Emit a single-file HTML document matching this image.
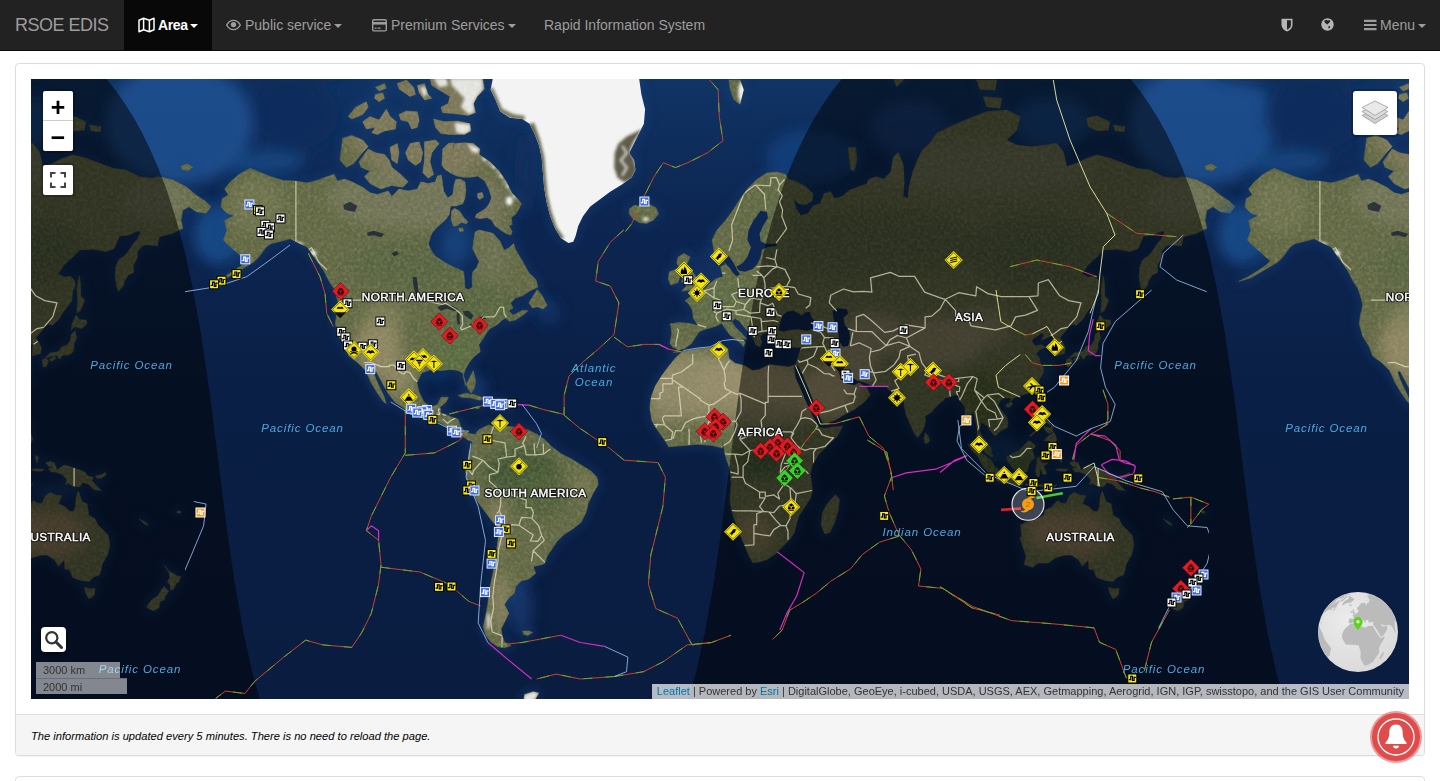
<!DOCTYPE html>
<html lang="en"><head><meta charset="utf-8"><title>RSOE EDIS</title>
<style>
*{box-sizing:border-box}
html,body{margin:0;padding:0}
body{font-family:"Liberation Sans",Arial,sans-serif;font-size:14px;line-height:1.42857;color:#333;background:#fff;width:1440px;height:781px;overflow:hidden;position:relative}
.navbar{position:absolute;left:0;top:0;width:1440px;height:51px;background:#222;border-bottom:1px solid #080808}
.brand{position:absolute;left:15px;top:0;height:50px;line-height:50px;font-size:18px;letter-spacing:-.5px;color:#9d9d9d}
.nav a{position:absolute;top:0;height:50px;line-height:50px;color:#9d9d9d;font-size:14px;text-decoration:none;white-space:nowrap}
.nav a.active{background:#080808;color:#fff}
.caret{display:inline-block;width:0;height:0;margin-left:3px;vertical-align:middle;border-top:4px solid currentColor;border-right:4px solid transparent;border-left:4px solid transparent}
.panel{position:absolute;left:15px;width:1410px;border:1px solid #ddd;border-radius:4px;background:#fff;box-shadow:0 1px 1px rgba(0,0,0,.05)}
#p1{top:63px;height:693px}
#p2{top:776px;height:60px}
.footer{position:absolute;left:0;top:650px;width:1408px;height:41px;background:#f5f5f5;border-top:1px solid #ddd;border-radius:0 0 3px 3px;padding:10px 15px;font-size:11.15px;font-style:italic;color:#000;line-height:23px}
#map{position:absolute;left:31px;top:79px;width:1378px;height:620px;overflow:hidden;background:#0d2244}
#map svg{position:absolute;left:0;top:0}
.lbtn{position:absolute;background:#fff;color:#000;text-align:center}
.zoomc{position:absolute;left:10px;top:10px;width:34px;height:64px;border:2px solid rgba(0,0,0,.2);border-radius:4px;background-clip:padding-box}
.zoomc div{width:30px;height:30px;background:#fff;font:bold 25px/37px "Liberation Mono",monospace;overflow:hidden;text-align:center;color:#000}
.zoomc div:first-child{border-radius:2px 2px 0 0;border-bottom:1px solid #ccc;height:30px}
.zoomc div:last-child{border-radius:0 0 2px 2px}
.fsc{position:absolute;left:10px;top:84px;width:34px;height:34px;border:2px solid rgba(0,0,0,.2);border-radius:4px}
.fsc div{width:30px;height:30px;background:#fff;border-radius:2px}
.layers{position:absolute;left:1320px;top:10px;width:48px;height:48px;border:2px solid rgba(0,0,0,.2);border-radius:5px}
.layers div{width:44px;height:44px;background:#fff;border-radius:3px}
.attr{position:absolute;right:0;bottom:0;height:15px;background:rgba(255,255,255,.7);font-size:11px;line-height:15px;padding:0 5px;color:#333;white-space:nowrap}
.attr a{color:#0078a8;text-decoration:none}
.scale{position:absolute;left:5px;font-size:11px;line-height:16px;color:#333;background:rgba(255,255,255,.5);padding:0 0 0 7px;white-space:nowrap;overflow:hidden}
.search{position:absolute;left:10px;top:548px;width:25px;height:25px;background:#fff;border-radius:4px;box-shadow:0 1px 5px rgba(0,0,0,.65)}
.bell{position:absolute;left:1372px;top:713px;width:48px;height:48px;border-radius:50%;background:#e04b4c;box-shadow:0 0 0 2px rgba(224,75,76,.55)}
</style></head><body>
<div class="navbar">
<div class="brand">RSOE EDIS</div>
<div class="nav">
<a class="active" style="left:124px;width:88px"><svg style="position:absolute;left:14px;top:17px" width="17" height="16" viewBox="0 0 17 16"><path d="M1 3.2 5.6 1.3 11.4 3.2 16 1.3V12.8L11.4 14.7 5.6 12.8 1 14.7Z M5.6 1.3V12.8 M11.4 3.2V14.7" fill="none" stroke="#fff" stroke-width="1.5" stroke-linejoin="round"/></svg><span style="position:absolute;left:34px;font-weight:bold;letter-spacing:-.4px">Area</span><span class="caret" style="position:absolute;left:66px;top:24px;margin:0"></span></a>
<a style="left:226px;padding-left:19px"><svg style="position:absolute;left:0;top:18px" width="15" height="14" viewBox="0 0 15 14"><path d="M.7 7C2.5 3.6 5 2.4 7.5 2.4S12.5 3.6 14.3 7C12.5 10.4 10 11.6 7.5 11.6S2.5 10.4.7 7Z" fill="none" stroke="#9d9d9d" stroke-width="1.4"/><circle cx="7.5" cy="6.6" r="2.7" fill="#9d9d9d"/></svg>Public service<span class="caret"></span></a>
<a style="left:372px;padding-left:19px"><svg style="position:absolute;left:0;top:19px" width="15" height="13" viewBox="0 0 15 13"><rect x=".7" y=".7" width="13.6" height="11.2" rx="1.3" fill="none" stroke="#9d9d9d" stroke-width="1.4"/><rect x=".7" y="3" width="13.6" height="2.6" fill="#9d9d9d"/><rect x="2.6" y="8.6" width="2" height="1.2" fill="#9d9d9d"/><rect x="5.6" y="8.6" width="3" height="1.2" fill="#9d9d9d"/></svg>Premium Services<span class="caret"></span></a>
<a style="left:544px">Rapid Information System</a>
<svg style="position:absolute;left:1281px;top:18px" width="12" height="14" viewBox="0 0 12 14"><path d="M.5.8H11.5V7C11.5 10 9 12.3 6 13.5 3 12.3.5 10 .5 7Z" fill="#b5b5b5"/><path d="M6 2.3H9.9V7C9.900 9 8.300 10.600 6 11.700Z" fill="#222"/></svg>
<svg style="position:absolute;left:1321px;top:18px" width="13" height="13" viewBox="0 0 13 13"><circle cx="6.500" cy="6.500" r="6.200" fill="#b5b5b5"/><path d="M3.200 2.800 5.200 1.800 6.800 2.600 8.600 2 9.300 3.600 7.800 5 6.300 6.500 5 5.600 3.800 4.600Z M7.200 8.200 8.800 8 9 9.800 7.800 10.800Z" fill="#222"/></svg>
<svg style="position:absolute;left:1364px;top:19px" width="13" height="12" viewBox="0 0 13 12"><path d="M0 1.900H12.500M0 6H12.500M0 10.100H12.500" stroke="#9d9d9d" stroke-width="2.100"/></svg>
<a style="left:1380px">Menu<span class="caret"></span></a>
</div>
</div>
<div class="panel" id="p1">
<div class="footer">The information is updated every 5 minutes. There is no need to reload the page.</div>
</div>
<div class="panel" id="p2"></div>
<div id="map">
<svg width="1378" height="620" viewBox="0 0 1378 620">
<defs>
<filter id="b8" x="-50%" y="-50%" width="200%" height="200%"><feGaussianBlur stdDeviation="7"/></filter>
<filter id="b5" x="-20%" y="-20%" width="140%" height="140%"><feGaussianBlur stdDeviation="5"/></filter>
<filter id="b2" x="-50%" y="-50%" width="200%" height="200%"><feGaussianBlur stdDeviation="1.6"/></filter>
<filter id="nz" x="0" y="0" width="100%" height="100%"><feTurbulence type="fractalNoise" baseFrequency=".3" numOctaves="3" seed="7"/><feColorMatrix type="matrix" values="0 0 0 0 .52  0 0 0 0 .52  0 0 0 0 .36  .9 .9 0 0 -.72"/></filter>
<linearGradient id="og" x1="0" y1="0" x2="0" y2="1"><stop offset="0" stop-color="#103465"/><stop offset=".2" stop-color="#0d2753"/><stop offset=".5" stop-color="#0a1f45"/><stop offset="1" stop-color="#0a1d41"/></linearGradient>
<clipPath id="lc"><path d="M193.6,109.9 199.7,102.6 208.2,95.3 219.2,89.3 227.7,92.9 239.8,97.8 252,101.4 264.2,102.1 276.3,103.9 286.1,101.4 295.8,97.8 303.1,95.3 306.3,101.9 313.5,100.1 320.8,102.8 331.7,108.3 339,113.7 346.3,115.5 357.2,111.9 360.8,117.4 368.1,110.1 377.2,111.9 386.3,110.1 389.9,102.8 397.2,104.6 404.5,102.8 404.4,102.8 406.3,97.1 410.3,96 411.5,104.1 412.6,112.1 416.7,119 421.9,115.6 423,106.4 424.7,100.6 429.3,100 434,102.9 434.9,111 434,119 431.7,124.8 424.7,127.1 419.5,127.1 418.4,135.2 414.4,140.9 406.3,147.9 400.5,154.8 397.6,164 397.1,171 397.5,165.8 400.7,172.2 404.5,177.3 412.2,182.5 421.2,187.6 428.9,190.8 432.7,192.7 433.4,200.4 434,209.3 437.8,210.6 441.7,208.1 441,200.4 441.7,192.7 445.5,188.9 448.1,182.5 444.2,174.8 441.7,169.7 443,159.4 444.2,153 448.1,151.1 452.3,151.9 462,154.3 469.3,162.8 473,171.3 477.8,168.9 482.7,164.5 484.4,170.5 491.7,182.6 497.8,193.6 505.1,200.9 506.8,208.2 499,211.8 491.7,216.7 484.4,219.1 479.6,224 482,228.9 477.6,231.8 482,236.2 491.7,231.3 497.1,231.8 491.7,236.2 484.4,241 478.4,242.3 474.7,239.1 471.1,241 467.4,244.7 463.8,247.1 458.9,249.6 455.2,254.4 451.6,260.5 447.9,265.4 449.2,272.7 443.1,277.5 438.2,283.6 434.6,289.7 432.1,297 434.6,306.7 442.3,291.6 444.7,302.5 443,309.8 440.3,314 436.9,309.8 434.5,302.5 431.6,294 427.2,291.6 419.9,290.4 410.1,291.6 400.4,290.4 390.7,294 385.8,303.7 388.2,313.5 393.1,323.2 400.4,328.1 406.5,325.6 410.1,318.3 417.4,318.3 415,323.2 408.9,328.1 410.1,334.2 415,335.4 419.9,337.8 427.2,340.2 429.6,347.5 433.3,352.4 439.3,354.8 447.9,356.1 453.9,357.3 450.3,360.9 443,363.4 436.9,360.9 432,357.3 424.7,353.6 415,347.5 407.7,342.7 400.4,340.2 390.7,337.8 378.5,332.9 371.2,328.1 363.9,323.2 356.6,313.5 350.5,302.5 344.9,292.1 342.5,293 344.9,300.1 348.8,308.6 353.2,317.9 355.1,324.7 352.2,322.2 345.7,313 339.6,302.5 334.7,291.6 327.4,284.3 317.7,277 314,267.2 307.9,257.5 304.3,245.3 305.5,235.6 309.2,221 308,226.7 305.5,217 303.1,209.7 298.2,202.4 293.4,192.7 288.5,185.4 281.2,175.6 276.3,168.3 269,164.7 259.3,159.8 249.6,162.3 239.8,164.7 235,168.3 227.7,178.1 222.8,182.9 210.6,190.2 196,198.8 183.9,202.4 193.6,197.5 203.3,191.5 210.6,186.6 215.5,181.7 210.6,178.1 205.8,173.2 199.7,168.3 192.4,161 196,151.3 193.6,141.6 203.3,136.7 196,134.3 190,128.2 191.2,119.7 197.3,116ZM506.3,210.6 511.2,216.7 516.1,226.4 512.4,230.1 506.3,227.7 501.5,228.9 497.8,224 501.5,217.9ZM427.2,316.4 434.5,314.2 444.2,315.9 453.9,319.6 449.1,321.3 439.3,318.8 430.8,318.3ZM460,322 467.3,320.8 474.6,324.4 471,327.6 463.7,326.9 458.8,325.2ZM309,81 311.7,59.2 320.8,56.5 331.7,61 337.2,67.4 329.9,75.5 322.6,84.6 315.4,88.3ZM328.1,82.8 337.2,70.1 344.5,73.7 353.5,75.5 358.1,81 360.8,88.3 369.9,95.5 377.2,102.8 371.7,108.3 360.8,106.5 349.9,110.1 339,104.6 333.5,97.4 339,91.9 329.9,88.3ZM359,68.3 366.3,64.6 368.1,73.7 366.3,84.6 360.8,81ZM374.5,73.7 379,64.6 388.1,62.8 391.7,73.7 389.9,82.8 384.5,86.5 377.2,81ZM393.5,62.8 404.5,61 408.1,64.6 400.8,73.7 399,82.8 402.6,95.5 397.2,99.2 391.7,93.7 393.5,81ZM317.2,37.4 324.5,28.3 335.4,22.8 337.2,28.3 331.7,35.5 320.8,40.1ZM331.7,42.8 339,37.4 348.1,41 355.4,30.1 359,37.4 365.4,42.8 364.5,50.1 353.5,51.9 346.3,55.5 340.8,53.7 344.5,48.3 335.4,50.1ZM368.1,35.5 375.4,31.9 386.3,32.8 388.1,41 386.3,48.3 380.8,50.1 377.2,42.8 369.9,41ZM402.6,40.1 413.5,42.8 426.3,41.9 439,44.6 439.9,51.9 433.5,55.5 419,55.5 409.9,54.6 404.5,48.3ZM366.3,4.6 375.4,1 382.6,8.3 384.5,15.5 379,17.4 368.1,10.1ZM386.3,6.5 393.5,4.6 397.2,15.5 400.8,19.2 393.5,21 388.1,13.7ZM399,-0.8 451.7,-0.8 453.5,10.1 446.3,17.4 442.6,24.6 444.5,33.7 437.2,36.5 422.6,34.6 411.7,33.7 409.9,28.3 417.2,24.6 419,17.4 409.9,11.9 400.8,6.5ZM344.5,8.3 353.5,4.6 355.4,9.2 348.1,11.9ZM344.5,15.5 351.7,13.7 353.5,19.2 348.1,22.8 343.5,19.2ZM445.5,353.2 447.9,350.7 457.7,345.9 465,348.3 474.7,347.1 484.4,348.3 496.6,350.7 506.3,355.6 513.6,360.5 520.9,367.8 530.7,375.1 540.4,379.9 550.1,386 559.9,392.1 566,398.2 567.2,405.5 562.3,414 557.4,423.7 555,433.5 550.1,443.2 542.8,449.3 533.1,455.4 525.8,462.7 520.9,470 516.1,477.3 513.6,484.6 511.2,485.4 502.3,487.7 504.6,494.3 497.9,499.9 490.1,502.1 484.6,507.7 483.4,514.3 477.9,518.8 473.4,525.4 477.9,534.3 473.4,543.2 470.1,549.9 471.2,556.6 473.4,563.2 480.1,566.6 473.4,568.8 466.8,567.7 460.1,563.2 454.6,556.6 452.3,547.7 454.6,536.6 456.8,525.4 457.9,514.3 460.1,503.2 462.3,492.1 464.6,481 463.8,477.3 466.2,467.5 467.4,457.8 466.2,448.1 460.1,440.8 452.8,431 445.5,421.3 440.6,411.6 435.8,401.8 434.6,392.1 437,382.4 438.2,372.6 441.9,362.9ZM598.3,130 603.1,126.3 610.4,127.5 617.7,125.1 625,128.8 627.5,134.8 622.6,140.9 615.3,144.6 608,143.4 601.9,139.7 598.3,134.8ZM410.8,86.5 411.7,70.1 417.2,64.6 422.6,63.7 421.7,73.7 423.5,64.6 433.5,63.7 442.6,64.6 449,70.1 448.1,75.5 459,82.8 468.1,91.9 475.4,102.8 480.8,113.7 487,120.2 490.4,124.8 488.1,129.4 484.7,135.2 480.1,138.6 481.2,145.6 477.8,146.7 481.2,152.5 480.1,155.9 475.5,154.8 469.7,151.3 463.9,146.7 460.5,140.9 455.9,138.6 448.9,139.8 444.3,138.6 445.5,135.2 451.2,131.7 454.7,129.4 458.2,124.8 460.5,119 458.2,111 453.6,101.7 446.6,97.1 439.7,98.3 432.8,98.3 425.9,97.1 419,93.7 413.8,90.2 411.5,86.8ZM420.7,131.7 423.6,129.4 428.2,131.7 432.8,138.6 436.8,142.7 435.1,145 430.5,143.2 425.9,146.7 422.4,147.3 420.1,140.9ZM427.6,149.2 431.7,149 432.6,151.9 428.8,152.7ZM446.6,114.4 451.2,113.5 452.6,117.9 448.9,120.4 446.6,118.5ZM642.1,273.3 655.5,272.1 667.7,269.7 679.8,268.5 692,266 696.9,269.7 698.1,279.4 704.2,284.3 713.9,286.7 721.2,291.6 728.5,290.4 738.2,285.5 748,286.7 757.7,287.9 765,285.5 764,287.7 768.2,274.3 770.7,267.7 765.7,268.5 759,267.7 752.3,269.3 745.7,267.7 744,261 745.7,256 744,254.3 737.3,253.5 732.3,254.3 729,257.7 730.7,262.7 729,267.7 724.8,266 722.3,259.3 719,254.3 714,249.3 709,242.7 704,239.3 700.7,242.7 704,247.7 710.7,254.3 715.7,260.2 711.5,259.3 714,263.5 712.3,267.7 710.7,265.2 705.7,261 699,256 694,249.3 690.7,244.3 685.7,246.8 680.7,248.5 674,250.2 668.2,252.7 664.8,257.7 660.7,264.3 654,269.3 647.3,271 641.5,267.7 639,264.3 640.7,254.3 639.8,245.2 647.3,243.5 657.3,244.3 667.3,246.8 662.3,239.3 661.5,231 657.3,224.3 654,221.8 660.4,217 667.7,213.4 673.8,209.7 678.6,204.8 684.7,200 692,197.5 689.6,187.8 694.4,185.4 692,180.5 688.4,179.3 683.5,174.4 681.1,161 685.9,151.3 694.4,141.6 701.7,131.8 707.8,122.1 716.3,109.9 726.1,100.2 735.8,94.1 745.5,92.9 754.1,95.3 757.7,100.2 765,102.6 774.7,107.5 782,114.8 780.8,122.1 774.7,125.8 767.4,124.5 762.6,119.7 765,129.4 769.9,136.7 777.2,134.3 782,127 789.3,124.5 793,114.8 799.1,112.4 803.9,119.7 811.2,117.2 818.5,111.2 828.3,107.5 835.6,105.1 838,100.2 845.3,97.8 852.6,100.2 859.9,92.9 862.3,78.3 867.2,73.4 872.1,85.6 873.3,102.6 872.1,117.2 876.9,119.7 878.2,107.5 881.8,92.9 886.7,80.7 891.5,71 899,64.3 905.7,54.3 919,47.7 939,39.3 955.7,32.7 975.7,31 989,37.7 985.7,51 975.7,61 985.7,66 999,67.7 1015.7,66 1025.7,64.3 1032.3,72.7 1035.7,87.7 1045.7,84.3 1055.7,79.3 1065.7,76 1079,79.3 1092.3,84.3 1105.7,89.3 1119,91 1132.3,97.7 1145.7,99.3 1152.3,97.7 1165.7,101 1179,107.7 1189,116 1199,122.7 1204,127.7 1199,134.3 1189,132.7 1182.3,127.7 1175.7,131 1174,141 1175.7,149.3 1165.7,154.3 1152.3,157.7 1150.4,166.9 1139.6,165.7 1135.3,166.9 1130.5,172.5 1130.2,179 1126.2,186.8 1126.8,193.4 1121.1,195.9 1117.1,203.1 1116.3,206.8 1111.7,212.3 1109.7,207.7 1108.3,198.3 1108.6,188.4 1112,180.6 1116,177.9 1120.5,173.6 1126.5,164.6 1130.5,159.9 1133.9,152.7 1130.2,152.1 1121.1,156.3 1112.6,156.9 1106.9,169.7 1098.4,172.5 1087,170.3 1072.8,170.8 1065.6,177.9 1057.1,185.8 1050.9,194.9 1057.1,198.3 1063.7,197.3 1067.6,201.7 1068.2,206.8 1065.6,212.3 1064.8,222 1057.1,231.7 1051.4,240.7 1044.9,246.5 1041.5,245 1037.5,248.1 1034.9,251.5 1028.7,259 1031.2,262.3 1034.4,268.8 1033.5,274.4 1028.7,276.1 1025.3,276.8 1025.5,271.6 1026.1,265.9 1021,264.5 1022.4,259 1019.8,256.8 1013.9,259.8 1010.7,260.9 1013,255.3 1010.2,254.2 1005.9,257.5 1001.6,260.1 1001.1,262.7 1004.5,267 1010.2,265.6 1014.4,268.1 1008.2,271.3 1005.1,275.1 1008.2,278.6 1009.6,285.3 1012.7,288.7 1012.5,293.6 1009.6,298.5 1006.5,304.9 1001.6,309.6 997.4,314.2 991.1,316.1 988.8,316.7 984,318.6 978.9,322.5 980.3,319.8 978.3,318.9 973.2,318.9 969.5,321 966.9,326.4 971.2,332.4 975.5,337.5 976.9,342.7 976.6,348.3 969.8,351.8 964.1,356.9 959,351.5 956.7,347.1 953.3,345.1 950.4,342.7 948.2,351.5 951,357.2 954.7,362.1 960.1,368.7 960.1,374.4 962.4,377.5 960.1,377.8 954.1,373.2 951.3,365.8 945.6,358.7 946.7,351.5 945,342.7 943.9,338.3 942.5,333.3 937.4,336 934.2,335.4 934.2,327.9 928.5,321.3 927.1,316.4 923.4,315.8 917.7,318.2 913.5,318.9 912.9,321 907.8,324.9 900.1,333.3 894.1,336.9 894.4,342.7 893.3,347.1 891.3,352 888.4,356.1 886.4,358.4 882.7,352.9 878.8,344.2 875.1,335.4 873.1,326.4 872.8,317.9 870.8,320.4 866,320.7 862.3,316.1 860,312.1 857.4,310.5 855.7,308 849.5,307.4 841.2,307.4 838,305 830.7,302.5 825.8,301.3 818.5,296.4 811.2,291.6 805.2,290.4 807.6,294 811.2,301.3 816.1,305 823.4,306.2 828.3,303.7 835.6,308.6 839.2,315.9 833.1,323.2 823.4,330.5 813.7,335.4 804.4,341 794.7,344.6 791.3,342.7 787.4,334.2 782.5,322 777.2,308.6 771.1,294 767,286.2 762.6,287.2 764.5,298.9 770.4,312.3 776,325.6 781.6,337.3 786.4,345.6 788.6,348.5 794.2,349.5 801.5,348 811.7,347.1 806.4,357.3 802.3,361 795,368.3 787.7,375.6 781.6,385.3 779.2,395.1 780.4,402.4 781.6,412.1 779.2,419.4 773.1,429.1 768.2,436.4 765.8,443.7 763.4,453.5 758.5,460.8 751.2,468.1 743.9,475.4 736.6,480.2 729.3,482.7 722,483.9 718.4,477.8 712.3,463.2 706.2,448.6 701.3,434 698.9,421.8 700.1,404.8 698.9,390.2 694,375.6 691.6,361 691.3,369 681.5,366.6 666.9,365.3 652.3,366.6 637.7,367.8 634.1,361.7 628,353.2 623.1,345.9 620.7,341 618.8,328.6 620.2,317.7 624.4,306.7 630.9,296.5 637.7,287.3 644.6,278.8 651.1,272.7ZM647,178.1 653.1,174.4 659.2,178.1 655.5,185.4 661.6,192.7 666.5,200 671.3,203.6 668.9,208.5 660.4,210.9 650.6,212.1 655.5,207.3 650.6,202.4 654.3,195.1 649.4,190.2 645.8,184.2ZM638.5,192.7 645.8,190.2 649.4,196.3 647,203.6 639.7,206.1 637.3,200ZM817.3,68.6 824.6,68.6 825.8,80.7 823.4,91.7 819.8,90.5 818.5,80.7ZM865.7,7.7 875.7,-2.3 870.7,-19 862.3,-29 857.3,-19 860.7,-5.7ZM698,1 709,1 712.7,10.7 709,25.3 702.9,20.5 699.3,10.7ZM1055.7,39.3 1065.7,37 1079,42.7 1077.3,51 1065.7,51.7 1057.3,47.7ZM1082.3,46 1094,47.7 1093,52.7 1084,51.7ZM1174,87 1180.7,85 1185.7,88.3 1180.7,91.7 1175,90.3ZM945.7,1 965.7,1 964,11 949,10.3ZM952.3,17.7 970.7,19.3 969,29.3 955.7,27.7ZM804.7,415.8 808.4,420.6 807.2,431.6 803.5,443.7 798.7,453.5 793.8,454.7 790.1,446.2 791.4,434 795,426.7 799.9,420.6ZM937.1,365.5 944.8,369.5 951.3,374.4 960.4,381.5 963.2,387.2 967.5,390.6 966.9,398 963.2,398 956.7,392.9 951.9,387.2 947,377.2 941.9,372.4ZM965.2,400.9 968.9,398.6 974.6,400.3 981.2,399.7 986.9,401.2 991.7,403.5 991.4,406.3 981.7,405.2 973.2,403.8 968.6,402.6ZM976,377.2 978.9,376.7 983.2,373.5 987.4,372.4 991.7,367.8 997.4,361.8 1000.2,363 1004.5,366.7 1001.1,371.5 1003.9,378.7 1000.2,381.5 997.4,387.2 996,392.9 991.7,392.9 987.4,390.9 983.2,390.6 979.5,385.8 976,381.5ZM1005.9,379.2 1009.6,377.8 1015.9,378.9 1021.6,376.9 1020.1,380.4 1011.6,380.4 1008.8,383.8 1013,384.1 1016.7,384.1 1012.5,387.2 1014.4,391.5 1015.3,395.2 1011.6,394.9 1010.2,390 1008.5,391.5 1008.5,397.2 1005.9,397.2 1004.5,391.5 1005.9,384.3ZM1038.6,383.8 1042.9,382.6 1047.2,383.8 1050,390.9 1057.1,386.1 1067.1,388.9 1077,392.6 1081.3,397.2 1086.4,398.6 1084.7,401.5 1091.2,408.6 1094.1,411.5 1087,410.7 1081.3,404.9 1075.6,403.5 1072.8,407.8 1067.1,407.5 1061.4,404.3 1058.5,405.5 1060,400.9 1055.7,395.7 1048.6,392.9 1044.3,392.9 1041.5,389.8 1046.6,388 1041.5,387.2ZM994.5,404.9 998.8,405.2 1004.5,405.5 1010.2,405.8 1015.9,405.2 1020.1,408.1 1025.8,405.5 1018.7,410.7 1010.2,407.2 1001.6,406.9 994.8,406.6ZM1088.4,397.2 1094.1,395.7 1098.4,393.5 1099.2,395.7 1094.1,399.2 1089.8,399.2ZM1028.7,376.4 1031.5,378.1 1030.1,383.8 1028.7,380.1ZM1024.4,390.6 1030.1,389.8 1037.2,390.6 1034.4,392.3 1027.2,391.7ZM1008.8,327.9 1013.6,328.2 1013.6,333.9 1011.6,338.3 1013,341.3 1018.7,341.9 1018.7,345.4 1014.4,342.4 1010.2,341.9 1009,339.8 1007.3,335.4ZM1013,361.5 1017.3,356.9 1023,353.5 1025.8,360.1 1024.4,363.5 1022.7,365.5 1018.7,362.1ZM1013,347.7 1016.4,348.6 1021.6,349.4 1023.5,345.7 1019.6,345.7 1022.1,352.9 1017.3,354.4 1014.4,351.5ZM999.4,357.5 1005.9,351.5 1005.9,349.1 1003.1,352.9 998.8,356.7ZM1007.6,314.2 1011.6,307.4 1012.7,309.6 1009.9,317.3ZM975.2,325.5 980.3,323.1 981.7,324.6 978.9,328.2 975.2,327.9ZM1035.2,281 1038.6,278.9 1041.5,282 1039.5,287.3 1036.3,288ZM1038.6,278.6 1042.9,274.1 1051.4,272.7 1055.1,267.4 1060,266.6 1063.7,260.9 1064.2,255.3 1068.2,251.9 1068.5,255.3 1069.9,259 1067.1,263.8 1066.5,271.6 1064.8,274.1 1060.8,276.1 1055.7,276.1 1052.3,280.3 1050,276.5 1044.3,277.5ZM1042.3,280.3 1047.7,277.5 1049.1,279.2 1044.3,282.6ZM1064.2,251.5 1065.1,245 1069.1,236.2 1072.8,240.7 1079.3,241.1 1079.9,245 1074.2,249.6 1068.5,247.7 1065.6,249.2ZM1069.9,233.8 1070.8,221.2 1069.9,210 1072.2,196.8 1073.6,205.4 1073.6,216.8 1077.6,221.2 1073.3,231.7ZM893,358.7 894.4,353.8 897.3,357.2 898.7,361.5 897,363.8 894.1,364.4ZM989.7,445.7 990.8,458.1 988.8,458.8 993.1,471 995.1,477.7 993.1,485.5 1001.4,488.2 1007.3,484.1 1017.3,484.1 1024.4,478.7 1032.9,476.3 1040,476 1047.2,480.4 1051.4,487.2 1057.1,481 1058,490 1062.8,491 1065.6,498.5 1074.2,501.4 1082.1,502.5 1086.4,498.1 1092.7,496 1095.5,484.4 1100.6,476 1102.9,466.1 1101.2,456.6 1095.5,450.3 1091.2,446.6 1087.8,439.6 1082.1,436.6 1079.9,424.7 1075,422.6 1071.3,412.1 1069.1,418.8 1068.5,427.6 1066.5,432.4 1062.2,432.1 1058,427.6 1051.4,424.7 1054.8,416.5 1050,416.5 1042.9,413.6 1038.6,416.8 1034.9,424.4 1030.1,424.1 1026.7,421.4 1020.1,428.5 1013.9,431.2 1013,435.7 1005.9,439.9 997.9,441.7 991.7,445.1ZM1077.6,508.4 1082.7,509.9 1087.8,509.2 1087.8,514.1 1085.6,518 1081.9,519.6 1079,514.5ZM1157.2,486.2 1162.4,492.4 1166.1,494.2 1170,497.1 1173.7,497.4 1171.7,502.9 1169.2,504 1166.6,510.3 1163.5,511.1 1163.2,505.8 1160.4,502.9 1162.9,498.5 1161.8,493.2ZM1157.2,507.7 1161.8,512.2 1158.1,517.2 1157.5,520.8 1153.3,522.3 1151.8,528.8 1146.7,531.7 1142.4,530 1139.6,528 1144.7,521.1 1151,516.8 1155.2,509.6ZM1132.5,439.9 1139.6,444.1 1141,446.6 1136.8,444.4ZM1170.3,431.8 1174,432.4 1173.4,434.2 1170.3,433.9ZM491.6,552 498.2,552 501.6,553.4 496.8,556.6 492.5,555.3ZM444.1,327.9 449,328.8 445.6,330ZM474.9,327.9 479.4,328.2 478.3,329.7 474.9,329.4ZM639,245 641,244.6 639.5,246.2ZM493.4,615.4 502.3,612.6 507.9,613.9 504.6,619.9 499,623.2 492.3,623.2Z"/></clipPath>
<g id="world">
<g filter="url(#b8)">
<ellipse cx="447.0" cy="307.9" rx="8.5" ry="9.4" fill="#1a4c8a" opacity="0.6"/>
<ellipse cx="407.2" cy="296.9" rx="17.0" ry="4.8" fill="#17427c" opacity="0.6"/>
<ellipse cx="518.1" cy="233.5" rx="11.4" ry="12.3" fill="#15407a" opacity="0.55"/>
<ellipse cx="1044.3" cy="411.6" rx="28.5" ry="7.2" fill="#18467f" opacity="0.7"/>
<ellipse cx="973.2" cy="370.1" rx="17.1" ry="14.2" fill="#17427c" opacity="0.6"/>
<ellipse cx="1015.9" cy="288.1" rx="11.3" ry="19.9" fill="#17427c" opacity="0.6"/>
<ellipse cx="478.3" cy="513.9" rx="8.5" ry="15.4" fill="#16407a" opacity="0.6"/>
<ellipse cx="438.4" cy="-8.2" rx="71.2" ry="15.6" fill="#0e2b5a" opacity="0.5"/>
<ellipse cx="1172.3" cy="44.9" rx="74.0" ry="60.4" fill="#1c4f8f" opacity="0.9"/>
<ellipse cx="233.6" cy="82.7" rx="39.9" ry="10.9" fill="#1b4c8a" opacity="0.8"/>
<ellipse cx="188.1" cy="155.7" rx="25.6" ry="30.1" fill="#1b4f8e" opacity="0.85"/>
<ellipse cx="424.2" cy="165.5" rx="17.1" ry="22.9" fill="#1a4c8a" opacity="0.7"/>
<ellipse cx="677.4" cy="187.3" rx="14.2" ry="20.4" fill="#18467f" opacity="0.35"/>
<ellipse cx="779.8" cy="79.0" rx="45.5" ry="27.8" fill="#18488a" opacity="0.6"/>
<ellipse cx="489.6" cy="526.9" rx="11.4" ry="28.4" fill="#17407a" opacity="0.7"/>
<ellipse cx="879.3" cy="48.8" rx="39.9" ry="27.7" fill="#1a4a8a" opacity="0.6"/>
<ellipse cx="1021.6" cy="43.6" rx="39.8" ry="25.2" fill="#1d5294" opacity="0.7"/>
<ellipse cx="495.3" cy="93.5" rx="11.4" ry="42.5" fill="#103264" opacity="0.6"/>
<ellipse cx="259.2" cy="35.9" rx="48.4" ry="35.8" fill="#0e2b5c" opacity="0.95"/>
<ellipse cx="239.3" cy="-8.2" rx="85.4" ry="15.6" fill="#0d2a58" opacity="0.8"/>
</g>
<path d="M193.6,109.9 199.7,102.6 208.2,95.3 219.2,89.3 227.7,92.9 239.8,97.8 252,101.4 264.2,102.1 276.3,103.9 286.1,101.4 295.8,97.8 303.1,95.3 306.3,101.9 313.5,100.1 320.8,102.8 331.7,108.3 339,113.7 346.3,115.5 357.2,111.9 360.8,117.4 368.1,110.1 377.2,111.9 386.3,110.1 389.9,102.8 397.2,104.6 404.5,102.8 404.4,102.8 406.3,97.1 410.3,96 411.5,104.1 412.6,112.1 416.7,119 421.9,115.6 423,106.4 424.7,100.6 429.3,100 434,102.9 434.9,111 434,119 431.7,124.8 424.7,127.1 419.5,127.1 418.4,135.2 414.4,140.9 406.3,147.9 400.5,154.8 397.6,164 397.1,171 397.5,165.8 400.7,172.2 404.5,177.3 412.2,182.5 421.2,187.6 428.9,190.8 432.7,192.7 433.4,200.4 434,209.3 437.8,210.6 441.7,208.1 441,200.4 441.7,192.7 445.5,188.9 448.1,182.5 444.2,174.8 441.7,169.7 443,159.4 444.2,153 448.1,151.1 452.3,151.9 462,154.3 469.3,162.8 473,171.3 477.8,168.9 482.7,164.5 484.4,170.5 491.7,182.6 497.8,193.6 505.1,200.9 506.8,208.2 499,211.8 491.7,216.7 484.4,219.1 479.6,224 482,228.9 477.6,231.8 482,236.2 491.7,231.3 497.1,231.8 491.7,236.2 484.4,241 478.4,242.3 474.7,239.1 471.1,241 467.4,244.7 463.8,247.1 458.9,249.6 455.2,254.4 451.6,260.5 447.9,265.4 449.2,272.7 443.1,277.5 438.2,283.6 434.6,289.7 432.1,297 434.6,306.7 442.3,291.6 444.7,302.5 443,309.8 440.3,314 436.9,309.8 434.5,302.5 431.6,294 427.2,291.6 419.9,290.4 410.1,291.6 400.4,290.4 390.7,294 385.8,303.7 388.2,313.5 393.1,323.2 400.4,328.1 406.5,325.6 410.1,318.3 417.4,318.3 415,323.2 408.9,328.1 410.1,334.2 415,335.4 419.9,337.8 427.2,340.2 429.6,347.5 433.3,352.4 439.3,354.8 447.9,356.1 453.9,357.3 450.3,360.9 443,363.4 436.9,360.9 432,357.3 424.7,353.6 415,347.5 407.7,342.7 400.4,340.2 390.7,337.8 378.5,332.9 371.2,328.1 363.9,323.2 356.6,313.5 350.5,302.5 344.9,292.1 342.5,293 344.9,300.1 348.8,308.6 353.2,317.9 355.1,324.7 352.2,322.2 345.7,313 339.6,302.5 334.7,291.6 327.4,284.3 317.7,277 314,267.2 307.9,257.5 304.3,245.3 305.5,235.6 309.2,221 308,226.7 305.5,217 303.1,209.7 298.2,202.4 293.4,192.7 288.5,185.4 281.2,175.6 276.3,168.3 269,164.7 259.3,159.8 249.6,162.3 239.8,164.7 235,168.3 227.7,178.1 222.8,182.9 210.6,190.2 196,198.8 183.9,202.4 193.6,197.5 203.3,191.5 210.6,186.6 215.5,181.7 210.6,178.1 205.8,173.2 199.7,168.3 192.4,161 196,151.3 193.6,141.6 203.3,136.7 196,134.3 190,128.2 191.2,119.7 197.3,116ZM506.3,210.6 511.2,216.7 516.1,226.4 512.4,230.1 506.3,227.7 501.5,228.9 497.8,224 501.5,217.9ZM427.2,316.4 434.5,314.2 444.2,315.9 453.9,319.6 449.1,321.3 439.3,318.8 430.8,318.3ZM460,322 467.3,320.8 474.6,324.4 471,327.6 463.7,326.9 458.8,325.2ZM309,81 311.7,59.2 320.8,56.5 331.7,61 337.2,67.4 329.9,75.5 322.6,84.6 315.4,88.3ZM328.1,82.8 337.2,70.1 344.5,73.7 353.5,75.5 358.1,81 360.8,88.3 369.9,95.5 377.2,102.8 371.7,108.3 360.8,106.5 349.9,110.1 339,104.6 333.5,97.4 339,91.9 329.9,88.3ZM359,68.3 366.3,64.6 368.1,73.7 366.3,84.6 360.8,81ZM374.5,73.7 379,64.6 388.1,62.8 391.7,73.7 389.9,82.8 384.5,86.5 377.2,81ZM393.5,62.8 404.5,61 408.1,64.6 400.8,73.7 399,82.8 402.6,95.5 397.2,99.2 391.7,93.7 393.5,81ZM317.2,37.4 324.5,28.3 335.4,22.8 337.2,28.3 331.7,35.5 320.8,40.1ZM331.7,42.8 339,37.4 348.1,41 355.4,30.1 359,37.4 365.4,42.8 364.5,50.1 353.5,51.9 346.3,55.5 340.8,53.7 344.5,48.3 335.4,50.1ZM368.1,35.5 375.4,31.9 386.3,32.8 388.1,41 386.3,48.3 380.8,50.1 377.2,42.8 369.9,41ZM402.6,40.1 413.5,42.8 426.3,41.9 439,44.6 439.9,51.9 433.5,55.5 419,55.5 409.9,54.6 404.5,48.3ZM366.3,4.6 375.4,1 382.6,8.3 384.5,15.5 379,17.4 368.1,10.1ZM386.3,6.5 393.5,4.6 397.2,15.5 400.8,19.2 393.5,21 388.1,13.7ZM399,-0.8 451.7,-0.8 453.5,10.1 446.3,17.4 442.6,24.6 444.5,33.7 437.2,36.5 422.6,34.6 411.7,33.7 409.9,28.3 417.2,24.6 419,17.4 409.9,11.9 400.8,6.5ZM344.5,8.3 353.5,4.6 355.4,9.2 348.1,11.9ZM344.5,15.5 351.7,13.7 353.5,19.2 348.1,22.8 343.5,19.2ZM445.5,353.2 447.9,350.7 457.7,345.9 465,348.3 474.7,347.1 484.4,348.3 496.6,350.7 506.3,355.6 513.6,360.5 520.9,367.8 530.7,375.1 540.4,379.9 550.1,386 559.9,392.1 566,398.2 567.2,405.5 562.3,414 557.4,423.7 555,433.5 550.1,443.2 542.8,449.3 533.1,455.4 525.8,462.7 520.9,470 516.1,477.3 513.6,484.6 511.2,485.4 502.3,487.7 504.6,494.3 497.9,499.9 490.1,502.1 484.6,507.7 483.4,514.3 477.9,518.8 473.4,525.4 477.9,534.3 473.4,543.2 470.1,549.9 471.2,556.6 473.4,563.2 480.1,566.6 473.4,568.8 466.8,567.7 460.1,563.2 454.6,556.6 452.3,547.7 454.6,536.6 456.8,525.4 457.9,514.3 460.1,503.2 462.3,492.1 464.6,481 463.8,477.3 466.2,467.5 467.4,457.8 466.2,448.1 460.1,440.8 452.8,431 445.5,421.3 440.6,411.6 435.8,401.8 434.6,392.1 437,382.4 438.2,372.6 441.9,362.9ZM598.3,130 603.1,126.3 610.4,127.5 617.7,125.1 625,128.8 627.5,134.8 622.6,140.9 615.3,144.6 608,143.4 601.9,139.7 598.3,134.8ZM410.8,86.5 411.7,70.1 417.2,64.6 422.6,63.7 421.7,73.7 423.5,64.6 433.5,63.7 442.6,64.6 449,70.1 448.1,75.5 459,82.8 468.1,91.9 475.4,102.8 480.8,113.7 487,120.2 490.4,124.8 488.1,129.4 484.7,135.2 480.1,138.6 481.2,145.6 477.8,146.7 481.2,152.5 480.1,155.9 475.5,154.8 469.7,151.3 463.9,146.7 460.5,140.9 455.9,138.6 448.9,139.8 444.3,138.6 445.5,135.2 451.2,131.7 454.7,129.4 458.2,124.8 460.5,119 458.2,111 453.6,101.7 446.6,97.1 439.7,98.3 432.8,98.3 425.9,97.1 419,93.7 413.8,90.2 411.5,86.8ZM420.7,131.7 423.6,129.4 428.2,131.7 432.8,138.6 436.8,142.7 435.1,145 430.5,143.2 425.9,146.7 422.4,147.3 420.1,140.9ZM427.6,149.2 431.7,149 432.6,151.9 428.8,152.7ZM446.6,114.4 451.2,113.5 452.6,117.9 448.9,120.4 446.6,118.5ZM642.1,273.3 655.5,272.1 667.7,269.7 679.8,268.5 692,266 696.9,269.7 698.1,279.4 704.2,284.3 713.9,286.7 721.2,291.6 728.5,290.4 738.2,285.5 748,286.7 757.7,287.9 765,285.5 764,287.7 768.2,274.3 770.7,267.7 765.7,268.5 759,267.7 752.3,269.3 745.7,267.7 744,261 745.7,256 744,254.3 737.3,253.5 732.3,254.3 729,257.7 730.7,262.7 729,267.7 724.8,266 722.3,259.3 719,254.3 714,249.3 709,242.7 704,239.3 700.7,242.7 704,247.7 710.7,254.3 715.7,260.2 711.5,259.3 714,263.5 712.3,267.7 710.7,265.2 705.7,261 699,256 694,249.3 690.7,244.3 685.7,246.8 680.7,248.5 674,250.2 668.2,252.7 664.8,257.7 660.7,264.3 654,269.3 647.3,271 641.5,267.7 639,264.3 640.7,254.3 639.8,245.2 647.3,243.5 657.3,244.3 667.3,246.8 662.3,239.3 661.5,231 657.3,224.3 654,221.8 660.4,217 667.7,213.4 673.8,209.7 678.6,204.8 684.7,200 692,197.5 689.6,187.8 694.4,185.4 692,180.5 688.4,179.3 683.5,174.4 681.1,161 685.9,151.3 694.4,141.6 701.7,131.8 707.8,122.1 716.3,109.9 726.1,100.2 735.8,94.1 745.5,92.9 754.1,95.3 757.7,100.2 765,102.6 774.7,107.5 782,114.8 780.8,122.1 774.7,125.8 767.4,124.5 762.6,119.7 765,129.4 769.9,136.7 777.2,134.3 782,127 789.3,124.5 793,114.8 799.1,112.4 803.9,119.7 811.2,117.2 818.5,111.2 828.3,107.5 835.6,105.1 838,100.2 845.3,97.8 852.6,100.2 859.9,92.9 862.3,78.3 867.2,73.4 872.1,85.6 873.3,102.6 872.1,117.2 876.9,119.7 878.2,107.5 881.8,92.9 886.7,80.7 891.5,71 899,64.3 905.7,54.3 919,47.7 939,39.3 955.7,32.7 975.7,31 989,37.7 985.7,51 975.7,61 985.7,66 999,67.7 1015.7,66 1025.7,64.3 1032.3,72.7 1035.7,87.7 1045.7,84.3 1055.7,79.3 1065.7,76 1079,79.3 1092.3,84.3 1105.7,89.3 1119,91 1132.3,97.7 1145.7,99.3 1152.3,97.7 1165.7,101 1179,107.7 1189,116 1199,122.7 1204,127.7 1199,134.3 1189,132.7 1182.3,127.7 1175.7,131 1174,141 1175.7,149.3 1165.7,154.3 1152.3,157.7 1150.4,166.9 1139.6,165.7 1135.3,166.9 1130.5,172.5 1130.2,179 1126.2,186.8 1126.8,193.4 1121.1,195.9 1117.1,203.1 1116.3,206.8 1111.7,212.3 1109.7,207.7 1108.3,198.3 1108.6,188.4 1112,180.6 1116,177.9 1120.5,173.6 1126.5,164.6 1130.5,159.9 1133.9,152.7 1130.2,152.1 1121.1,156.3 1112.6,156.9 1106.9,169.7 1098.4,172.5 1087,170.3 1072.8,170.8 1065.6,177.9 1057.1,185.8 1050.9,194.9 1057.1,198.3 1063.7,197.3 1067.6,201.7 1068.2,206.8 1065.6,212.3 1064.8,222 1057.1,231.7 1051.4,240.7 1044.9,246.5 1041.5,245 1037.5,248.1 1034.9,251.5 1028.7,259 1031.2,262.3 1034.4,268.8 1033.5,274.4 1028.7,276.1 1025.3,276.8 1025.5,271.6 1026.1,265.9 1021,264.5 1022.4,259 1019.8,256.8 1013.9,259.8 1010.7,260.9 1013,255.3 1010.2,254.2 1005.9,257.5 1001.6,260.1 1001.1,262.7 1004.5,267 1010.2,265.6 1014.4,268.1 1008.2,271.3 1005.1,275.1 1008.2,278.6 1009.6,285.3 1012.7,288.7 1012.5,293.6 1009.6,298.5 1006.5,304.9 1001.6,309.6 997.4,314.2 991.1,316.1 988.8,316.7 984,318.6 978.9,322.5 980.3,319.8 978.3,318.9 973.2,318.9 969.5,321 966.9,326.4 971.2,332.4 975.5,337.5 976.9,342.7 976.6,348.3 969.8,351.8 964.1,356.9 959,351.5 956.7,347.1 953.3,345.1 950.4,342.7 948.2,351.5 951,357.2 954.7,362.1 960.1,368.7 960.1,374.4 962.4,377.5 960.1,377.8 954.1,373.2 951.3,365.8 945.6,358.7 946.7,351.5 945,342.7 943.9,338.3 942.5,333.3 937.4,336 934.2,335.4 934.2,327.9 928.5,321.3 927.1,316.4 923.4,315.8 917.7,318.2 913.5,318.9 912.9,321 907.8,324.9 900.1,333.3 894.1,336.9 894.4,342.7 893.3,347.1 891.3,352 888.4,356.1 886.4,358.4 882.7,352.9 878.8,344.2 875.1,335.4 873.1,326.4 872.8,317.9 870.8,320.4 866,320.7 862.3,316.1 860,312.1 857.4,310.5 855.7,308 849.5,307.4 841.2,307.4 838,305 830.7,302.5 825.8,301.3 818.5,296.4 811.2,291.6 805.2,290.4 807.6,294 811.2,301.3 816.1,305 823.4,306.2 828.3,303.7 835.6,308.6 839.2,315.9 833.1,323.2 823.4,330.5 813.7,335.4 804.4,341 794.7,344.6 791.3,342.7 787.4,334.2 782.5,322 777.2,308.6 771.1,294 767,286.2 762.6,287.2 764.5,298.9 770.4,312.3 776,325.6 781.6,337.3 786.4,345.6 788.6,348.5 794.2,349.5 801.5,348 811.7,347.1 806.4,357.3 802.3,361 795,368.3 787.7,375.6 781.6,385.3 779.2,395.1 780.4,402.4 781.6,412.1 779.2,419.4 773.1,429.1 768.2,436.4 765.8,443.7 763.4,453.5 758.5,460.8 751.2,468.1 743.9,475.4 736.6,480.2 729.3,482.7 722,483.9 718.4,477.8 712.3,463.2 706.2,448.6 701.3,434 698.9,421.8 700.1,404.8 698.9,390.2 694,375.6 691.6,361 691.3,369 681.5,366.6 666.9,365.3 652.3,366.6 637.7,367.8 634.1,361.7 628,353.2 623.1,345.9 620.7,341 618.8,328.6 620.2,317.7 624.4,306.7 630.9,296.5 637.7,287.3 644.6,278.8 651.1,272.7ZM647,178.1 653.1,174.4 659.2,178.1 655.5,185.4 661.6,192.7 666.5,200 671.3,203.6 668.9,208.5 660.4,210.9 650.6,212.1 655.5,207.3 650.6,202.4 654.3,195.1 649.4,190.2 645.8,184.2ZM638.5,192.7 645.8,190.2 649.4,196.3 647,203.6 639.7,206.1 637.3,200ZM817.3,68.6 824.6,68.6 825.8,80.7 823.4,91.7 819.8,90.5 818.5,80.7ZM865.7,7.7 875.7,-2.3 870.7,-19 862.3,-29 857.3,-19 860.7,-5.7ZM698,1 709,1 712.7,10.7 709,25.3 702.9,20.5 699.3,10.7ZM1055.7,39.3 1065.7,37 1079,42.7 1077.3,51 1065.7,51.7 1057.3,47.7ZM1082.3,46 1094,47.7 1093,52.7 1084,51.7ZM1174,87 1180.7,85 1185.7,88.3 1180.7,91.7 1175,90.3ZM945.7,1 965.7,1 964,11 949,10.3ZM952.3,17.7 970.7,19.3 969,29.3 955.7,27.7ZM804.7,415.8 808.4,420.6 807.2,431.6 803.5,443.7 798.7,453.5 793.8,454.7 790.1,446.2 791.4,434 795,426.7 799.9,420.6ZM937.1,365.5 944.8,369.5 951.3,374.4 960.4,381.5 963.2,387.2 967.5,390.6 966.9,398 963.2,398 956.7,392.9 951.9,387.2 947,377.2 941.9,372.4ZM965.2,400.9 968.9,398.6 974.6,400.3 981.2,399.7 986.9,401.2 991.7,403.5 991.4,406.3 981.7,405.2 973.2,403.8 968.6,402.6ZM976,377.2 978.9,376.7 983.2,373.5 987.4,372.4 991.7,367.8 997.4,361.8 1000.2,363 1004.5,366.7 1001.1,371.5 1003.9,378.7 1000.2,381.5 997.4,387.2 996,392.9 991.7,392.9 987.4,390.9 983.2,390.6 979.5,385.8 976,381.5ZM1005.9,379.2 1009.6,377.8 1015.9,378.9 1021.6,376.9 1020.1,380.4 1011.6,380.4 1008.8,383.8 1013,384.1 1016.7,384.1 1012.5,387.2 1014.4,391.5 1015.3,395.2 1011.6,394.9 1010.2,390 1008.5,391.5 1008.5,397.2 1005.9,397.2 1004.5,391.5 1005.9,384.3ZM1038.6,383.8 1042.9,382.6 1047.2,383.8 1050,390.9 1057.1,386.1 1067.1,388.9 1077,392.6 1081.3,397.2 1086.4,398.6 1084.7,401.5 1091.2,408.6 1094.1,411.5 1087,410.7 1081.3,404.9 1075.6,403.5 1072.8,407.8 1067.1,407.5 1061.4,404.3 1058.5,405.5 1060,400.9 1055.7,395.7 1048.6,392.9 1044.3,392.9 1041.5,389.8 1046.6,388 1041.5,387.2ZM994.5,404.9 998.8,405.2 1004.5,405.5 1010.2,405.8 1015.9,405.2 1020.1,408.1 1025.8,405.5 1018.7,410.7 1010.2,407.2 1001.6,406.9 994.8,406.6ZM1088.4,397.2 1094.1,395.7 1098.4,393.5 1099.2,395.7 1094.1,399.2 1089.8,399.2ZM1028.7,376.4 1031.5,378.1 1030.1,383.8 1028.7,380.1ZM1024.4,390.6 1030.1,389.8 1037.2,390.6 1034.4,392.3 1027.2,391.7ZM1008.8,327.9 1013.6,328.2 1013.6,333.9 1011.6,338.3 1013,341.3 1018.7,341.9 1018.7,345.4 1014.4,342.4 1010.2,341.9 1009,339.8 1007.3,335.4ZM1013,361.5 1017.3,356.9 1023,353.5 1025.8,360.1 1024.4,363.5 1022.7,365.5 1018.7,362.1ZM1013,347.7 1016.4,348.6 1021.6,349.4 1023.5,345.7 1019.6,345.7 1022.1,352.9 1017.3,354.4 1014.4,351.5ZM999.4,357.5 1005.9,351.5 1005.9,349.1 1003.1,352.9 998.8,356.7ZM1007.6,314.2 1011.6,307.4 1012.7,309.6 1009.9,317.3ZM975.2,325.5 980.3,323.1 981.7,324.6 978.9,328.2 975.2,327.9ZM1035.2,281 1038.6,278.9 1041.5,282 1039.5,287.3 1036.3,288ZM1038.6,278.6 1042.9,274.1 1051.4,272.7 1055.1,267.4 1060,266.6 1063.7,260.9 1064.2,255.3 1068.2,251.9 1068.5,255.3 1069.9,259 1067.1,263.8 1066.5,271.6 1064.8,274.1 1060.8,276.1 1055.7,276.1 1052.3,280.3 1050,276.5 1044.3,277.5ZM1042.3,280.3 1047.7,277.5 1049.1,279.2 1044.3,282.6ZM1064.2,251.5 1065.1,245 1069.1,236.2 1072.8,240.7 1079.3,241.1 1079.9,245 1074.2,249.6 1068.5,247.7 1065.6,249.2ZM1069.9,233.8 1070.8,221.2 1069.9,210 1072.2,196.8 1073.6,205.4 1073.6,216.8 1077.6,221.2 1073.3,231.7ZM893,358.7 894.4,353.8 897.3,357.2 898.7,361.5 897,363.8 894.1,364.4ZM989.7,445.7 990.8,458.1 988.8,458.8 993.1,471 995.1,477.7 993.1,485.5 1001.4,488.2 1007.3,484.1 1017.3,484.1 1024.4,478.7 1032.9,476.3 1040,476 1047.2,480.4 1051.4,487.2 1057.1,481 1058,490 1062.8,491 1065.6,498.5 1074.2,501.4 1082.1,502.5 1086.4,498.1 1092.7,496 1095.5,484.4 1100.6,476 1102.9,466.1 1101.2,456.6 1095.5,450.3 1091.2,446.6 1087.8,439.6 1082.1,436.6 1079.9,424.7 1075,422.6 1071.3,412.1 1069.1,418.8 1068.5,427.6 1066.5,432.4 1062.2,432.1 1058,427.6 1051.4,424.7 1054.8,416.5 1050,416.5 1042.9,413.6 1038.6,416.8 1034.9,424.4 1030.1,424.1 1026.7,421.4 1020.1,428.5 1013.9,431.2 1013,435.7 1005.9,439.9 997.9,441.7 991.7,445.1ZM1077.6,508.4 1082.7,509.9 1087.8,509.2 1087.8,514.1 1085.6,518 1081.9,519.6 1079,514.5ZM1157.2,486.2 1162.4,492.4 1166.1,494.2 1170,497.1 1173.7,497.4 1171.7,502.9 1169.2,504 1166.6,510.3 1163.5,511.1 1163.2,505.8 1160.4,502.9 1162.9,498.5 1161.8,493.2ZM1157.2,507.7 1161.8,512.2 1158.1,517.2 1157.5,520.8 1153.3,522.3 1151.8,528.8 1146.7,531.7 1142.4,530 1139.6,528 1144.7,521.1 1151,516.8 1155.2,509.6ZM1132.5,439.9 1139.6,444.1 1141,446.6 1136.8,444.4ZM1170.3,431.8 1174,432.4 1173.4,434.2 1170.3,433.9ZM491.6,552 498.2,552 501.6,553.4 496.8,556.6 492.5,555.3ZM444.1,327.9 449,328.8 445.6,330ZM474.9,327.9 479.4,328.2 478.3,329.7 474.9,329.4ZM639,245 641,244.6 639.5,246.2ZM493.4,615.4 502.3,612.6 507.9,613.9 504.6,619.9 499,623.2 492.3,623.2Z" fill="none" stroke="#1a4680" stroke-width="7" stroke-linejoin="round" opacity=".42" filter="url(#b5)"/>
<path d="M193.6,109.9 199.7,102.6 208.2,95.3 219.2,89.3 227.7,92.9 239.8,97.8 252,101.4 264.2,102.1 276.3,103.9 286.1,101.4 295.8,97.8 303.1,95.3 306.3,101.9 313.5,100.1 320.8,102.8 331.7,108.3 339,113.7 346.3,115.5 357.2,111.9 360.8,117.4 368.1,110.1 377.2,111.9 386.3,110.1 389.9,102.8 397.2,104.6 404.5,102.8 404.4,102.8 406.3,97.1 410.3,96 411.5,104.1 412.6,112.1 416.7,119 421.9,115.6 423,106.4 424.7,100.6 429.3,100 434,102.9 434.9,111 434,119 431.7,124.8 424.7,127.1 419.5,127.1 418.4,135.2 414.4,140.9 406.3,147.9 400.5,154.8 397.6,164 397.1,171 397.5,165.8 400.7,172.2 404.5,177.3 412.2,182.5 421.2,187.6 428.9,190.8 432.7,192.7 433.4,200.4 434,209.3 437.8,210.6 441.7,208.1 441,200.4 441.7,192.7 445.5,188.9 448.1,182.5 444.2,174.8 441.7,169.7 443,159.4 444.2,153 448.1,151.1 452.3,151.9 462,154.3 469.3,162.8 473,171.3 477.8,168.9 482.7,164.5 484.4,170.5 491.7,182.6 497.8,193.6 505.1,200.9 506.8,208.2 499,211.8 491.7,216.7 484.4,219.1 479.6,224 482,228.9 477.6,231.8 482,236.2 491.7,231.3 497.1,231.8 491.7,236.2 484.4,241 478.4,242.3 474.7,239.1 471.1,241 467.4,244.7 463.8,247.1 458.9,249.6 455.2,254.4 451.6,260.5 447.9,265.4 449.2,272.7 443.1,277.5 438.2,283.6 434.6,289.7 432.1,297 434.6,306.7 442.3,291.6 444.7,302.5 443,309.8 440.3,314 436.9,309.8 434.5,302.5 431.6,294 427.2,291.6 419.9,290.4 410.1,291.6 400.4,290.4 390.7,294 385.8,303.7 388.2,313.5 393.1,323.2 400.4,328.1 406.5,325.6 410.1,318.3 417.4,318.3 415,323.2 408.9,328.1 410.1,334.2 415,335.4 419.9,337.8 427.2,340.2 429.6,347.5 433.3,352.4 439.3,354.8 447.9,356.1 453.9,357.3 450.3,360.9 443,363.4 436.9,360.9 432,357.3 424.7,353.6 415,347.5 407.7,342.7 400.4,340.2 390.7,337.8 378.5,332.9 371.2,328.1 363.9,323.2 356.6,313.5 350.5,302.5 344.9,292.1 342.5,293 344.9,300.1 348.8,308.6 353.2,317.9 355.1,324.7 352.2,322.2 345.7,313 339.6,302.5 334.7,291.6 327.4,284.3 317.7,277 314,267.2 307.9,257.5 304.3,245.3 305.5,235.6 309.2,221 308,226.7 305.5,217 303.1,209.7 298.2,202.4 293.4,192.7 288.5,185.4 281.2,175.6 276.3,168.3 269,164.7 259.3,159.8 249.6,162.3 239.8,164.7 235,168.3 227.7,178.1 222.8,182.9 210.6,190.2 196,198.8 183.9,202.4 193.6,197.5 203.3,191.5 210.6,186.6 215.5,181.7 210.6,178.1 205.8,173.2 199.7,168.3 192.4,161 196,151.3 193.6,141.6 203.3,136.7 196,134.3 190,128.2 191.2,119.7 197.3,116ZM506.3,210.6 511.2,216.7 516.1,226.4 512.4,230.1 506.3,227.7 501.5,228.9 497.8,224 501.5,217.9ZM427.2,316.4 434.5,314.2 444.2,315.9 453.9,319.6 449.1,321.3 439.3,318.8 430.8,318.3ZM460,322 467.3,320.8 474.6,324.4 471,327.6 463.7,326.9 458.8,325.2ZM309,81 311.7,59.2 320.8,56.5 331.7,61 337.2,67.4 329.9,75.5 322.6,84.6 315.4,88.3ZM328.1,82.8 337.2,70.1 344.5,73.7 353.5,75.5 358.1,81 360.8,88.3 369.9,95.5 377.2,102.8 371.7,108.3 360.8,106.5 349.9,110.1 339,104.6 333.5,97.4 339,91.9 329.9,88.3ZM359,68.3 366.3,64.6 368.1,73.7 366.3,84.6 360.8,81ZM374.5,73.7 379,64.6 388.1,62.8 391.7,73.7 389.9,82.8 384.5,86.5 377.2,81ZM393.5,62.8 404.5,61 408.1,64.6 400.8,73.7 399,82.8 402.6,95.5 397.2,99.2 391.7,93.7 393.5,81ZM317.2,37.4 324.5,28.3 335.4,22.8 337.2,28.3 331.7,35.5 320.8,40.1ZM331.7,42.8 339,37.4 348.1,41 355.4,30.1 359,37.4 365.4,42.8 364.5,50.1 353.5,51.9 346.3,55.5 340.8,53.7 344.5,48.3 335.4,50.1ZM368.1,35.5 375.4,31.9 386.3,32.8 388.1,41 386.3,48.3 380.8,50.1 377.2,42.8 369.9,41ZM402.6,40.1 413.5,42.8 426.3,41.9 439,44.6 439.9,51.9 433.5,55.5 419,55.5 409.9,54.6 404.5,48.3ZM366.3,4.6 375.4,1 382.6,8.3 384.5,15.5 379,17.4 368.1,10.1ZM386.3,6.5 393.5,4.6 397.2,15.5 400.8,19.2 393.5,21 388.1,13.7ZM399,-0.8 451.7,-0.8 453.5,10.1 446.3,17.4 442.6,24.6 444.5,33.7 437.2,36.5 422.6,34.6 411.7,33.7 409.9,28.3 417.2,24.6 419,17.4 409.9,11.9 400.8,6.5ZM344.5,8.3 353.5,4.6 355.4,9.2 348.1,11.9ZM344.5,15.5 351.7,13.7 353.5,19.2 348.1,22.8 343.5,19.2ZM445.5,353.2 447.9,350.7 457.7,345.9 465,348.3 474.7,347.1 484.4,348.3 496.6,350.7 506.3,355.6 513.6,360.5 520.9,367.8 530.7,375.1 540.4,379.9 550.1,386 559.9,392.1 566,398.2 567.2,405.5 562.3,414 557.4,423.7 555,433.5 550.1,443.2 542.8,449.3 533.1,455.4 525.8,462.7 520.9,470 516.1,477.3 513.6,484.6 511.2,485.4 502.3,487.7 504.6,494.3 497.9,499.9 490.1,502.1 484.6,507.7 483.4,514.3 477.9,518.8 473.4,525.4 477.9,534.3 473.4,543.2 470.1,549.9 471.2,556.6 473.4,563.2 480.1,566.6 473.4,568.8 466.8,567.7 460.1,563.2 454.6,556.6 452.3,547.7 454.6,536.6 456.8,525.4 457.9,514.3 460.1,503.2 462.3,492.1 464.6,481 463.8,477.3 466.2,467.5 467.4,457.8 466.2,448.1 460.1,440.8 452.8,431 445.5,421.3 440.6,411.6 435.8,401.8 434.6,392.1 437,382.4 438.2,372.6 441.9,362.9ZM598.3,130 603.1,126.3 610.4,127.5 617.7,125.1 625,128.8 627.5,134.8 622.6,140.9 615.3,144.6 608,143.4 601.9,139.7 598.3,134.8ZM410.8,86.5 411.7,70.1 417.2,64.6 422.6,63.7 421.7,73.7 423.5,64.6 433.5,63.7 442.6,64.6 449,70.1 448.1,75.5 459,82.8 468.1,91.9 475.4,102.8 480.8,113.7 487,120.2 490.4,124.8 488.1,129.4 484.7,135.2 480.1,138.6 481.2,145.6 477.8,146.7 481.2,152.5 480.1,155.9 475.5,154.8 469.7,151.3 463.9,146.7 460.5,140.9 455.9,138.6 448.9,139.8 444.3,138.6 445.5,135.2 451.2,131.7 454.7,129.4 458.2,124.8 460.5,119 458.2,111 453.6,101.7 446.6,97.1 439.7,98.3 432.8,98.3 425.9,97.1 419,93.7 413.8,90.2 411.5,86.8ZM420.7,131.7 423.6,129.4 428.2,131.7 432.8,138.6 436.8,142.7 435.1,145 430.5,143.2 425.9,146.7 422.4,147.3 420.1,140.9ZM427.6,149.2 431.7,149 432.6,151.9 428.8,152.7ZM446.6,114.4 451.2,113.5 452.6,117.9 448.9,120.4 446.6,118.5ZM642.1,273.3 655.5,272.1 667.7,269.7 679.8,268.5 692,266 696.9,269.7 698.1,279.4 704.2,284.3 713.9,286.7 721.2,291.6 728.5,290.4 738.2,285.5 748,286.7 757.7,287.9 765,285.5 764,287.7 768.2,274.3 770.7,267.7 765.7,268.5 759,267.7 752.3,269.3 745.7,267.7 744,261 745.7,256 744,254.3 737.3,253.5 732.3,254.3 729,257.7 730.7,262.7 729,267.7 724.8,266 722.3,259.3 719,254.3 714,249.3 709,242.7 704,239.3 700.7,242.7 704,247.7 710.7,254.3 715.7,260.2 711.5,259.3 714,263.5 712.3,267.7 710.7,265.2 705.7,261 699,256 694,249.3 690.7,244.3 685.7,246.8 680.7,248.5 674,250.2 668.2,252.7 664.8,257.7 660.7,264.3 654,269.3 647.3,271 641.5,267.7 639,264.3 640.7,254.3 639.8,245.2 647.3,243.5 657.3,244.3 667.3,246.8 662.3,239.3 661.5,231 657.3,224.3 654,221.8 660.4,217 667.7,213.4 673.8,209.7 678.6,204.8 684.7,200 692,197.5 689.6,187.8 694.4,185.4 692,180.5 688.4,179.3 683.5,174.4 681.1,161 685.9,151.3 694.4,141.6 701.7,131.8 707.8,122.1 716.3,109.9 726.1,100.2 735.8,94.1 745.5,92.9 754.1,95.3 757.7,100.2 765,102.6 774.7,107.5 782,114.8 780.8,122.1 774.7,125.8 767.4,124.5 762.6,119.7 765,129.4 769.9,136.7 777.2,134.3 782,127 789.3,124.5 793,114.8 799.1,112.4 803.9,119.7 811.2,117.2 818.5,111.2 828.3,107.5 835.6,105.1 838,100.2 845.3,97.8 852.6,100.2 859.9,92.9 862.3,78.3 867.2,73.4 872.1,85.6 873.3,102.6 872.1,117.2 876.9,119.7 878.2,107.5 881.8,92.9 886.7,80.7 891.5,71 899,64.3 905.7,54.3 919,47.7 939,39.3 955.7,32.7 975.7,31 989,37.7 985.7,51 975.7,61 985.7,66 999,67.7 1015.7,66 1025.7,64.3 1032.3,72.7 1035.7,87.7 1045.7,84.3 1055.7,79.3 1065.7,76 1079,79.3 1092.3,84.3 1105.7,89.3 1119,91 1132.3,97.7 1145.7,99.3 1152.3,97.7 1165.7,101 1179,107.7 1189,116 1199,122.7 1204,127.7 1199,134.3 1189,132.7 1182.3,127.7 1175.7,131 1174,141 1175.7,149.3 1165.7,154.3 1152.3,157.7 1150.4,166.9 1139.6,165.7 1135.3,166.9 1130.5,172.5 1130.2,179 1126.2,186.8 1126.8,193.4 1121.1,195.9 1117.1,203.1 1116.3,206.8 1111.7,212.3 1109.7,207.7 1108.3,198.3 1108.6,188.4 1112,180.6 1116,177.9 1120.5,173.6 1126.5,164.6 1130.5,159.9 1133.9,152.7 1130.2,152.1 1121.1,156.3 1112.6,156.9 1106.9,169.7 1098.4,172.5 1087,170.3 1072.8,170.8 1065.6,177.9 1057.1,185.8 1050.9,194.9 1057.1,198.3 1063.7,197.3 1067.6,201.7 1068.2,206.8 1065.6,212.3 1064.8,222 1057.1,231.7 1051.4,240.7 1044.9,246.5 1041.5,245 1037.5,248.1 1034.9,251.5 1028.7,259 1031.2,262.3 1034.4,268.8 1033.5,274.4 1028.7,276.1 1025.3,276.8 1025.5,271.6 1026.1,265.9 1021,264.5 1022.4,259 1019.8,256.8 1013.9,259.8 1010.7,260.9 1013,255.3 1010.2,254.2 1005.9,257.5 1001.6,260.1 1001.1,262.7 1004.5,267 1010.2,265.6 1014.4,268.1 1008.2,271.3 1005.1,275.1 1008.2,278.6 1009.6,285.3 1012.7,288.7 1012.5,293.6 1009.6,298.5 1006.5,304.9 1001.6,309.6 997.4,314.2 991.1,316.1 988.8,316.7 984,318.6 978.9,322.5 980.3,319.8 978.3,318.9 973.2,318.9 969.5,321 966.9,326.4 971.2,332.4 975.5,337.5 976.9,342.7 976.6,348.3 969.8,351.8 964.1,356.9 959,351.5 956.7,347.1 953.3,345.1 950.4,342.7 948.2,351.5 951,357.2 954.7,362.1 960.1,368.7 960.1,374.4 962.4,377.5 960.1,377.8 954.1,373.2 951.3,365.8 945.6,358.7 946.7,351.5 945,342.7 943.9,338.3 942.5,333.3 937.4,336 934.2,335.4 934.2,327.9 928.5,321.3 927.1,316.4 923.4,315.8 917.7,318.2 913.5,318.9 912.9,321 907.8,324.9 900.1,333.3 894.1,336.9 894.4,342.7 893.3,347.1 891.3,352 888.4,356.1 886.4,358.4 882.7,352.9 878.8,344.2 875.1,335.4 873.1,326.4 872.8,317.9 870.8,320.4 866,320.7 862.3,316.1 860,312.1 857.4,310.5 855.7,308 849.5,307.4 841.2,307.4 838,305 830.7,302.5 825.8,301.3 818.5,296.4 811.2,291.6 805.2,290.4 807.6,294 811.2,301.3 816.1,305 823.4,306.2 828.3,303.7 835.6,308.6 839.2,315.9 833.1,323.2 823.4,330.5 813.7,335.4 804.4,341 794.7,344.6 791.3,342.7 787.4,334.2 782.5,322 777.2,308.6 771.1,294 767,286.2 762.6,287.2 764.5,298.9 770.4,312.3 776,325.6 781.6,337.3 786.4,345.6 788.6,348.5 794.2,349.5 801.5,348 811.7,347.1 806.4,357.3 802.3,361 795,368.3 787.7,375.6 781.6,385.3 779.2,395.1 780.4,402.4 781.6,412.1 779.2,419.4 773.1,429.1 768.2,436.4 765.8,443.7 763.4,453.5 758.5,460.8 751.2,468.1 743.9,475.4 736.6,480.2 729.3,482.7 722,483.9 718.4,477.8 712.3,463.2 706.2,448.6 701.3,434 698.9,421.8 700.1,404.8 698.9,390.2 694,375.6 691.6,361 691.3,369 681.5,366.6 666.9,365.3 652.3,366.6 637.7,367.8 634.1,361.7 628,353.2 623.1,345.9 620.7,341 618.8,328.6 620.2,317.7 624.4,306.7 630.9,296.5 637.7,287.3 644.6,278.8 651.1,272.7ZM647,178.1 653.1,174.4 659.2,178.1 655.5,185.4 661.6,192.7 666.5,200 671.3,203.6 668.9,208.5 660.4,210.9 650.6,212.1 655.5,207.3 650.6,202.4 654.3,195.1 649.4,190.2 645.8,184.2ZM638.5,192.7 645.8,190.2 649.4,196.3 647,203.6 639.7,206.1 637.3,200ZM817.3,68.6 824.6,68.6 825.8,80.7 823.4,91.7 819.8,90.5 818.5,80.7ZM865.7,7.7 875.7,-2.3 870.7,-19 862.3,-29 857.3,-19 860.7,-5.7ZM698,1 709,1 712.7,10.7 709,25.3 702.9,20.5 699.3,10.7ZM1055.7,39.3 1065.7,37 1079,42.7 1077.3,51 1065.7,51.7 1057.3,47.7ZM1082.3,46 1094,47.7 1093,52.7 1084,51.7ZM1174,87 1180.7,85 1185.7,88.3 1180.7,91.7 1175,90.3ZM945.7,1 965.7,1 964,11 949,10.3ZM952.3,17.7 970.7,19.3 969,29.3 955.7,27.7ZM804.7,415.8 808.4,420.6 807.2,431.6 803.5,443.7 798.7,453.5 793.8,454.7 790.1,446.2 791.4,434 795,426.7 799.9,420.6ZM937.1,365.5 944.8,369.5 951.3,374.4 960.4,381.5 963.2,387.2 967.5,390.6 966.9,398 963.2,398 956.7,392.9 951.9,387.2 947,377.2 941.9,372.4ZM965.2,400.9 968.9,398.6 974.6,400.3 981.2,399.7 986.9,401.2 991.7,403.5 991.4,406.3 981.7,405.2 973.2,403.8 968.6,402.6ZM976,377.2 978.9,376.7 983.2,373.5 987.4,372.4 991.7,367.8 997.4,361.8 1000.2,363 1004.5,366.7 1001.1,371.5 1003.9,378.7 1000.2,381.5 997.4,387.2 996,392.9 991.7,392.9 987.4,390.9 983.2,390.6 979.5,385.8 976,381.5ZM1005.9,379.2 1009.6,377.8 1015.9,378.9 1021.6,376.9 1020.1,380.4 1011.6,380.4 1008.8,383.8 1013,384.1 1016.7,384.1 1012.5,387.2 1014.4,391.5 1015.3,395.2 1011.6,394.9 1010.2,390 1008.5,391.5 1008.5,397.2 1005.9,397.2 1004.5,391.5 1005.9,384.3ZM1038.6,383.8 1042.9,382.6 1047.2,383.8 1050,390.9 1057.1,386.1 1067.1,388.9 1077,392.6 1081.3,397.2 1086.4,398.6 1084.7,401.5 1091.2,408.6 1094.1,411.5 1087,410.7 1081.3,404.9 1075.6,403.5 1072.8,407.8 1067.1,407.5 1061.4,404.3 1058.5,405.5 1060,400.9 1055.7,395.7 1048.6,392.9 1044.3,392.9 1041.5,389.8 1046.6,388 1041.5,387.2ZM994.5,404.9 998.8,405.2 1004.5,405.5 1010.2,405.8 1015.9,405.2 1020.1,408.1 1025.8,405.5 1018.7,410.7 1010.2,407.2 1001.6,406.9 994.8,406.6ZM1088.4,397.2 1094.1,395.7 1098.4,393.5 1099.2,395.7 1094.1,399.2 1089.8,399.2ZM1028.7,376.4 1031.5,378.1 1030.1,383.8 1028.7,380.1ZM1024.4,390.6 1030.1,389.8 1037.2,390.6 1034.4,392.3 1027.2,391.7ZM1008.8,327.9 1013.6,328.2 1013.6,333.9 1011.6,338.3 1013,341.3 1018.7,341.9 1018.7,345.4 1014.4,342.4 1010.2,341.9 1009,339.8 1007.3,335.4ZM1013,361.5 1017.3,356.9 1023,353.5 1025.8,360.1 1024.4,363.5 1022.7,365.5 1018.7,362.1ZM1013,347.7 1016.4,348.6 1021.6,349.4 1023.5,345.7 1019.6,345.7 1022.1,352.9 1017.3,354.4 1014.4,351.5ZM999.4,357.5 1005.9,351.5 1005.9,349.1 1003.1,352.9 998.8,356.7ZM1007.6,314.2 1011.6,307.4 1012.7,309.6 1009.9,317.3ZM975.2,325.5 980.3,323.1 981.7,324.6 978.9,328.2 975.2,327.9ZM1035.2,281 1038.6,278.9 1041.5,282 1039.5,287.3 1036.3,288ZM1038.6,278.6 1042.9,274.1 1051.4,272.7 1055.1,267.4 1060,266.6 1063.7,260.9 1064.2,255.3 1068.2,251.9 1068.5,255.3 1069.9,259 1067.1,263.8 1066.5,271.6 1064.8,274.1 1060.8,276.1 1055.7,276.1 1052.3,280.3 1050,276.5 1044.3,277.5ZM1042.3,280.3 1047.7,277.5 1049.1,279.2 1044.3,282.6ZM1064.2,251.5 1065.1,245 1069.1,236.2 1072.8,240.7 1079.3,241.1 1079.9,245 1074.2,249.6 1068.5,247.7 1065.6,249.2ZM1069.9,233.8 1070.8,221.2 1069.9,210 1072.2,196.8 1073.6,205.4 1073.6,216.8 1077.6,221.2 1073.3,231.7ZM893,358.7 894.4,353.8 897.3,357.2 898.7,361.5 897,363.8 894.1,364.4ZM989.7,445.7 990.8,458.1 988.8,458.8 993.1,471 995.1,477.7 993.1,485.5 1001.4,488.2 1007.3,484.1 1017.3,484.1 1024.4,478.7 1032.9,476.3 1040,476 1047.2,480.4 1051.4,487.2 1057.1,481 1058,490 1062.8,491 1065.6,498.5 1074.2,501.4 1082.1,502.5 1086.4,498.1 1092.7,496 1095.5,484.4 1100.6,476 1102.9,466.1 1101.2,456.6 1095.5,450.3 1091.2,446.6 1087.8,439.6 1082.1,436.6 1079.9,424.7 1075,422.6 1071.3,412.1 1069.1,418.8 1068.5,427.6 1066.5,432.4 1062.2,432.1 1058,427.6 1051.4,424.7 1054.8,416.5 1050,416.5 1042.9,413.6 1038.6,416.8 1034.9,424.4 1030.1,424.1 1026.7,421.4 1020.1,428.5 1013.9,431.2 1013,435.7 1005.9,439.9 997.9,441.7 991.7,445.1ZM1077.6,508.4 1082.7,509.9 1087.8,509.2 1087.8,514.1 1085.6,518 1081.9,519.6 1079,514.5ZM1157.2,486.2 1162.4,492.4 1166.1,494.2 1170,497.1 1173.7,497.4 1171.7,502.9 1169.2,504 1166.6,510.3 1163.5,511.1 1163.2,505.8 1160.4,502.9 1162.9,498.5 1161.8,493.2ZM1157.2,507.7 1161.8,512.2 1158.1,517.2 1157.5,520.8 1153.3,522.3 1151.8,528.8 1146.7,531.7 1142.4,530 1139.6,528 1144.7,521.1 1151,516.8 1155.2,509.6ZM1132.5,439.9 1139.6,444.1 1141,446.6 1136.8,444.4ZM1170.3,431.8 1174,432.4 1173.4,434.2 1170.3,433.9ZM491.6,552 498.2,552 501.6,553.4 496.8,556.6 492.5,555.3ZM444.1,327.9 449,328.8 445.6,330ZM474.9,327.9 479.4,328.2 478.3,329.7 474.9,329.4ZM639,245 641,244.6 639.5,246.2ZM493.4,615.4 502.3,612.6 507.9,613.9 504.6,619.9 499,623.2 492.3,623.2Z" fill="#606743" stroke="#606743" stroke-width=".6"/>
<g clip-path="url(#lc)"><g filter="url(#b8)">
<ellipse cx="674.5" cy="306.7" rx="62.6" ry="31.6" fill="#938a68" opacity="1"/>
<ellipse cx="737.1" cy="310.1" rx="39.8" ry="28.2" fill="#968c68" opacity="1"/>
<ellipse cx="640.4" cy="307.0" rx="25.6" ry="28.4" fill="#8f8766" opacity="1"/>
<ellipse cx="657.5" cy="281.8" rx="22.7" ry="10.2" fill="#8a8462" opacity="0.9"/>
<ellipse cx="717.2" cy="335.2" rx="68.3" ry="11.9" fill="#858060" opacity="0.9"/>
<ellipse cx="637.6" cy="335.3" rx="22.7" ry="8.9" fill="#858060" opacity="0.9"/>
<ellipse cx="796.8" cy="313.3" rx="28.5" ry="28.0" fill="#a39470" opacity="1"/>
<ellipse cx="822.4" cy="284.7" rx="25.6" ry="20.2" fill="#928868" opacity="0.9"/>
<ellipse cx="842.4" cy="256.2" rx="34.1" ry="22.4" fill="#8f876a" opacity="0.8"/>
<ellipse cx="907.8" cy="263.3" rx="45.5" ry="25.4" fill="#8d8466" opacity="0.8"/>
<ellipse cx="950.4" cy="248.9" rx="28.5" ry="19.2" fill="#8b8365" opacity="0.7"/>
<ellipse cx="347.4" cy="266.6" rx="22.8" ry="28.6" fill="#8f8763" opacity="0.95"/>
<ellipse cx="367.3" cy="298.0" rx="17.1" ry="19.3" fill="#8d8460" opacity="0.9"/>
<ellipse cx="353.1" cy="237.3" rx="19.9" ry="16.1" fill="#80805a" opacity="0.7"/>
<ellipse cx="1044.3" cy="455.6" rx="37.0" ry="22.0" fill="#91795a" opacity="0.9"/>
<ellipse cx="1013.0" cy="452.3" rx="17.1" ry="18.7" fill="#947c5c" opacity="0.8"/>
<ellipse cx="722.9" cy="452.5" rx="19.9" ry="21.8" fill="#8c8058" opacity="0.85"/>
<ellipse cx="469.7" cy="523.3" rx="8.6" ry="31.9" fill="#8b8262" opacity="0.9"/>
<ellipse cx="466.9" cy="446.6" rx="5.7" ry="27.8" fill="#9a8b6a" opacity="0.9"/>
<ellipse cx="552.2" cy="407.3" rx="11.4" ry="14.4" fill="#7a7a50" opacity="0.7"/>
<ellipse cx="489.6" cy="393.0" rx="37.0" ry="22.9" fill="#3f5330" opacity="1"/>
<ellipse cx="509.6" cy="416.2" rx="28.4" ry="23.4" fill="#4c5f38" opacity="0.8"/>
<ellipse cx="728.6" cy="381.5" rx="25.6" ry="17.1" fill="#3f5430" opacity="1"/>
<ellipse cx="424.2" cy="270.5" rx="22.8" ry="24.7" fill="#566a40" opacity="0.8"/>
<ellipse cx="452.7" cy="228.6" rx="34.1" ry="21.0" fill="#52633c" opacity="0.7"/>
<ellipse cx="381.6" cy="186.7" rx="62.5" ry="25.6" fill="#55623f" opacity="0.7"/>
<ellipse cx="950.4" cy="322.4" rx="22.8" ry="30.4" fill="#46592f" opacity="0.9"/>
<ellipse cx="978.9" cy="381.5" rx="34.1" ry="17.1" fill="#3f5530" opacity="0.9"/>
<ellipse cx="893.6" cy="322.8" rx="17.0" ry="24.3" fill="#5a6840" opacity="0.6"/>
<ellipse cx="836.7" cy="163.7" rx="113.7" ry="34.6" fill="#4f5c3b" opacity="0.7"/>
<ellipse cx="1007.3" cy="174.2" rx="71.1" ry="38.2" fill="#4d5a3a" opacity="0.7"/>
<ellipse cx="737.1" cy="151.5" rx="22.8" ry="36.9" fill="#5b6a45" opacity="0.7"/>
<ellipse cx="694.4" cy="224.4" rx="34.2" ry="21.4" fill="#5a6b42" opacity="0.7"/>
<ellipse cx="381.6" cy="119.6" rx="85.3" ry="29.4" fill="#74775a" opacity="0.8"/>
<ellipse cx="395.8" cy="49.4" rx="79.6" ry="49.3" fill="#7c765a" opacity="0.95"/>
<ellipse cx="452.7" cy="126.9" rx="22.7" ry="28.2" fill="#77735a" opacity="0.8"/>
<ellipse cx="225.1" cy="126.9" rx="28.5" ry="28.2" fill="#70744f" opacity="0.8"/>
<ellipse cx="950.4" cy="88.2" rx="113.8" ry="26.4" fill="#6d7055" opacity="0.8"/>
<ellipse cx="1149.6" cy="120.7" rx="34.1" ry="21.9" fill="#6e7257" opacity="0.8"/>
<ellipse cx="461.2" cy="176.1" rx="17.1" ry="27.0" fill="#6b6f52" opacity="0.8"/>
</g><g filter="url(#b2)">
<ellipse cx="478.3" cy="121.9" rx="3.4" ry="4.4" fill="#f4f4f4"/>
<ellipse cx="614.8" cy="140.0" rx="2.8" ry="2.0" fill="#f4f4f4"/>
<ellipse cx="720.0" cy="13.4" rx="12.8" ry="17.9" fill="#f4f4f4"/>
<ellipse cx="831.0" cy="52.3" rx="7.1" ry="17.4" fill="#f4f4f4"/>
<ellipse cx="941.9" cy="-7.7" rx="8.5" ry="7.8" fill="#f4f4f4"/>
<ellipse cx="264.9" cy="165.2" rx="7.1" ry="2.2" fill="#f4f4f4"/>
<ellipse cx="282.0" cy="174.1" rx="3.4" ry="2.7" fill="#f4f4f4"/>
<ellipse cx="457.5" cy="542.0" rx="1.4" ry="8.7" fill="#f4f4f4"/>
<path d="M419,-0.8 451.7,-0.8 452.6,10.1 446.3,17.4 442.6,24.6 443.5,32.8 438.1,35.5 429.9,28.3 433.5,19.2 426.3,11.9 420.8,6.5Z M402.6,-0.8 415.4,-0.8 417.2,6.5 408.1,8.3Z M423.5,43.7 439,45 439.5,51.9 433.5,55.2 425.4,53.7Z M389,8.3 394.5,8.3 396.3,15.5 392.6,17.4Z M436.3,64.6 448.1,69.2 447.2,74.6 440.8,72.8Z M493.4,615.4 502.3,612.6 507.9,613.9 504.6,619.9 499,623.2 492.3,623.2Z" fill="#f2f2f2" opacity=".92"/>
<path d="M451.7,78.3 462.6,87.4 471.7,98.3 479,110.1 487.2,121" fill="none" stroke="#f2f2f2" stroke-width="3.5" stroke-dasharray="5 3 2 2" opacity=".9"/>
</g><rect x="-10" y="-10" width="1400" height="640" filter="url(#nz)" opacity=".42"/>
</g>
<path d="M693,176.1 698.1,177.4 702.6,183.8 705.8,190.2 709,195.3 705.8,197.2 702,194 698.8,188.9 695.6,185.7 692.8,182.5ZM747.3,251 749,244.3 751.5,236.8 755.7,232.7 762.3,231.8 767.3,234.3 770.7,236.8 774,233.5 779,232.7 779.8,236.8 784,242.7 783.2,249.3 775.7,251.8 767.3,250.2 759,251 752.3,252.7ZM801.5,231.8 807.3,229.3 815.7,230.2 817.3,234.3 812.3,239.3 814,246 818.2,251 819,259.3 817.3,266.8 812.3,267.7 808.2,262.7 807.3,254.3 804,246 802.3,237.7ZM729.7,131.8 735.8,133.1 737,139.1 732.2,146.4 728.5,155 729.7,162.3 734.6,164.7 745.5,164.7 745.5,167.1 735.8,168.3 730.9,170.8 729.7,178.1 726.1,185.4 721.2,190.2 713.9,192.7 707.8,191.5 705.4,187.8 711.5,184.2 716.3,178.1 720,168.3 716.3,161 717.6,151.3 722.4,141.6Z" fill="#0e2752"/>
<path d="M406.3,228.3 412.3,225.3 421.7,226.7 427.7,230.3 424,232.3 416.3,229.7 409.7,231.7Z M425.7,233.3 428.3,234 429,245.3 426.7,246 425.7,239.3Z M432,232.3 437.7,231.7 442.3,236.3 440.3,241 436.3,238.3 433,235.7Z M438.3,245.3 445.7,241.7 447.7,243.7 440.7,247.7Z M447.7,238.3 454.3,237 455,239.7 448.3,241Z M312.3,126 319,122.7 326.3,127 324,132.7 317.3,131.7 313,130.3Z M335.7,153.7 343,151.7 353,155 350.7,158.3 342.3,156.3 337,157Z M381.7,197.7 385.7,198.3 387.7,214.3 384.3,215 382.3,206Z M360.7,174.3 365.7,171.7 367.7,175 363,177.7Z" fill="#131f30" opacity=".75"/>
<path d="M462,-1.4 459.6,10.7 464.4,20.5 469.3,32.6 479,38.7 491.2,39.9 498.5,44.8 503.4,54.5 508.2,66.7 510.7,78.9 511.9,93.5 513.1,108.1 515.5,122.7 519.2,137.3 524.1,149.4 530.1,159.2 537.4,164 542.3,162.8 544.7,156.7 547.2,147 552,137.3 559.3,127.5 569.1,120.2 578.8,112.9 591,105.6 600.7,98.3 604.4,91 603.1,81.3 598.3,74 603.1,64.3 608,54.5 612.9,44.8 614.1,30.2 610.4,15.6 608,-1.4Z" fill="none" stroke="#1a4680" stroke-width="7" stroke-linejoin="round" opacity=".42" filter="url(#b5)"/>
<clipPath id="gc"><path d="M462,-1.4 459.6,10.7 464.4,20.5 469.3,32.6 479,38.7 491.2,39.9 498.5,44.8 503.4,54.5 508.2,66.7 510.7,78.9 511.9,93.5 513.1,108.1 515.5,122.7 519.2,137.3 524.1,149.4 530.1,159.2 537.4,164 542.3,162.8 544.7,156.7 547.2,147 552,137.3 559.3,127.5 569.1,120.2 578.8,112.9 591,105.6 600.7,98.3 604.4,91 603.1,81.3 598.3,74 603.1,64.3 608,54.5 612.9,44.8 614.1,30.2 610.4,15.6 608,-1.4Z"/></clipPath>
<path d="M462,-1.4 459.6,10.7 464.4,20.5 469.3,32.6 479,38.7 491.2,39.9 498.5,44.8 503.4,54.5 508.2,66.7 510.7,78.9 511.9,93.5 513.1,108.1 515.5,122.7 519.2,137.3 524.1,149.4 530.1,159.2 537.4,164 542.3,162.8 544.7,156.7 547.2,147 552,137.3 559.3,127.5 569.1,120.2 578.8,112.9 591,105.6 600.7,98.3 604.4,91 603.1,81.3 598.3,74 603.1,64.3 608,54.5 612.9,44.8 614.1,30.2 610.4,15.6 608,-1.4Z" fill="#f3f3f3"/>
<g clip-path="url(#gc)">
<path d="M499.7,44.8 505.8,61.8 509.9,78.9 511.4,98.3 513.1,115.4 516.8,132.4 522.4,149.4 530.1,160.4" fill="none" stroke="#6a6a50" stroke-width="7" filter="url(#b2)"/>
<path d="M611.7,49.7 603.1,61.8 598.8,71.6 603.1,81.3 605.6,91 601.9,99.6 593.4,103.2 586.6,98.8 583.2,88.6 583.7,74 587.3,64.8 595.8,57.5Z" fill="#5e5b48" filter="url(#b2)"/>
<path d="M591,66.7 595.8,74 589.8,81.3 595.8,88.6 591,97.1" fill="none" stroke="#e8e8e8" stroke-width="2" filter="url(#b2)"/>
<path d="M459.6,9.5 469.3,31.4 481.5,37.5 493.6,39.4" fill="none" stroke="#77745c" stroke-width="5" filter="url(#b2)"/>
</g>
</g>
<g id="bord" clip-path="url(#lc)"><path d="M264.9,102 264.9,165.2 270.6,166.9 274.9,172.5 280.6,168.6 287.7,183.2 296.2,190.9M316.1,221.2 395.8,221.2 396.9,222.5 411.4,225.5 414.6,224.2 424.8,230.5 428.5,233.8 431.3,236.7 431.6,245.8 429.6,248.9 430.8,250.8 441.3,246.5 441.3,244.6 448.4,242.2 452.7,237.9 462.6,237.9 464.6,236.2 466.9,231.7 469.2,228 472.6,228.4 473.1,234.6 475.4,238.3M332.9,283.7 339.5,283.3 350.3,287.7 358.2,287.7 358.2,286 363.1,286 368.8,293.3 373,295.2 374.4,292.6 378.7,293.3 383,300.1 389.5,305.2M403.7,339.8 405.7,335.4 408.6,335.4 407.2,330 412.3,330 412.3,335.7 414.8,336.3M412,340.1 416.5,344.2 419.4,341.9 424.8,338.9 429.3,338.3M422.2,349.7 427.9,350.3M430.2,358.4 431,354.1M462.6,347.1 459.8,355.8 461.2,361.5 474,363.8 475.4,375.8 475.4,378.1M475.4,378.1 466.9,380.1 468.3,384.3 466.9,393.5 458.4,395.7 458.4,402.3 465.5,408.6 465.5,413 469.7,413 480.3,409.5 480.3,415.9 495.3,421.1 494.8,428.5 500.2,428.5 502.4,433.6 501,439.6 507.6,446.6 510.7,456.6 513.3,461.3 502.2,471.7 514.1,483.4M475.4,378.1 484,377.2 484,370.1 493.3,366.7 495.3,375.8 503.9,375.8 512.4,375.2 519.2,370.1M493.3,366.7 491.6,364.4 495.3,357.2M503.9,375.8 503,364.4M512.4,375.2 512.4,365M437.6,391.2 441.3,395.7 442.7,391.5 451.2,381.8 452.1,381.5 447,379.2 441.3,377.2M452.1,381.5 458.4,388 466.9,393.5M469.7,413 469.7,424.7 468.3,432.1 465.8,434.5M468.3,432.1 471.2,438.1 472,444.1 475.4,448.1M475.4,448.1 481.1,445.7 487.9,446.3 490.5,438.4 500.5,439 501,439.6M487.9,446.3 502.2,455.9 499.3,461.9 506.7,462.3 510.7,456.6M475.4,448.1 471.2,455 467.5,471 466.9,482.7 465.5,491.4 463.5,502.1 461.8,517.2 462.6,529.2 459.8,541.8 461.2,553 471.2,556.6 470.9,569.1M502.2,471.7 500.5,482.7M661.7,275.1 661.7,284.7 656,288.7 650.4,293 641.3,296.2 641.3,300.7M641.3,299.4 629,299.4M641.3,300.7 641.3,304.9 631.9,304.9 631.9,313 629,314.2 629,319.5 617.6,319.5M641.3,300.7 652.3,308 669.4,320.1 669.4,321.3 674.5,324.3 677.9,326.1 677.9,333 676,337.2 666.6,338.6 660.3,340.7 654.6,343.6 650.4,351.8M652.3,308 647.5,308 650.4,336.9 633.3,336.9 631.3,339.2M677.9,326.1 682.5,325.2 700.1,312.7 694.4,309.6 693,304.2 694.4,301.7 693.9,295.2 693,291.3 689.6,283.7 687.6,280.3 689.6,275.1 690.5,268.4M693,291.3 695.3,286 698.7,281.6M700.1,312.7 706.4,315.5 708.7,314.2 734.3,324.9 734.3,323.4 737.1,323.4 737.1,317.3 737.1,295.2 737.7,286.7M737.1,317.3 771,317.3M708.7,314.2 710.1,320.4 710.1,332.4 704.7,342.2 706.1,345.7 703.8,352.9 698.7,362.7 690.5,367.8M734.3,324.9 734.3,336.3 730,341.3 731.1,350 733.1,355.8 734.3,356.7 742.8,354.1 751.3,352.9 759.9,352.9 762.7,354.4 759.9,358.7M676.2,348 677.7,342.7 685.9,344.2 694.4,343.3 704.7,342.2M658,367 658.3,354.4 657.8,350M670.6,363.8 668.3,350M673.7,363.3 676.2,348M641.8,360.1 644.7,351.5 650.4,351.8M633.3,361.5 640.4,360.4 641.8,352.9 633.6,346 627,345.4 623.3,350M631.3,339.2 633.6,346M618.5,346 627,345.4M759.9,358.7 762.7,351.5 765.6,347.1 769.5,339.8 773.8,338.6 779.8,339.8 786.6,345.7 784.9,350 787.7,350.3 791.2,355.8 799.7,358.7 802.5,358.7 794,367.3 785.5,369.5 779.8,369.5 774.1,371.3 768.7,369 765.6,366.1 759.9,358.7M769.5,339.8 771,332.4 775.5,329.4M782.6,386.3 782.6,373 785.5,369.5M762.7,384.3 773.2,390.3 777.5,394.9M768.7,369 762.7,369.5 765.6,376.7 762.7,381.5 762.7,384.3 752.8,384.3M762.7,369.5 753.6,371.5M700.7,398.3 703,398 712.1,398.3 714.4,404.3 728.6,413 734.3,413 734.3,417.3 742.8,415.9 748.5,420 746.8,414.4 753.3,404.9 749.3,394 750.2,385.5 754.2,375.2 753.6,371.5 743.9,367.3 729.7,369.8 718.9,371.5 716.6,382.9 712.1,387.2 712.1,398.3M718.9,371.5 711.5,375.8 703.8,375.2 698.1,375.2 693.9,375M707.2,395.2 697.9,392.6M703.8,375.2 707,387.2 707.2,395.2M708.7,360.1 718.9,371.5M708.7,360.1 711.5,352.9M731.1,350 720,355.8 709.8,360.1M699.3,431.5 705.8,431.8 718.3,431.8 732.6,432.4M728.6,413 728.6,418.8 734.3,418.8 728.6,427.6 732.6,432.4 738,433 742.8,433.6 748.5,427 752.5,426.4M722.9,445.7 722.9,465.8 712.9,466.5M722.9,445.7 725.7,445.7 725.7,434.5 732.6,432.4M722.9,454.4 731.4,455.9 738.8,456.9 742.8,450.6 749.6,446.3 755,446.9 757,451.9 757,460.7M738,433 744.8,441.1 749.6,446.3M752.5,426.4 759.9,421.7 759,408.6 753.3,404.9M765.3,414.7 780.9,411.5M759.6,408.6 765.3,414.7 764.1,423.2 767.8,429.1M752.5,426.4 759.6,430 759,439.6 755,446.9M749.3,394 753.6,388.3 762.4,384.3M646.1,249.6 647.5,251.5 646.1,258.6 645,263.8 645,267.4M660.9,244.2 675.1,248.1M673.1,211.9 683.1,219 689.3,221.2 687.6,227.2 683.1,233 685.9,234.2 684.8,237.9 687.3,242.6M683.1,208.7 685.9,201.7M673.1,211.9 677.9,210.5 683.1,208.7 683.1,219M706.7,198.8 707.8,207.7 708.7,212.3 700.7,215.5 705.3,222.5 703,227.6 693.3,227.6 687.6,227.2M690.5,193.9 694.2,194.4M721.5,196.3 730.9,196.3 732.8,198.8 734,205.4 734.3,213.2 730.3,220.7 720,219 708.7,212.3M685.9,234.2 695.9,230.1 705,231.7 705,235.4M705,231.7 712.9,230.5 714.4,225.5 705.3,222.5M714.4,225.5 720,219M712.9,230.5 719.5,234.2 728.6,233.4 729.1,223.8M705,235.4 709.5,235.8 720,237.9 721.2,245.8 721.2,250M720,237.9 730,239.5 730.6,246.2 731.1,252.3 725.2,253.4 721.2,250M725.2,253.4 722.9,258.3M731.1,252.3 741.1,250.8 745.6,249.6M730,239.5 730.6,242.6 742.8,241.5 747.4,243M741.1,250.8 740,254.6M697.9,171.9 701.6,161.1 700.7,145.8 707.2,129.1 712.9,114.6 722.9,106.8 724.6,106 733.4,115.3 734.8,130.5M724.6,106 739.1,106.8 740,98.7 745.6,98.7 748.5,106 753.6,100.3M748.5,106 747.1,110.7 751.3,116.8 748.5,122.7 751.6,131.2 750.8,137.3 755.6,149.6 745.1,164M745.9,170.3 743.9,180.6 746.2,187.9 753.9,190.4 759,200.7 755.6,207.3 763.8,208.7 767.3,215 779.8,218.6 778.9,225.9 774.7,229.3M733.1,210 755.6,207.3M730.3,220.7 729.1,223.8 736.8,226.7 741.7,224.2 746.2,235.8 750.5,237.1M725.7,191.9 730.9,196.3M725.7,187.9 737.1,186.8 746.2,187.9M735.1,178.5 743.9,180.6M732.8,198.8 741.7,189.9 746.2,187.9M784,251.5 789.7,253.1 793.4,258.3 791.7,264.5 793.4,267.4 786.6,267.7 770.4,268.8 768.4,271.6M779.8,243.8 791.2,247.3 798,250 804.2,250.4M793.4,258.3 802.5,259 805.1,263M793.4,267.4 796.8,275.1 795.4,278.6 801.7,288.7 804,292M786.6,267.7 782.6,277.2 776.4,280.6 768.4,283.3 767.3,281.3M765.3,293.9 771.2,294.3 776.9,285 776.4,280.6M776.9,285 785.5,288.7 793.1,294.6 798.3,294.9 801.7,296.9 803.7,296.9M763.6,288 765.3,293.9M787.7,334.2 798.3,331.8 813.9,326.4 822.4,323.4 824.2,317.3 823,315.2 815.6,314.6 812.8,310.5M813.9,326.4 816.8,333.6M823,315.2 825.3,308.3M819.3,267 828.1,263.8 840.1,269.5 838.4,278.6 839.5,287 841.8,292.6 845.2,301.1 841.2,307.4M840.1,273 849.5,270.6 855.2,266.6 868,263 879,267.4 869.4,271.6 868,278.6 863.1,285.7 854.6,292.3 843.8,293.9 839.2,292.6M805.7,232.2 798.3,223.8 799.7,216.3 812.5,210 822.4,212.8 833,212.3 840.9,213.2 839.5,198.8 859.4,193.4 868,197.3 883.6,197.3 893.6,213.2 908.6,218.6 914.3,220.3M914.3,220.3 927.7,213.7 944.8,216.8 945.6,207.7 957,214.6 970.4,217.7 987.4,217.7 997.9,217.7 1007,216.8 1007.3,204 1017.3,200.7 1028.7,216.8 1037.8,221.6 1050,223.8 1045.7,237.9 1038.6,245.8 1037.5,248.1M914.3,220.3 924.6,231.7 924.8,237.5 937.4,240.7 940.2,246.9 964.4,250.8 980,246.9 984.6,237.9 994.5,236.2 1006.5,231.3 997.9,217.7M816.8,249.6 825.3,252.3 825.3,237.9 832.7,235.4 839.5,240.7 853.7,253.4 862.3,251.9 868,248.9 875.1,245.8 894.1,248.9 894.1,237.9 900.7,237.1 909.2,229.7 914.3,220.3M855.2,266.6 858.9,260.9 866.5,256.4 875.4,259 879,267.4M825.3,252.3 840.9,252.7 855.2,266.6M819.3,267 821.9,253.4M875.4,259 894.1,248.9M879,267.4 887.9,273.4 890.7,283.7 896.4,291.3 916.3,298.8 919.2,300.7 927.7,299.1 941.9,297.5 946.2,299.8 943.6,311.1 953.3,318.9 956.1,316.1 967.5,314.6 973.2,318.9M896.4,291.3 893.8,295.9 904.9,300.1 916.6,303.6 916.3,298.8M919.2,300.7 919.2,302.6 927.7,302.3 927.7,299.1M860,312.1 868,309.6 863.7,301.7 870.8,296.9 876.2,292 877.9,283.7 876.5,276.8 885,275.1M916.6,303.6 918.6,310.2 919.2,317.3 928.5,321.3M921.4,304.9 928.8,308 928.3,312.4 925.4,312.7 928.5,321.3M941.9,297.5 936.2,304.9 933.4,311.5 931.1,316.7 928.5,321.3M943.6,311.1 950.4,322.2 944.8,332.4 947.6,348.6 945.3,352.9M950.4,322.2 953.3,318.9M950.4,322.2 956.1,330 964.1,333.9 966.4,340.1 957.6,340.7 958.7,348M956.1,316.1 963.2,322.2 972.1,338.9 966.4,340.1M972.1,338.9 966.9,348.3 963,351.8M1037.5,248.1 1030.1,249.6 1024.4,253.8 1019.8,256.8M1026.4,265.2 1030.9,262.3M950.7,363 953.9,365.3 956.4,363.8M977.8,375.8 981.7,378.7 988.8,377.2 993.1,373 996,369.3 1000.5,369.5M1067.1,388.9 1067.1,407.5" fill="none" stroke="#ebe6c8" stroke-opacity=".7" stroke-width="1.25" stroke-linejoin="round"/></g>
</defs>
<rect width="1378" height="620" fill="url(#og)"/>
<use href="#world"/>
<use href="#world" x="1024"/>
<use href="#world" x="-1024"/>
<path d="M443.2,700 443.2,836.9 451.7,836.7 460.3,836 468.8,834.9 477.3,833.3 485.9,831.3 494.4,828.8 502.9,825.8 511.5,822.3 520,818.2 528.5,813.6 537.1,808.5 545.6,802.7 554.1,796.2 562.7,789 571.2,781 579.7,772.1 588.3,762.3 596.8,751.4 605.3,739.3 613.9,725.7 622.4,710.5 630.9,693.2 639.5,673.6 648,651 656.5,624.5 665.1,592.9 673.6,554.7 682.1,507.4 690.7,449 699.2,381.5 707.7,314 716.3,255.6 724.8,208.3 733.3,170.1 741.9,138.5 750.4,112 758.9,89.4 767.5,69.8 776,52.5 784.5,37.3 793.1,23.7 801.6,11.6 810.1,0.7 818.7,-9.1 827.2,-18 835.7,-26 844.3,-33.2 852.8,-39.7 861.3,-45.5 869.9,-50.6 878.4,-55.2 886.9,-59.3 895.5,-62.8 904,-65.8 912.5,-68.3 921.1,-70.3 929.6,-71.9 938.1,-73 946.7,-73.7 955.2,-73.9 963.7,-73.7 972.3,-73 980.8,-71.9 989.3,-70.3 997.9,-68.3 1006.4,-65.8 1014.9,-62.8 1023.5,-59.3 1032,-55.2 1040.5,-50.6 1049.1,-45.5 1057.6,-39.7 1066.1,-33.2 1074.7,-26 1083.2,-18 1091.7,-9.1 1100.3,0.7 1108.8,11.6 1117.3,23.7 1125.9,37.3 1134.4,52.5 1142.9,69.8 1151.5,89.4 1160,112 1168.5,138.5 1177.1,170.1 1185.6,208.3 1194.1,255.6 1202.7,314 1211.2,381.5 1219.7,449 1228.3,507.4 1236.8,554.7 1245.3,592.9 1253.9,624.5 1262.4,651 1270.9,673.6 1279.5,693.2 1288,710.5 1296.5,725.7 1305.1,739.3 1313.6,751.4 1322.1,762.3 1330.7,772.1 1339.2,781 1347.7,789 1356.3,796.2 1364.8,802.7 1373.3,808.5 1381.9,813.6 1390.4,818.2 1398.9,822.3 1407.5,825.8 1416,828.8 1424.5,831.3 1433.1,833.3 1441.6,834.9 1450.1,836 1458.7,836.7 1467.2,836.9 1467.2,700Z" fill="#000" fill-opacity=".5"/>
<path d="M-580.8,700 -580.8,836.9 -572.3,836.7 -563.7,836 -555.2,834.9 -546.7,833.3 -538.1,831.3 -529.6,828.8 -521.1,825.8 -512.5,822.3 -504,818.2 -495.5,813.6 -486.9,808.5 -478.4,802.7 -469.9,796.2 -461.3,789 -452.8,781 -444.3,772.1 -435.7,762.3 -427.2,751.4 -418.7,739.3 -410.1,725.7 -401.6,710.5 -393.1,693.2 -384.5,673.6 -376,651 -367.5,624.5 -358.9,592.9 -350.4,554.7 -341.9,507.4 -333.3,449 -324.8,381.5 -316.3,314 -307.7,255.6 -299.2,208.3 -290.7,170.1 -282.1,138.5 -273.6,112 -265.1,89.4 -256.5,69.8 -248,52.5 -239.5,37.3 -230.9,23.7 -222.4,11.6 -213.9,0.7 -205.3,-9.1 -196.8,-18 -188.3,-26 -179.7,-33.2 -171.2,-39.7 -162.7,-45.5 -154.1,-50.6 -145.6,-55.2 -137.1,-59.3 -128.5,-62.8 -120,-65.8 -111.5,-68.3 -102.9,-70.3 -94.4,-71.9 -85.9,-73 -77.3,-73.7 -68.8,-73.9 -60.3,-73.7 -51.7,-73 -43.2,-71.9 -34.7,-70.3 -26.1,-68.3 -17.6,-65.8 -9.1,-62.8 -0.5,-59.3 8,-55.2 16.5,-50.6 25.1,-45.5 33.6,-39.7 42.1,-33.2 50.7,-26 59.2,-18 67.7,-9.1 76.3,0.7 84.8,11.6 93.3,23.7 101.9,37.3 110.4,52.5 118.9,69.8 127.5,89.4 136,112 144.5,138.5 153.1,170.1 161.6,208.3 170.1,255.6 178.7,314 187.2,381.5 195.7,449 204.3,507.4 212.8,554.7 221.3,592.9 229.9,624.5 238.4,651 246.9,673.6 255.5,693.2 264,710.5 272.5,725.7 281.1,739.3 289.6,751.4 298.1,762.3 306.7,772.1 315.2,781 323.7,789 332.3,796.2 340.8,802.7 349.3,808.5 357.9,813.6 366.4,818.2 374.9,822.3 383.5,825.8 392,828.8 400.5,831.3 409.1,833.3 417.6,834.9 426.1,836 434.7,836.7 443.2,836.9 443.2,700Z" fill="#000" fill-opacity=".5"/>
<use href="#bord"/><use href="#bord" x="1024"/><use href="#bord" x="-1024"/>
<svg x="154" y="0" width="1024" height="620" viewBox="154 0 1024 620"><g fill="none" stroke-linejoin="round" stroke-width="1">
<path d="M374.3,325.3 374.3,373.9 359.7,398.2 340.3,437.1 335.4,451.7 347.6,461.4 350,485.7 347.6,505.2 340.3,534.3 330.6,553.8 320.8,568.4 291.7,565.9 274.7,561.1 252.8,578.1 223.6,602.4 213.9,614.5 194.4,612.1 184.7,619.4M374.3,376.3 403.5,373.9 427.8,361.8 437.5,352M350,488.2 388.9,493 418.1,505.2 437.5,522.2 449.7,527M532.8,336 549.3,349.6 578.5,369.1 593.1,381.2 627.1,383.6 634.4,398.2 631.9,427.4 627.1,446.8 619.8,476 617.4,505.2 624.7,529.5 646.5,539.2 661.1,565.9 680.6,563.5 700,556.2M466.7,565.9 491,563.5 529.9,556.2M583.3,597.5 549.3,600 525,595.1 505.6,600M583.3,597.5 612.5,592.7 631.9,582.9 656.3,565.9 680.6,563.5M497.7,326.1 512.3,330.5 533,335.4M418.1,335 437.5,330.2 456.9,325.3M592.7,151 579.3,163.2 567.2,182.6 564.7,202.1 579.3,207 587.9,224 583,255.6 567.2,270.2 552.6,282.4 538,297 533.1,316.5 533.1,335.9M583,258.1 596.4,267.8 613.4,265.4 628,265.4 637.7,270.2 649.9,272.7M594.6,152.4 600.7,144.6 612.9,117.8 622.6,98.3 632.3,83.7 644.5,88.6 656.7,83.7 676.1,74 692,61.8 688.3,37.5 687.1,10.7 678.6,1M836.4,361 855.8,373.2 860.7,397.5 853.4,417 858.3,434 868,455.9 880.2,470.5 889.9,490 887.5,507 911.8,509.4 941,528.9 969,536.2M868,457.1 848.5,463.2 831.5,475.4 819.3,490 799.9,502.1 785.3,514.3 770.7,524 758.5,531.3 751.2,551.1M909,507.7 941.3,527.4 980.7,541.7 1005.8,543.5 1027.3,545.3 1063.1,548.9 1068.5,563.3 1084.7,570.4 1095.4,599.1M1113.3,591.9 1120.5,563.3 1138.4,531M277.3,174.3 289,197.7 294,214.3 295.7,234.3 302.3,247.7M789.3,345.1 803.9,344.6 828.3,337.8M828.3,337.8 838,357.3 852.6,369.4 859.9,391.3 862.3,411.1M751.2,551.1 741.5,560.5M1075.7,134.3 1105.7,154.3 1145.7,157.7M979,187.7 1005.7,181 1039,187.7 1065.7,197.7M786.9,347.5 774.7,362.1 765,376.7 755.3,391.3 750.4,405.9M1041.6,380.4 1045.2,366.1 1059.6,355.3 1077.5,344.6M1066.7,398.4 1088.2,401.9 1109.7,409.1 1124.1,412.7 1138.4,418.1M1142,419.9 1159.9,418.1 1177.9,425.2 1170.7,430.6 1159.9,445 1156.3,448.5M1159.9,418.1 1159.9,445M1072,310.8 1076.9,325.4 1076.9,340 1074.5,347.3M1059.9,354.6 1079.3,361.9 1089.1,371.6 1089.1,381.3M994.2,275.5 1001.5,284 1011.2,286.4 1028.2,286.4 1040.4,284M986.9,252.4 994.2,256 1001.5,254.8" stroke="#c8452c"/>
<path d="M374.3,325.3 374.3,373.9 359.7,398.2 340.3,437.1 335.4,451.7 347.6,461.4 350,485.7 347.6,505.2 340.3,534.3 330.6,553.8 320.8,568.4 291.7,565.9 274.7,561.1 252.8,578.1 223.6,602.4 213.9,614.5 194.4,612.1 184.7,619.4M374.3,376.3 403.5,373.9 427.8,361.8 437.5,352M350,488.2 388.9,493 418.1,505.2 437.5,522.2 449.7,527M532.8,336 549.3,349.6 578.5,369.1 593.1,381.2 627.1,383.6 634.4,398.2 631.9,427.4 627.1,446.8 619.8,476 617.4,505.2 624.7,529.5 646.5,539.2 661.1,565.9 680.6,563.5 700,556.2M466.7,565.9 491,563.5 529.9,556.2M583.3,597.5 549.3,600 525,595.1 505.6,600M583.3,597.5 612.5,592.7 631.9,582.9 656.3,565.9 680.6,563.5M497.7,326.1 512.3,330.5 533,335.4M418.1,335 437.5,330.2 456.9,325.3M592.7,151 579.3,163.2 567.2,182.6 564.7,202.1 579.3,207 587.9,224 583,255.6 567.2,270.2 552.6,282.4 538,297 533.1,316.5 533.1,335.9M583,258.1 596.4,267.8 613.4,265.4 628,265.4 637.7,270.2 649.9,272.7M594.6,152.4 600.7,144.6 612.9,117.8 622.6,98.3 632.3,83.7 644.5,88.6 656.7,83.7 676.1,74 692,61.8 688.3,37.5 687.1,10.7 678.6,1M836.4,361 855.8,373.2 860.7,397.5 853.4,417 858.3,434 868,455.9 880.2,470.5 889.9,490 887.5,507 911.8,509.4 941,528.9 969,536.2M868,457.1 848.5,463.2 831.5,475.4 819.3,490 799.9,502.1 785.3,514.3 770.7,524 758.5,531.3 751.2,551.1M909,507.7 941.3,527.4 980.7,541.7 1005.8,543.5 1027.3,545.3 1063.1,548.9 1068.5,563.3 1084.7,570.4 1095.4,599.1M1113.3,591.9 1120.5,563.3 1138.4,531M277.3,174.3 289,197.7 294,214.3 295.7,234.3 302.3,247.7M789.3,345.1 803.9,344.6 828.3,337.8M828.3,337.8 838,357.3 852.6,369.4 859.9,391.3 862.3,411.1M751.2,551.1 741.5,560.5M1075.7,134.3 1105.7,154.3 1145.7,157.7M979,187.7 1005.7,181 1039,187.7 1065.7,197.7M786.9,347.5 774.7,362.1 765,376.7 755.3,391.3 750.4,405.9M1041.6,380.4 1045.2,366.1 1059.6,355.3 1077.5,344.6M1066.7,398.4 1088.2,401.9 1109.7,409.1 1124.1,412.7 1138.4,418.1M1142,419.9 1159.9,418.1 1177.9,425.2 1170.7,430.6 1159.9,445 1156.3,448.5M1159.9,418.1 1159.9,445M1072,310.8 1076.9,325.4 1076.9,340 1074.5,347.3M1059.9,354.6 1079.3,361.9 1089.1,371.6 1089.1,381.3M994.2,275.5 1001.5,284 1011.2,286.4 1028.2,286.4 1040.4,284M986.9,252.4 994.2,256 1001.5,254.8" stroke="#5fae2c" stroke-dasharray="9 13"/>
<path d="M1070.3,385.8 1081.1,380.4 1095.4,382.2 1104.4,387.6 1102.6,394.8 1088.2,398.4 1077.5,394.8 1070.3,385.8M1087.9,381.3 1093.9,383.8 1103.7,386.2M1057.4,271.8 1064.7,276.7 1069.6,276.7M1059.6,355.3 1073.9,357.1 1084.7,366.1 1088.2,380.4M529.9,556.2 549.3,563.5 573.6,567.4M456.9,563.5 474,578.1 500.7,600M335.4,451.7 340.3,446.8 347.6,451.7 347.6,461.4M746.3,472.9 773.1,493.6 765.8,516.7 756.1,533.8 748.8,551.1M860.7,398.7 875.3,393.9 904.5,390.2 916.7,385.3 936.1,376.8M828.3,307.4 857.5,307.4M628,265.4 637.7,270.2M909,393.5 923.6,381.3 935.8,376.5M1042.8,381.3 1045.3,364.3 1055,354.6 1059.9,349.7M1057.4,271.8 1058.7,254.8 1062.3,240.2M486.8,325.6 497.7,326.1" stroke="#d62ec0" stroke-width="1.200"/>
<path d="M439.9,364.2 435.1,398.2 447.2,427.4 454.5,461.4 449.7,505.2 447.2,544.1 456.9,563.5M573.6,567.4 596.9,578.1 595.5,592.7 583.3,597.5M491,325.3 505.6,344.8 510.4,354.5 505.6,369.1M154,212.7 185.7,207.7 215.7,197.7 239,181 259,166M359.7,322.9 379.2,335 403.5,342.3 422.9,352 437.5,352M652.3,271.5 666.9,269 679.1,267.8 691.3,261.7 701,260.5 713.2,261.7M1120.7,211 1103.7,225.6 1084.2,242.6 1072,264.5 1069.6,288.9 1074.5,308.3 1084.2,325.4 1079.3,342.4 1059.9,349.7 1045.3,357 1023.4,347.3 1016.1,340M1067.2,211 1062.3,230.5 1057.4,252.4 1045.3,281.6 1023.4,308.3 1016.1,313.2M938.2,342.4 928.5,347.3 926,361.9 935.8,381.3 950.4,393.5 960.1,401.1M926.9,341 930.5,369.7 955.6,394.8 998.6,412.7 1045.2,407.3 1063.1,387.6 1095.4,401.9 1131.3,412.7 1142,430.6 1156.3,446.8 1176.1,448.5 1181.4,462.9 1176.1,484.4 1159.9,509.5 1138.4,527.4 1127.7,548.9M1152.3,156 1132.3,174.3 1129,187.7 1145.7,201 1175.7,212.7M162.8,422.5 175,425 172.6,446.8 160.4,476 153.1,493" stroke="#9fc4f0" stroke-opacity=".9" stroke-width=".9"/>
<path d="M764.5,286.7 774.7,309.8 784.5,332.9 789.3,345.1M965,211 969.8,242.6 986.9,252.4M989.3,275.5 974.7,286.4 965,296.2 967.4,308.3 989.3,318.1M1001.5,254.8 1016.1,247.5 1023.4,259.7M1052.4,389.4 1063.1,384 1066.7,398.4 1068.5,407.3M1022.3,1 1025.7,21 1039,61 1059,107.7 1075.7,134.3 1084,156 1072.3,167.7 1069,194.3 1067.3,214.3 1059,234.3" stroke="#eee9a0" stroke-opacity=".9" stroke-width="1"/>
</g></svg>
<g font-family="Liberation Sans,Arial,sans-serif" text-anchor="middle">
<g font-size="11.700" fill="#111" stroke="#111" stroke-opacity=".9" stroke-width="2.600" stroke-linejoin="round" letter-spacing=".4">
<text x="382.0" y="222.0">NORTH AMERICA</text>
<text x="1406.0" y="222.0">NORTH AMERICA</text>
<text x="504.5" y="418.0">SOUTH AMERICA</text>
<text x="733.0" y="218.0">EUROPE</text>
<text x="729.5" y="356.5">AFRICA</text>
<text x="938.0" y="242.0">ASIA</text>
<text x="1049.5" y="462.0">AUSTRALIA</text>
<text x="25.5" y="462.0">AUSTRALIA</text>
</g>
<g font-size="11.700" fill="#fff" stroke="#fff" stroke-width=".4" letter-spacing=".4">
<text x="382.0" y="222.0">NORTH AMERICA</text>
<text x="1406.0" y="222.0">NORTH AMERICA</text>
<text x="504.5" y="418.0">SOUTH AMERICA</text>
<text x="733.0" y="218.0">EUROPE</text>
<text x="729.5" y="356.5">AFRICA</text>
<text x="938.0" y="242.0">ASIA</text>
<text x="1049.5" y="462.0">AUSTRALIA</text>
<text x="25.5" y="462.0">AUSTRALIA</text>
</g>
<g>
</g><g font-size="11.500" font-style="italic" fill="#4fa7dc" letter-spacing=".9">
<text x="100.5" y="290.0">Pacific Ocean</text>
<text x="1124.5" y="290.0">Pacific Ocean</text>
<text x="271.5" y="353.0">Pacific Ocean</text>
<text x="1295.5" y="353.0">Pacific Ocean</text>
<text x="109.0" y="594.0">Pacific Ocean</text>
<text x="1133.0" y="594.0">Pacific Ocean</text>
<text x="563.0" y="293.0">Atlantic</text>
<text x="563.0" y="307.0">Ocean</text>
<text x="891.0" y="457.0">Indian Ocean</text>
</g></g>
<path d="M970 430.9L990 429.5" stroke="#e0212a" stroke-width="2.600"/>
<path d="M1005.4000000000001 419L1031.8 414.2" stroke="#3fd02f" stroke-width="2.400"/>
<circle cx="997" cy="425.3" r="16" fill="#fff" fill-opacity=".22" stroke="#fff" stroke-opacity=".9" stroke-width="1.100"/>
<g transform="translate(608.4,117.5)"><rect x=".5" y=".5" width="9" height="9" fill="#3e6be0" stroke="#dfe8ff"/><path d="M1.6 6.2H3.4V2.9H5.2V7H6.8V3.8H8.6" fill="none" stroke="#fff" stroke-width="1.2"/></g>
<g transform="translate(213.4,120.5)"><rect x=".5" y=".5" width="9" height="9" fill="#3e6be0" stroke="#dfe8ff"/><path d="M1.6 6.2H3.4V2.9H5.2V7H6.8V3.8H8.6" fill="none" stroke="#fff" stroke-width="1.2"/></g>
<g transform="translate(222.0,126.1)"><rect x=".5" y=".5" width="9" height="9" fill="#f6ea1f" stroke="#000"/><path d="M1.6 6.2H3.4V2.9H5.2V7H6.8V3.8H8.6" fill="none" stroke="#000" stroke-width="1.2"/></g>
<g transform="translate(223.9,127.3)"><rect x=".5" y=".5" width="9" height="9" fill="#fff" stroke="#000"/><path d="M1.6 6.2H3.4V2.9H5.2V7H6.8V3.8H8.6" fill="none" stroke="#000" stroke-width="1.2"/></g>
<g transform="translate(244.5,134.5)"><rect x=".5" y=".5" width="9" height="9" fill="#fff" stroke="#000"/><path d="M1.6 6.2H3.4V2.9H5.2V7H6.8V3.8H8.6" fill="none" stroke="#000" stroke-width="1.2"/></g>
<g transform="translate(229.3,140.7)"><rect x=".5" y=".5" width="9" height="9" fill="#fff" stroke="#000"/><path d="M1.6 6.2H3.4V2.9H5.2V7H6.8V3.8H8.6" fill="none" stroke="#000" stroke-width="1.2"/></g>
<g transform="translate(234.1,143.2)"><rect x=".5" y=".5" width="9" height="9" fill="#fff" stroke="#000"/><path d="M1.6 6.2H3.4V2.9H5.2V7H6.8V3.8H8.6" fill="none" stroke="#000" stroke-width="1.2"/></g>
<g transform="translate(225.5,148.0)"><rect x=".5" y=".5" width="9" height="9" fill="#fff" stroke="#000"/><path d="M1.6 6.2H3.4V2.9H5.2V7H6.8V3.8H8.6" fill="none" stroke="#000" stroke-width="1.2"/></g>
<g transform="translate(232.9,150.5)"><rect x=".5" y=".5" width="9" height="9" fill="#fff" stroke="#000"/><path d="M1.6 6.2H3.4V2.9H5.2V7H6.8V3.8H8.6" fill="none" stroke="#000" stroke-width="1.2"/></g>
<g transform="translate(687.9,177.4)"><path d="M0-9 9 0 0 9-9 0Z" fill="#f4e512"/><path d="M0-7.500 7.500 0 0 7.500-7.500 0Z" fill="none" stroke="#000" stroke-opacity=".7" stroke-width=".7"/><g fill="#000"><path d="M-3.800 2.500-.8-.8C-.5-2.500 1-3.300 2.200-2.600L3.800-2.800 2.600-1.700C2.600 0 1.500 1.400 0 1.800L-1 3.500H-2L-1.600 2.200Z"/></g></g>
<g transform="translate(209.3,175.3)"><rect x=".5" y=".5" width="9" height="9" fill="#3e6be0" stroke="#dfe8ff"/><path d="M1.6 6.2H3.4V2.9H5.2V7H6.8V3.8H8.6" fill="none" stroke="#fff" stroke-width="1.2"/></g>
<g transform="translate(922.7,181.0)"><path d="M0-9 9 0 0 9-9 0Z" fill="#f4e512"/><path d="M0-7.500 7.500 0 0 7.500-7.500 0Z" fill="none" stroke="#000" stroke-opacity=".7" stroke-width=".7"/><g fill="#000"><path d="M-3.500-1.500 3.500-3M-3.500.5 3.500-1M-3.500 2.500 3.500 1" stroke="#000" stroke-width="1"/></g></g>
<g transform="translate(653.0,191.5)"><path d="M0-9 9 0 0 9-9 0Z" fill="#f4e512"/><path d="M0-7.500 7.500 0 0 7.500-7.500 0Z" fill="none" stroke="#000" stroke-opacity=".7" stroke-width=".7"/><g fill="#000"><path d="M-3 3.500C-4 1-2.500-.5-2-2.500-1-1.500-1-.5-.5 0 0-1.500 0-3 .8-4.200 1.500-2 3.500-.5 3 3.500Z"/></g></g>
<g transform="translate(200.5,190.1)"><rect x=".5" y=".5" width="9" height="9" fill="#f6ea1f" stroke="#000"/><path d="M1.6 6.2H3.4V2.9H5.2V7H6.8V3.8H8.6" fill="none" stroke="#000" stroke-width="1.2"/></g>
<g transform="translate(652.2,196.2)"><rect x=".5" y=".5" width="9" height="9" fill="#fff" stroke="#000"/><path d="M1.6 6.2H3.4V2.9H5.2V7H6.8V3.8H8.6" fill="none" stroke="#000" stroke-width="1.2"/></g>
<g transform="translate(185.5,196.7)"><rect x=".5" y=".5" width="9" height="9" fill="#f6ea1f" stroke="#000"/><path d="M1.6 6.2H3.4V2.9H5.2V7H6.8V3.8H8.6" fill="none" stroke="#000" stroke-width="1.2"/></g>
<g transform="translate(670.0,202.4)"><path d="M0-9 9 0 0 9-9 0Z" fill="#f4e512"/><path d="M0-7.500 7.500 0 0 7.500-7.500 0Z" fill="none" stroke="#000" stroke-opacity=".7" stroke-width=".7"/><g fill="#000"><path d="M-4.3 1.2C-3 -2.5 -1-2.600 0-1.200 1-2.600 3-2.500 4.300 1.200 2.500 0 1.500 .3 0 1.400-1.500.3-2.500 0-4.300 1.200Z"/></g></g>
<g transform="translate(178.1,200.3)"><rect x=".5" y=".5" width="9" height="9" fill="#f6ea1f" stroke="#000"/><path d="M1.6 6.2H3.4V2.9H5.2V7H6.8V3.8H8.6" fill="none" stroke="#000" stroke-width="1.2"/></g>
<g transform="translate(309.7,212.2)"><path d="M0-8.700 8.700 0 0 8.700-8.700 0Z" fill="#e01b24" stroke="#2a0505" stroke-opacity=".8" stroke-width=".8" stroke-dasharray="1.2 .6"/><g fill="#1a0000" fill-opacity=".85"><circle cx="0" cy="-2" r="1.5"/><circle cx="-1.9" cy="1.1" r="1.5"/><circle cx="1.9" cy="1.1" r="1.5"/><circle cy="-.2" r="2.500" fill="none" stroke="#1a0000" stroke-width=".7"/><path d="M-2.600 3.600H2.600" stroke="#1a0000" stroke-width=".8"/></g></g>
<g transform="translate(1104.1,210.2)"><rect x=".5" y=".5" width="9" height="9" fill="#f6ea1f" stroke="#000"/><path d="M1.6 6.2H3.4V2.9H5.2V7H6.8V3.8H8.6" fill="none" stroke="#000" stroke-width="1.2"/></g>
<g transform="translate(748.0,212.9)"><path d="M0-9 9 0 0 9-9 0Z" fill="#f4e512"/><path d="M0-7.500 7.500 0 0 7.500-7.500 0Z" fill="none" stroke="#000" stroke-opacity=".7" stroke-width=".7"/><g fill="#000"><circle cx="0" cy="-2" r="1.5"/><circle cx="-1.9" cy="1.1" r="1.5"/><circle cx="1.9" cy="1.1" r="1.5"/><circle cy="-.2" r="2.500" fill="none" stroke="#1a0000" stroke-width=".7"/><path d="M-2.600 3.600H2.600" stroke="#1a0000" stroke-width=".8"/></g></g>
<g transform="translate(666.0,214.0)"><path d="M0-9 9 0 0 9-9 0Z" fill="#f4e512"/><path d="M0-7.500 7.500 0 0 7.500-7.500 0Z" fill="none" stroke="#000" stroke-opacity=".7" stroke-width=".7"/><g fill="#000"><circle r="2.400"/><path d="M0-4.300V4.300M-4.300 0H4.300M-3-3 3 3M-3 3 3-3" stroke="#000" stroke-width=".8"/></g></g>
<g transform="translate(311.5,219.3)"><rect x=".5" y=".5" width="9" height="9" fill="#fff" stroke="#000"/><path d="M1.6 6.2H3.4V2.9H5.2V7H6.8V3.8H8.6" fill="none" stroke="#000" stroke-width="1.2"/></g>
<g transform="translate(681.4,221.4)"><rect x=".5" y=".5" width="9" height="9" fill="#fff" stroke="#000"/><path d="M1.6 6.2H3.4V2.9H5.2V7H6.8V3.8H8.6" fill="none" stroke="#000" stroke-width="1.2"/></g>
<g transform="translate(309.2,230.4)"><path d="M0-9 9 0 0 9-9 0Z" fill="#f4e512"/><path d="M-6.200 2.800 0 9 6.200 2.800Z" fill="#111"/><path d="M0-7.500 7.500 0 0 7.500-7.500 0Z" fill="none" stroke="#000" stroke-opacity=".7" stroke-width=".7"/><g fill="#000"><path d="M-3.600-.600C-2.500-3-1-3.200 0-2 1-3.200 2.600-3 3.600-.6Z"/></g></g>
<g transform="translate(734.5,228.2)"><rect x=".5" y=".5" width="9" height="9" fill="#fff" stroke="#000"/><path d="M1.6 6.2H3.4V2.9H5.2V7H6.8V3.8H8.6" fill="none" stroke="#000" stroke-width="1.2"/></g>
<g transform="translate(690.7,232.3)"><rect x=".5" y=".5" width="9" height="9" fill="#fff" stroke="#000"/><path d="M1.6 6.2H3.4V2.9H5.2V7H6.8V3.8H8.6" fill="none" stroke="#000" stroke-width="1.2"/></g>
<g transform="translate(344.4,237.5)"><rect x=".5" y=".5" width="9" height="9" fill="#fff" stroke="#000"/><path d="M1.6 6.2H3.4V2.9H5.2V7H6.8V3.8H8.6" fill="none" stroke="#000" stroke-width="1.2"/></g>
<g transform="translate(408.3,242.6)"><path d="M0-8.700 8.700 0 0 8.700-8.700 0Z" fill="#e01b24" stroke="#2a0505" stroke-opacity=".8" stroke-width=".8" stroke-dasharray="1.2 .6"/><g fill="#1a0000" fill-opacity=".85"><circle cx="0" cy="-2" r="1.5"/><circle cx="-1.9" cy="1.1" r="1.5"/><circle cx="1.9" cy="1.1" r="1.5"/><circle cy="-.2" r="2.500" fill="none" stroke="#1a0000" stroke-width=".7"/><path d="M-2.600 3.600H2.600" stroke="#1a0000" stroke-width=".8"/></g></g>
<g transform="translate(782.4,242.1)"><rect x=".5" y=".5" width="9" height="9" fill="#3e6be0" stroke="#dfe8ff"/><path d="M1.6 6.2H3.4V2.9H5.2V7H6.8V3.8H8.6" fill="none" stroke="#fff" stroke-width="1.2"/></g>
<g transform="translate(1064.4,242.3)"><rect x=".5" y=".5" width="9" height="9" fill="#f6ea1f" stroke="#000"/><path d="M1.6 6.2H3.4V2.9H5.2V7H6.8V3.8H8.6" fill="none" stroke="#000" stroke-width="1.2"/></g>
<g transform="translate(796.5,243.3)"><rect x=".5" y=".5" width="9" height="9" fill="#3e6be0" stroke="#dfe8ff"/><path d="M1.6 6.2H3.4V2.9H5.2V7H6.8V3.8H8.6" fill="none" stroke="#fff" stroke-width="1.2"/></g>
<g transform="translate(448.7,246.2)"><path d="M0-8.700 8.700 0 0 8.700-8.700 0Z" fill="#e01b24" stroke="#2a0505" stroke-opacity=".8" stroke-width=".8" stroke-dasharray="1.2 .6"/><g fill="#1a0000" fill-opacity=".85"><circle cx="0" cy="-2" r="1.5"/><circle cx="-1.9" cy="1.1" r="1.5"/><circle cx="1.9" cy="1.1" r="1.5"/><circle cy="-.2" r="2.500" fill="none" stroke="#1a0000" stroke-width=".7"/><path d="M-2.600 3.600H2.600" stroke="#1a0000" stroke-width=".8"/></g></g>
<g transform="translate(867.6,246.2)"><rect x=".5" y=".5" width="9" height="9" fill="#fff" stroke="#000"/><path d="M1.6 6.2H3.4V2.9H5.2V7H6.8V3.8H8.6" fill="none" stroke="#000" stroke-width="1.2"/></g>
<g transform="translate(716.7,246.9)"><rect x=".5" y=".5" width="9" height="9" fill="#fff" stroke="#000"/><path d="M1.6 6.2H3.4V2.9H5.2V7H6.8V3.8H8.6" fill="none" stroke="#000" stroke-width="1.2"/></g>
<g transform="translate(736.2,246.9)"><rect x=".5" y=".5" width="9" height="9" fill="#fff" stroke="#000"/><path d="M1.6 6.2H3.4V2.9H5.2V7H6.8V3.8H8.6" fill="none" stroke="#000" stroke-width="1.2"/></g>
<g transform="translate(305.2,247.8)"><rect x=".5" y=".5" width="9" height="9" fill="#fff" stroke="#000"/><path d="M1.6 6.2H3.4V2.9H5.2V7H6.8V3.8H8.6" fill="none" stroke="#000" stroke-width="1.2"/></g>
<g transform="translate(309.5,253.5)"><rect x=".5" y=".5" width="9" height="9" fill="#fff" stroke="#000"/><path d="M1.6 6.2H3.4V2.9H5.2V7H6.8V3.8H8.6" fill="none" stroke="#000" stroke-width="1.2"/></g>
<g transform="translate(418.9,256.6)"><path d="M0-8.700 8.700 0 0 8.700-8.700 0Z" fill="#e01b24" stroke="#2a0505" stroke-opacity=".8" stroke-width=".8" stroke-dasharray="1.2 .6"/><g fill="#1a0000" fill-opacity=".85"><circle cx="0" cy="-2" r="1.5"/><circle cx="-1.9" cy="1.1" r="1.5"/><circle cx="1.9" cy="1.1" r="1.5"/><circle cy="-.2" r="2.500" fill="none" stroke="#1a0000" stroke-width=".7"/><path d="M-2.600 3.600H2.600" stroke="#1a0000" stroke-width=".8"/></g></g>
<g transform="translate(735.5,255.4)"><rect x=".5" y=".5" width="9" height="9" fill="#fff" stroke="#000"/><path d="M1.6 6.2H3.4V2.9H5.2V7H6.8V3.8H8.6" fill="none" stroke="#000" stroke-width="1.2"/></g>
<g transform="translate(770.3,255.4)"><rect x=".5" y=".5" width="9" height="9" fill="#3e6be0" stroke="#dfe8ff"/><path d="M1.6 6.2H3.4V2.9H5.2V7H6.8V3.8H8.6" fill="none" stroke="#fff" stroke-width="1.2"/></g>
<g transform="translate(798.7,259.1)"><rect x=".5" y=".5" width="9" height="9" fill="#fff" stroke="#000"/><path d="M1.6 6.2H3.4V2.9H5.2V7H6.8V3.8H8.6" fill="none" stroke="#000" stroke-width="1.2"/></g>
<g transform="translate(743.5,259.8)"><rect x=".5" y=".5" width="9" height="9" fill="#fff" stroke="#000"/><path d="M1.6 6.2H3.4V2.9H5.2V7H6.8V3.8H8.6" fill="none" stroke="#000" stroke-width="1.2"/></g>
<g transform="translate(336.8,260.3)"><rect x=".5" y=".5" width="9" height="9" fill="#fff" stroke="#000"/><path d="M1.6 6.2H3.4V2.9H5.2V7H6.8V3.8H8.6" fill="none" stroke="#000" stroke-width="1.2"/></g>
<g transform="translate(750.8,260.3)"><rect x=".5" y=".5" width="9" height="9" fill="#fff" stroke="#000"/><path d="M1.6 6.2H3.4V2.9H5.2V7H6.8V3.8H8.6" fill="none" stroke="#000" stroke-width="1.2"/></g>
<g transform="translate(312.0,261.5)"><rect x=".5" y=".5" width="9" height="9" fill="#fff" stroke="#000"/><path d="M1.6 6.2H3.4V2.9H5.2V7H6.8V3.8H8.6" fill="none" stroke="#000" stroke-width="1.2"/></g>
<g transform="translate(326.5,262.7)"><rect x=".5" y=".5" width="9" height="9" fill="#fff" stroke="#000"/><path d="M1.6 6.2H3.4V2.9H5.2V7H6.8V3.8H8.6" fill="none" stroke="#000" stroke-width="1.2"/></g>
<g transform="translate(1023.9,268.2)"><path d="M0-9 9 0 0 9-9 0Z" fill="#f4e512"/><path d="M0-7.500 7.500 0 0 7.500-7.500 0Z" fill="none" stroke="#000" stroke-opacity=".7" stroke-width=".7"/><g fill="#000"><path d="M-3 3.500C-4 1-2.500-.5-2-2.500-1-1.500-1-.5-.5 0 0-1.500 0-3 .8-4.200 1.500-2 3.500-.5 3 3.500Z"/></g></g>
<g transform="translate(687.9,270.9)"><path d="M0-9 9 0 0 9-9 0Z" fill="#f4e512"/><path d="M0-7.500 7.500 0 0 7.500-7.500 0Z" fill="none" stroke="#000" stroke-opacity=".7" stroke-width=".7"/><g fill="#000"><path d="M-4.3 1.2C-3 -2.5 -1-2.600 0-1.200 1-2.600 3-2.500 4.300 1.200 2.500 0 1.500 .3 0 1.400-1.500.3-2.500 0-4.300 1.200Z"/></g></g>
<g transform="translate(323.0,271.0)"><path d="M0-9 9 0 0 9-9 0Z" fill="#f4e512"/><path d="M0-7.500 7.500 0 0 7.500-7.500 0Z" fill="none" stroke="#000" stroke-opacity=".7" stroke-width=".7"/><g fill="#000"><circle cy="-1" r="2.600"/><path d="M-3.800 1.500 3.800 4M3.800 1.500-3.800 4" stroke="#000" stroke-width="1"/></g></g>
<g transform="translate(732.5,268.8)"><rect x=".5" y=".5" width="9" height="9" fill="#fff" stroke="#000"/><path d="M1.6 6.2H3.4V2.9H5.2V7H6.8V3.8H8.6" fill="none" stroke="#000" stroke-width="1.2"/></g>
<g transform="translate(799.5,269.5)"><rect x=".5" y=".5" width="9" height="9" fill="#3e6be0" stroke="#dfe8ff"/><path d="M1.6 6.2H3.4V2.9H5.2V7H6.8V3.8H8.6" fill="none" stroke="#fff" stroke-width="1.2"/></g>
<g transform="translate(339.6,273.3)"><path d="M0-9 9 0 0 9-9 0Z" fill="#f4e512"/><path d="M0-7.500 7.500 0 0 7.500-7.500 0Z" fill="none" stroke="#000" stroke-opacity=".7" stroke-width=".7"/><g fill="#000"><path d="M-4.3 1.2C-3 -2.5 -1-2.600 0-1.200 1-2.600 3-2.500 4.300 1.200 2.500 0 1.500 .3 0 1.400-1.500.3-2.500 0-4.300 1.200Z"/></g></g>
<g transform="translate(392.0,278.0)"><path d="M0-9 9 0 0 9-9 0Z" fill="#f4e512"/><path d="M0-7.500 7.500 0 0 7.500-7.500 0Z" fill="none" stroke="#000" stroke-opacity=".7" stroke-width=".7"/><g fill="#000"><path d="M-4.3 1.2C-3 -2.5 -1-2.600 0-1.200 1-2.600 3-2.500 4.300 1.200 2.500 0 1.500 .3 0 1.400-1.500.3-2.500 0-4.300 1.200Z"/></g></g>
<g transform="translate(797.9,279.4)"><path d="M0-9 9 0 0 9-9 0Z" fill="#f4e512"/><path d="M-6.200 2.800 0 9 6.200 2.800Z" fill="#111"/><path d="M0-7.500 7.500 0 0 7.500-7.500 0Z" fill="none" stroke="#000" stroke-opacity=".7" stroke-width=".7"/><g fill="#000"><path d="M-3.600-.600C-2.500-3-1-3.200 0-2 1-3.200 2.600-3 3.600-.6Z"/></g></g>
<g transform="translate(382.9,280.6)"><path d="M0-9 9 0 0 9-9 0Z" fill="#f4e512"/><path d="M0-7.500 7.500 0 0 7.500-7.500 0Z" fill="none" stroke="#000" stroke-opacity=".7" stroke-width=".7"/><g fill="#000"><path d="M-4.3 1.2C-3 -2.5 -1-2.600 0-1.200 1-2.600 3-2.500 4.300 1.200 2.500 0 1.500 .3 0 1.400-1.500.3-2.500 0-4.300 1.200Z"/></g></g>
<g transform="translate(388.3,283.8)"><path d="M0-9 9 0 0 9-9 0Z" fill="#f4e512"/><path d="M0-7.500 7.500 0 0 7.500-7.500 0Z" fill="none" stroke="#000" stroke-opacity=".7" stroke-width=".7"/><g fill="#000"><path d="M-3.800-3H3.800L2.500-1.200H-2.200ZM-1.800-.6H2L.9 1H-1ZM-.6 1.600H.9L.2 4.200Z"/></g></g>
<g transform="translate(365.0,281.7)"><rect x=".5" y=".5" width="9" height="9" fill="#fff" stroke="#000"/><path d="M1.6 6.2H3.4V2.9H5.2V7H6.8V3.8H8.6" fill="none" stroke="#000" stroke-width="1.2"/></g>
<g transform="translate(402.9,284.8)"><path d="M0-9 9 0 0 9-9 0Z" fill="#f4e512"/><path d="M0-7.500 7.500 0 0 7.500-7.500 0Z" fill="none" stroke="#000" stroke-opacity=".7" stroke-width=".7"/><g fill="#000"><path d="M-.5-2H.5V4.300H-.5ZM-4-1.600C-2-3.600 2-3.600 4-1.600 2-2.300 1-2 0-1.200-1-2-2-2.300-4-1.600Z"/></g></g>
<g transform="translate(808.8,284.8)"><path d="M0-9 9 0 0 9-9 0Z" fill="#f4e512"/><path d="M-6.200 2.800 0 9 6.200 2.800Z" fill="#111"/><path d="M0-7.500 7.500 0 0 7.500-7.500 0Z" fill="none" stroke="#000" stroke-opacity=".7" stroke-width=".7"/><g fill="#000"><path d="M-3.600-.600C-2.500-3-1-3.200 0-2 1-3.200 2.600-3 3.600-.6Z"/></g></g>
<g transform="translate(334.3,285.1)"><rect x=".5" y=".5" width="9" height="9" fill="#3e6be0" stroke="#dfe8ff"/><path d="M1.6 6.2H3.4V2.9H5.2V7H6.8V3.8H8.6" fill="none" stroke="#fff" stroke-width="1.2"/></g>
<g transform="translate(879.4,287.9)"><path d="M0-9 9 0 0 9-9 0Z" fill="#f4e512"/><path d="M0-7.500 7.500 0 0 7.500-7.500 0Z" fill="none" stroke="#000" stroke-opacity=".7" stroke-width=".7"/><g fill="#000"><path d="M-.5-2H.5V4.300H-.5ZM-4-1.600C-2-3.600 2-3.600 4-1.600 2-2.300 1-2 0-1.200-1-2-2-2.300-4-1.600Z"/></g></g>
<g transform="translate(902.0,291.6)"><path d="M0-9 9 0 0 9-9 0Z" fill="#f4e512"/><path d="M0-7.500 7.500 0 0 7.500-7.500 0Z" fill="none" stroke="#000" stroke-opacity=".7" stroke-width=".7"/><g fill="#000"><path d="M-3.800 2.500-.8-.8C-.5-2.500 1-3.300 2.200-2.600L3.800-2.800 2.600-1.700C2.600 0 1.500 1.400 0 1.800L-1 3.500H-2L-1.600 2.200Z"/></g></g>
<g transform="translate(828.7,290.2)"><rect x=".5" y=".5" width="9" height="9" fill="#3e6be0" stroke="#dfe8ff"/><path d="M1.6 6.2H3.4V2.9H5.2V7H6.8V3.8H8.6" fill="none" stroke="#fff" stroke-width="1.2"/></g>
<g transform="translate(869.7,292.8)"><path d="M0-9 9 0 0 9-9 0Z" fill="#f4e512"/><path d="M0-7.500 7.500 0 0 7.500-7.500 0Z" fill="none" stroke="#000" stroke-opacity=".7" stroke-width=".7"/><g fill="#000"><path d="M-.5-2H.5V4.300H-.5ZM-4-1.600C-2-3.600 2-3.600 4-1.600 2-2.300 1-2 0-1.200-1-2-2-2.300-4-1.600Z"/></g></g>
<g transform="translate(809.5,290.5)"><rect x=".5" y=".5" width="9" height="9" fill="#fff" stroke="#000"/><path d="M1.6 6.2H3.4V2.9H5.2V7H6.8V3.8H8.6" fill="none" stroke="#000" stroke-width="1.2"/></g>
<g transform="translate(812.1,293.9)"><rect x=".5" y=".5" width="9" height="9" fill="#3e6be0" stroke="#dfe8ff"/><path d="M1.6 6.2H3.4V2.9H5.2V7H6.8V3.8H8.6" fill="none" stroke="#fff" stroke-width="1.2"/></g>
<g transform="translate(1028.1,296.5)"><rect x=".5" y=".5" width="9" height="9" fill="#f39a1c" stroke="#fff"/><path d="M1.6 6.2H3.4V2.9H5.2V7H6.8V3.8H8.6" fill="none" stroke="#fff" stroke-width="1.2"/></g>
<g transform="translate(902.5,303.3)"><path d="M0-8.700 8.700 0 0 8.700-8.700 0Z" fill="#e01b24" stroke="#2a0505" stroke-opacity=".8" stroke-width=".8" stroke-dasharray="1.2 .6"/><g fill="#1a0000" fill-opacity=".85"><circle cx="0" cy="-2" r="1.5"/><circle cx="-1.9" cy="1.1" r="1.5"/><circle cx="1.9" cy="1.1" r="1.5"/><circle cy="-.2" r="2.500" fill="none" stroke="#1a0000" stroke-width=".7"/><path d="M-2.600 3.600H2.600" stroke="#1a0000" stroke-width=".8"/></g></g>
<g transform="translate(917.9,303.3)"><path d="M0-8.700 8.700 0 0 8.700-8.700 0Z" fill="#e01b24" stroke="#2a0505" stroke-opacity=".8" stroke-width=".8" stroke-dasharray="1.2 .6"/><g fill="#1a0000" fill-opacity=".85"><circle cx="0" cy="-2" r="1.5"/><circle cx="-1.9" cy="1.1" r="1.5"/><circle cx="1.9" cy="1.1" r="1.5"/><circle cy="-.2" r="2.500" fill="none" stroke="#1a0000" stroke-width=".7"/><path d="M-2.600 3.600H2.600" stroke="#1a0000" stroke-width=".8"/></g></g>
<g transform="translate(355.3,301.2)"><rect x=".5" y=".5" width="9" height="9" fill="#f6ea1f" stroke="#000"/><path d="M1.6 6.2H3.4V2.9H5.2V7H6.8V3.8H8.6" fill="none" stroke="#000" stroke-width="1.2"/></g>
<g transform="translate(1001.0,307.1)"><path d="M0-9 9 0 0 9-9 0Z" fill="#f4e512"/><path d="M0-7.500 7.500 0 0 7.500-7.500 0Z" fill="none" stroke="#000" stroke-opacity=".7" stroke-width=".7"/><g fill="#000"><path d="M-4.500.6 3.500-.8C4.800-.8 4.800.6 3.500.8L.5 1.200-2 4H-3L-1.600 1.400-3.600 1.600-4.500 2.600Z M-.5-.4-2.200-3.200H-1.200L1.800-.600Z"/></g></g>
<g transform="translate(1003.5,306.5)"><rect x=".5" y=".5" width="9" height="9" fill="#f6ea1f" stroke="#000"/><path d="M1.6 6.2H3.4V2.9H5.2V7H6.8V3.8H8.6" fill="none" stroke="#000" stroke-width="1.2"/></g>
<g transform="translate(1005.5,313.6)"><rect x=".5" y=".5" width="9" height="9" fill="#f6ea1f" stroke="#000"/><path d="M1.6 6.2H3.4V2.9H5.2V7H6.8V3.8H8.6" fill="none" stroke="#000" stroke-width="1.2"/></g>
<g transform="translate(377.8,318.3)"><path d="M0-9 9 0 0 9-9 0Z" fill="#f4e512"/><path d="M0-7.500 7.500 0 0 7.500-7.500 0Z" fill="none" stroke="#000" stroke-opacity=".7" stroke-width=".7"/><g fill="#000"><path d="M-4.300 3.500-1.500-.8H1.500L4.300 3.500Z"/><path d="M-1-1.800 0-3.800 1-1.800Z"/></g></g>
<g transform="translate(866.0,318.8)"><path d="M0-9 9 0 0 9-9 0Z" fill="#f4e512"/><path d="M0-7.500 7.500 0 0 7.500-7.500 0Z" fill="none" stroke="#000" stroke-opacity=".7" stroke-width=".7"/><g fill="#000"><circle r="2.800"/><path d="M0-4.500V4.500M-4.500 0H4.500M-3.200-3.200 3.200 3.200M-3.200 3.200 3.200-3.200" stroke="#000" stroke-width=".9"/></g></g>
<g transform="translate(451.9,317.5)"><rect x=".5" y=".5" width="9" height="9" fill="#3e6be0" stroke="#dfe8ff"/><path d="M1.6 6.2H3.4V2.9H5.2V7H6.8V3.8H8.6" fill="none" stroke="#fff" stroke-width="1.2"/></g>
<g transform="translate(476.2,319.5)"><rect x=".5" y=".5" width="9" height="9" fill="#fff" stroke="#000"/><path d="M1.6 6.2H3.4V2.9H5.2V7H6.8V3.8H8.6" fill="none" stroke="#000" stroke-width="1.2"/></g>
<g transform="translate(459.2,319.9)"><rect x=".5" y=".5" width="9" height="9" fill="#3e6be0" stroke="#dfe8ff"/><path d="M1.6 6.2H3.4V2.9H5.2V7H6.8V3.8H8.6" fill="none" stroke="#fff" stroke-width="1.2"/></g>
<g transform="translate(466.5,319.9)"><rect x=".5" y=".5" width="9" height="9" fill="#3e6be0" stroke="#dfe8ff"/><path d="M1.6 6.2H3.4V2.9H5.2V7H6.8V3.8H8.6" fill="none" stroke="#fff" stroke-width="1.2"/></g>
<g transform="translate(464.1,321.2)"><rect x=".5" y=".5" width="9" height="9" fill="#3e6be0" stroke="#dfe8ff"/><path d="M1.6 6.2H3.4V2.9H5.2V7H6.8V3.8H8.6" fill="none" stroke="#fff" stroke-width="1.2"/></g>
<g transform="translate(375.2,324.8)"><rect x=".5" y=".5" width="9" height="9" fill="#3e6be0" stroke="#dfe8ff"/><path d="M1.6 6.2H3.4V2.9H5.2V7H6.8V3.8H8.6" fill="none" stroke="#fff" stroke-width="1.2"/></g>
<g transform="translate(391.1,326.0)"><rect x=".5" y=".5" width="9" height="9" fill="#3e6be0" stroke="#dfe8ff"/><path d="M1.6 6.2H3.4V2.9H5.2V7H6.8V3.8H8.6" fill="none" stroke="#fff" stroke-width="1.2"/></g>
<g transform="translate(785.2,328.8)"><path d="M0-8.700 8.700 0 0 8.700-8.700 0Z" fill="#e01b24" stroke="#2a0505" stroke-opacity=".8" stroke-width=".8" stroke-dasharray="1.2 .6"/><g fill="#1a0000" fill-opacity=".85"><circle cx="0" cy="-2" r="1.5"/><circle cx="-1.9" cy="1.1" r="1.5"/><circle cx="1.9" cy="1.1" r="1.5"/><circle cy="-.2" r="2.500" fill="none" stroke="#1a0000" stroke-width=".7"/><path d="M-2.600 3.600H2.600" stroke="#1a0000" stroke-width=".8"/></g></g>
<g transform="translate(386.2,327.2)"><rect x=".5" y=".5" width="9" height="9" fill="#3e6be0" stroke="#dfe8ff"/><path d="M1.6 6.2H3.4V2.9H5.2V7H6.8V3.8H8.6" fill="none" stroke="#fff" stroke-width="1.2"/></g>
<g transform="translate(1001.5,330.3)"><path d="M0-8.700 8.700 0 0 8.700-8.700 0Z" fill="#e01b24" stroke="#2a0505" stroke-opacity=".8" stroke-width=".8" stroke-dasharray="1.2 .6"/><g fill="#1a0000" fill-opacity=".85"><circle cx="0" cy="-2" r="1.5"/><circle cx="-1.9" cy="1.1" r="1.5"/><circle cx="1.9" cy="1.1" r="1.5"/><circle cy="-.2" r="2.500" fill="none" stroke="#1a0000" stroke-width=".7"/><path d="M-2.600 3.600H2.600" stroke="#1a0000" stroke-width=".8"/></g></g>
<g transform="translate(381.3,328.5)"><rect x=".5" y=".5" width="9" height="9" fill="#3e6be0" stroke="#dfe8ff"/><path d="M1.6 6.2H3.4V2.9H5.2V7H6.8V3.8H8.6" fill="none" stroke="#fff" stroke-width="1.2"/></g>
<g transform="translate(392.3,330.9)"><rect x=".5" y=".5" width="9" height="9" fill="#3e6be0" stroke="#dfe8ff"/><path d="M1.6 6.2H3.4V2.9H5.2V7H6.8V3.8H8.6" fill="none" stroke="#fff" stroke-width="1.2"/></g>
<g transform="translate(1011.2,335.1)"><path d="M0-9 9 0 0 9-9 0Z" fill="#f4e512"/><path d="M0-7.500 7.500 0 0 7.500-7.500 0Z" fill="none" stroke="#000" stroke-opacity=".7" stroke-width=".7"/><g fill="#000"><path d="M-4.3 1.2C-3 -2.5 -1-2.600 0-1.200 1-2.600 3-2.500 4.300 1.200 2.500 0 1.500 .3 0 1.400-1.500.3-2.500 0-4.300 1.200Z"/></g></g>
<g transform="translate(683.5,337.8)"><path d="M0-8.700 8.700 0 0 8.700-8.700 0Z" fill="#e01b24" stroke="#2a0505" stroke-opacity=".8" stroke-width=".8" stroke-dasharray="1.2 .6"/><g fill="#1a0000" fill-opacity=".85"><circle cx="0" cy="-2" r="1.5"/><circle cx="-1.9" cy="1.1" r="1.5"/><circle cx="1.9" cy="1.1" r="1.5"/><circle cy="-.2" r="2.500" fill="none" stroke="#1a0000" stroke-width=".7"/><path d="M-2.600 3.600H2.600" stroke="#1a0000" stroke-width=".8"/></g></g>
<g transform="translate(396.4,335.8)"><rect x=".5" y=".5" width="9" height="9" fill="#f6ea1f" stroke="#000"/><path d="M1.6 6.2H3.4V2.9H5.2V7H6.8V3.8H8.6" fill="none" stroke="#000" stroke-width="1.2"/></g>
<g transform="translate(930.4,336.4)"><rect x=".5" y=".5" width="9" height="9" fill="#f39a1c" stroke="#fff"/><path d="M1.6 6.2H3.4V2.9H5.2V7H6.8V3.8H8.6" fill="none" stroke="#fff" stroke-width="1.2"/></g>
<g transform="translate(692.0,342.7)"><path d="M0-8.700 8.700 0 0 8.700-8.700 0Z" fill="#e01b24" stroke="#2a0505" stroke-opacity=".8" stroke-width=".8" stroke-dasharray="1.2 .6"/><g fill="#1a0000" fill-opacity=".85"><circle cx="0" cy="-2" r="1.5"/><circle cx="-1.9" cy="1.1" r="1.5"/><circle cx="1.9" cy="1.1" r="1.5"/><circle cy="-.2" r="2.500" fill="none" stroke="#1a0000" stroke-width=".7"/><path d="M-2.600 3.600H2.600" stroke="#1a0000" stroke-width=".8"/></g></g>
<g transform="translate(1005.9,343.6)"><path d="M0-9 9 0 0 9-9 0Z" fill="#f4e512"/><path d="M0-7.500 7.500 0 0 7.500-7.500 0Z" fill="none" stroke="#000" stroke-opacity=".7" stroke-width=".7"/><g fill="#000"><path d="M-4.3 1.2C-3 -2.5 -1-2.600 0-1.200 1-2.600 3-2.500 4.300 1.200 2.500 0 1.500 .3 0 1.400-1.500.3-2.500 0-4.300 1.200Z"/></g></g>
<g transform="translate(469.0,343.9)"><path d="M0-9 9 0 0 9-9 0Z" fill="#f4e512"/><path d="M0-7.500 7.500 0 0 7.500-7.500 0Z" fill="none" stroke="#000" stroke-opacity=".7" stroke-width=".7"/><g fill="#000"><path d="M-.5-2H.5V4.300H-.5ZM-4-1.600C-2-3.600 2-3.600 4-1.600 2-2.300 1-2 0-1.200-1-2-2-2.300-4-1.600Z"/></g></g>
<g transform="translate(684.7,347.6)"><path d="M0-8.700 8.700 0 0 8.700-8.700 0Z" fill="#e01b24" stroke="#2a0505" stroke-opacity=".8" stroke-width=".8" stroke-dasharray="1.2 .6"/><g fill="#1a0000" fill-opacity=".85"><circle cx="0" cy="-2" r="1.5"/><circle cx="-1.9" cy="1.1" r="1.5"/><circle cx="1.9" cy="1.1" r="1.5"/><circle cy="-.2" r="2.500" fill="none" stroke="#1a0000" stroke-width=".7"/><path d="M-2.600 3.600H2.600" stroke="#1a0000" stroke-width=".8"/></g></g>
<g transform="translate(415.9,346.7)"><rect x=".5" y=".5" width="9" height="9" fill="#3e6be0" stroke="#dfe8ff"/><path d="M1.6 6.2H3.4V2.9H5.2V7H6.8V3.8H8.6" fill="none" stroke="#fff" stroke-width="1.2"/></g>
<g transform="translate(420.3,348.4)"><rect x=".5" y=".5" width="9" height="9" fill="#3e6be0" stroke="#dfe8ff"/><path d="M1.6 6.2H3.4V2.9H5.2V7H6.8V3.8H8.6" fill="none" stroke="#fff" stroke-width="1.2"/></g>
<g transform="translate(488.0,352.4)"><path d="M0-8.700 8.700 0 0 8.700-8.700 0Z" fill="#e01b24" stroke="#2a0505" stroke-opacity=".8" stroke-width=".8" stroke-dasharray="1.2 .6"/><g fill="#1a0000" fill-opacity=".85"><circle cx="0" cy="-2" r="1.5"/><circle cx="-1.9" cy="1.1" r="1.5"/><circle cx="1.9" cy="1.1" r="1.5"/><circle cy="-.2" r="2.500" fill="none" stroke="#1a0000" stroke-width=".7"/><path d="M-2.600 3.600H2.600" stroke="#1a0000" stroke-width=".8"/></g></g>
<g transform="translate(673.8,352.4)"><path d="M0-8.700 8.700 0 0 8.700-8.700 0Z" fill="#e01b24" stroke="#2a0505" stroke-opacity=".8" stroke-width=".8" stroke-dasharray="1.2 .6"/><g fill="#1a0000" fill-opacity=".85"><circle cx="0" cy="-2" r="1.5"/><circle cx="-1.9" cy="1.1" r="1.5"/><circle cx="1.9" cy="1.1" r="1.5"/><circle cy="-.2" r="2.500" fill="none" stroke="#1a0000" stroke-width=".7"/><path d="M-2.600 3.600H2.600" stroke="#1a0000" stroke-width=".8"/></g></g>
<g transform="translate(682.3,354.4)"><path d="M0-8.700 8.700 0 0 8.700-8.700 0Z" fill="#e01b24" stroke="#2a0505" stroke-opacity=".8" stroke-width=".8" stroke-dasharray="1.2 .6"/><g fill="#1a0000" fill-opacity=".85"><circle cx="0" cy="-2" r="1.5"/><circle cx="-1.9" cy="1.1" r="1.5"/><circle cx="1.9" cy="1.1" r="1.5"/><circle cy="-.2" r="2.500" fill="none" stroke="#1a0000" stroke-width=".7"/><path d="M-2.600 3.600H2.600" stroke="#1a0000" stroke-width=".8"/></g></g>
<g transform="translate(451.4,355.2)"><rect x=".5" y=".5" width="9" height="9" fill="#f6ea1f" stroke="#000"/><path d="M1.6 6.2H3.4V2.9H5.2V7H6.8V3.8H8.6" fill="none" stroke="#000" stroke-width="1.2"/></g>
<g transform="translate(566.3,358.1)"><rect x=".5" y=".5" width="9" height="9" fill="#f6ea1f" stroke="#000"/><path d="M1.6 6.2H3.4V2.9H5.2V7H6.8V3.8H8.6" fill="none" stroke="#000" stroke-width="1.2"/></g>
<g transform="translate(746.8,363.4)"><path d="M0-8.700 8.700 0 0 8.700-8.700 0Z" fill="#e01b24" stroke="#2a0505" stroke-opacity=".8" stroke-width=".8" stroke-dasharray="1.2 .6"/><g fill="#1a0000" fill-opacity=".85"><circle cx="0" cy="-2" r="1.5"/><circle cx="-1.9" cy="1.1" r="1.5"/><circle cx="1.9" cy="1.1" r="1.5"/><circle cy="-.2" r="2.500" fill="none" stroke="#1a0000" stroke-width=".7"/><path d="M-2.600 3.600H2.600" stroke="#1a0000" stroke-width=".8"/></g></g>
<g transform="translate(1016.5,362.9)"><rect x=".5" y=".5" width="9" height="9" fill="#f6ea1f" stroke="#000"/><path d="M1.6 6.2H3.4V2.9H5.2V7H6.8V3.8H8.6" fill="none" stroke="#000" stroke-width="1.2"/></g>
<g transform="translate(948.0,365.6)"><path d="M0-9 9 0 0 9-9 0Z" fill="#f4e512"/><path d="M0-7.500 7.500 0 0 7.500-7.500 0Z" fill="none" stroke="#000" stroke-opacity=".7" stroke-width=".7"/><g fill="#000"><path d="M-4.3 1.2C-3 -2.5 -1-2.600 0-1.200 1-2.600 3-2.500 4.300 1.200 2.500 0 1.500 .3 0 1.400-1.500.3-2.500 0-4.300 1.200Z"/></g></g>
<g transform="translate(756.5,367.0)"><path d="M0-8.700 8.700 0 0 8.700-8.700 0Z" fill="#e01b24" stroke="#2a0505" stroke-opacity=".8" stroke-width=".8" stroke-dasharray="1.2 .6"/><g fill="#1a0000" fill-opacity=".85"><circle cx="0" cy="-2" r="1.5"/><circle cx="-1.9" cy="1.1" r="1.5"/><circle cx="1.9" cy="1.1" r="1.5"/><circle cy="-.2" r="2.500" fill="none" stroke="#1a0000" stroke-width=".7"/><path d="M-2.600 3.600H2.600" stroke="#1a0000" stroke-width=".8"/></g></g>
<g transform="translate(739.0,368.0)"><path d="M0-8.700 8.700 0 0 8.700-8.700 0Z" fill="#e01b24" stroke="#2a0505" stroke-opacity=".8" stroke-width=".8" stroke-dasharray="1.2 .6"/><g fill="#1a0000" fill-opacity=".85"><circle cx="0" cy="-2" r="1.5"/><circle cx="-1.9" cy="1.1" r="1.5"/><circle cx="1.9" cy="1.1" r="1.5"/><circle cy="-.2" r="2.500" fill="none" stroke="#1a0000" stroke-width=".7"/><path d="M-2.600 3.600H2.600" stroke="#1a0000" stroke-width=".8"/></g></g>
<g transform="translate(729.7,371.9)"><path d="M0-8.700 8.700 0 0 8.700-8.700 0Z" fill="#e01b24" stroke="#2a0505" stroke-opacity=".8" stroke-width=".8" stroke-dasharray="1.2 .6"/><g fill="#1a0000" fill-opacity=".85"><circle cx="0" cy="-2" r="1.5"/><circle cx="-1.9" cy="1.1" r="1.5"/><circle cx="1.9" cy="1.1" r="1.5"/><circle cy="-.2" r="2.500" fill="none" stroke="#1a0000" stroke-width=".7"/><path d="M-2.600 3.600H2.600" stroke="#1a0000" stroke-width=".8"/></g></g>
<g transform="translate(1020.8,370.1)"><rect x=".5" y=".5" width="9" height="9" fill="#f39a1c" stroke="#fff"/><path d="M1.6 6.2H3.4V2.9H5.2V7H6.8V3.8H8.6" fill="none" stroke="#fff" stroke-width="1.2"/></g>
<g transform="translate(762.6,373.1)"><path d="M0-8.700 8.700 0 0 8.700-8.700 0Z" fill="#e01b24" stroke="#2a0505" stroke-opacity=".8" stroke-width=".8" stroke-dasharray="1.2 .6"/><g fill="#1a0000" fill-opacity=".85"><circle cx="0" cy="-2" r="1.5"/><circle cx="-1.9" cy="1.1" r="1.5"/><circle cx="1.9" cy="1.1" r="1.5"/><circle cy="-.2" r="2.500" fill="none" stroke="#1a0000" stroke-width=".7"/><path d="M-2.600 3.600H2.600" stroke="#1a0000" stroke-width=".8"/></g></g>
<g transform="translate(1009.5,371.5)"><rect x=".5" y=".5" width="9" height="9" fill="#f6ea1f" stroke="#000"/><path d="M1.6 6.2H3.4V2.9H5.2V7H6.8V3.8H8.6" fill="none" stroke="#000" stroke-width="1.2"/></g>
<g transform="translate(745.6,374.3)"><path d="M0-8.700 8.700 0 0 8.700-8.700 0Z" fill="#e01b24" stroke="#2a0505" stroke-opacity=".8" stroke-width=".8" stroke-dasharray="1.2 .6"/><g fill="#1a0000" fill-opacity=".85"><circle cx="0" cy="-2" r="1.5"/><circle cx="-1.9" cy="1.1" r="1.5"/><circle cx="1.9" cy="1.1" r="1.5"/><circle cy="-.2" r="2.500" fill="none" stroke="#1a0000" stroke-width=".7"/><path d="M-2.600 3.600H2.600" stroke="#1a0000" stroke-width=".8"/></g></g>
<g transform="translate(763.6,381.7)"><path d="M0-8.700 8.700 0 0 8.700-8.700 0Z" fill="#35d42c" stroke="#2a0505" stroke-opacity=".8" stroke-width=".8" stroke-dasharray="1.2 .6"/><g fill="#1a0000" fill-opacity=".85"><circle cx="0" cy="-2" r="1.5"/><circle cx="-1.9" cy="1.1" r="1.5"/><circle cx="1.9" cy="1.1" r="1.5"/><circle cy="-.2" r="2.500" fill="none" stroke="#1a0000" stroke-width=".7"/><path d="M-2.600 3.600H2.600" stroke="#1a0000" stroke-width=".8"/></g></g>
<g transform="translate(431.2,380.8)"><rect x=".5" y=".5" width="9" height="9" fill="#f6ea1f" stroke="#000"/><path d="M1.6 6.2H3.4V2.9H5.2V7H6.8V3.8H8.6" fill="none" stroke="#000" stroke-width="1.2"/></g>
<g transform="translate(488.0,387.2)"><path d="M0-9 9 0 0 9-9 0Z" fill="#f4e512"/><path d="M0-7.500 7.500 0 0 7.500-7.500 0Z" fill="none" stroke="#000" stroke-opacity=".7" stroke-width=".7"/><g fill="#000"><circle cy=".6" r="2.700"/><path d="M1.200-1.800 2.800-3.600" stroke="#000" stroke-width="1"/></g></g>
<g transform="translate(766.4,391.6)"><path d="M0-8.700 8.700 0 0 8.700-8.700 0Z" fill="#35d42c" stroke="#2a0505" stroke-opacity=".8" stroke-width=".8" stroke-dasharray="1.2 .6"/><g fill="#1a0000" fill-opacity=".85"><circle cx="0" cy="-2" r="1.5"/><circle cx="-1.9" cy="1.1" r="1.5"/><circle cx="1.9" cy="1.1" r="1.5"/><circle cy="-.2" r="2.500" fill="none" stroke="#1a0000" stroke-width=".7"/><path d="M-2.600 3.600H2.600" stroke="#1a0000" stroke-width=".8"/></g></g>
<g transform="translate(973.2,395.9)"><path d="M0-9 9 0 0 9-9 0Z" fill="#f4e512"/><path d="M0-7.500 7.500 0 0 7.500-7.500 0Z" fill="none" stroke="#000" stroke-opacity=".7" stroke-width=".7"/><g fill="#000"><path d="M-4.300 3.500-1.500-.8H1.500L4.300 3.500Z"/><path d="M-1-1.800 0-3.800 1-1.800Z"/></g></g>
<g transform="translate(953.7,393.7)"><rect x=".5" y=".5" width="9" height="9" fill="#f6ea1f" stroke="#000"/><path d="M1.6 6.2H3.4V2.9H5.2V7H6.8V3.8H8.6" fill="none" stroke="#000" stroke-width="1.2"/></g>
<g transform="translate(1031.5,393.7)"><rect x=".5" y=".5" width="9" height="9" fill="#f6ea1f" stroke="#000"/><path d="M1.6 6.2H3.4V2.9H5.2V7H6.8V3.8H8.6" fill="none" stroke="#000" stroke-width="1.2"/></g>
<g transform="translate(1102.3,394.4)"><rect x=".5" y=".5" width="9" height="9" fill="#f6ea1f" stroke="#000"/><path d="M1.6 6.2H3.4V2.9H5.2V7H6.8V3.8H8.6" fill="none" stroke="#000" stroke-width="1.2"/></g>
<g transform="translate(988.0,397.8)"><path d="M0-9 9 0 0 9-9 0Z" fill="#f4e512"/><path d="M0-7.500 7.500 0 0 7.500-7.500 0Z" fill="none" stroke="#000" stroke-opacity=".7" stroke-width=".7"/><g fill="#000"><path d="M-4.300 3.500-1.500-.8H1.500L4.300 3.500Z"/><path d="M-1-1.800 0-3.800 1-1.800Z"/></g></g>
<g transform="translate(753.6,399.0)"><path d="M0-8.700 8.700 0 0 8.700-8.700 0Z" fill="#35d42c" stroke="#2a0505" stroke-opacity=".8" stroke-width=".8" stroke-dasharray="1.2 .6"/><g fill="#1a0000" fill-opacity=".85"><circle cx="0" cy="-2" r="1.5"/><circle cx="-1.9" cy="1.1" r="1.5"/><circle cx="1.9" cy="1.1" r="1.5"/><circle cy="-.2" r="2.500" fill="none" stroke="#1a0000" stroke-width=".7"/><path d="M-2.600 3.600H2.600" stroke="#1a0000" stroke-width=".8"/></g></g>
<g transform="translate(997.4,399.0)"><rect x=".5" y=".5" width="9" height="9" fill="#f6ea1f" stroke="#000"/><path d="M1.6 6.2H3.4V2.9H5.2V7H6.8V3.8H8.6" fill="none" stroke="#000" stroke-width="1.2"/></g>
<g transform="translate(434.9,401.5)"><rect x=".5" y=".5" width="9" height="9" fill="#f6ea1f" stroke="#000"/><path d="M1.6 6.2H3.4V2.9H5.2V7H6.8V3.8H8.6" fill="none" stroke="#000" stroke-width="1.2"/></g>
<g transform="translate(1012.3,403.5)"><rect x=".5" y=".5" width="9" height="9" fill="#f6ea1f" stroke="#000"/><path d="M1.6 6.2H3.4V2.9H5.2V7H6.8V3.8H8.6" fill="none" stroke="#000" stroke-width="1.2"/></g>
<g transform="translate(431.3,406.5)"><rect x=".5" y=".5" width="9" height="9" fill="#f6ea1f" stroke="#000"/><path d="M1.6 6.2H3.4V2.9H5.2V7H6.8V3.8H8.6" fill="none" stroke="#000" stroke-width="1.2"/></g>
<g transform="translate(438.5,406.5)"><rect x=".5" y=".5" width="9" height="9" fill="#3e6be0" stroke="#dfe8ff"/><path d="M1.6 6.2H3.4V2.9H5.2V7H6.8V3.8H8.6" fill="none" stroke="#fff" stroke-width="1.2"/></g>
<g transform="translate(995.6,406.9)"><rect x=".5" y=".5" width="9" height="9" fill="#f6ea1f" stroke="#000"/><path d="M1.6 6.2H3.4V2.9H5.2V7H6.8V3.8H8.6" fill="none" stroke="#000" stroke-width="1.2"/></g>
<g transform="translate(760.2,427.9)"><path d="M0-9 9 0 0 9-9 0Z" fill="#f4e512"/><path d="M0-7.500 7.500 0 0 7.500-7.500 0Z" fill="none" stroke="#000" stroke-opacity=".7" stroke-width=".7"/><g fill="#000"><circle cx="0" cy="-2" r="1.5"/><circle cx="-1.9" cy="1.1" r="1.5"/><circle cx="1.9" cy="1.1" r="1.5"/><circle cy="-.2" r="2.500" fill="none" stroke="#1a0000" stroke-width=".7"/><path d="M-2.600 3.600H2.600" stroke="#1a0000" stroke-width=".8"/></g></g>
<g transform="translate(164.5,428.5)"><rect x=".5" y=".5" width="9" height="9" fill="#f39a1c" stroke="#fff"/><path d="M1.6 6.2H3.4V2.9H5.2V7H6.8V3.8H8.6" fill="none" stroke="#fff" stroke-width="1.2"/></g>
<g transform="translate(848.2,431.9)"><rect x=".5" y=".5" width="9" height="9" fill="#f6ea1f" stroke="#000"/><path d="M1.6 6.2H3.4V2.9H5.2V7H6.8V3.8H8.6" fill="none" stroke="#000" stroke-width="1.2"/></g>
<g transform="translate(464.1,436.3)"><rect x=".5" y=".5" width="9" height="9" fill="#3e6be0" stroke="#dfe8ff"/><path d="M1.6 6.2H3.4V2.9H5.2V7H6.8V3.8H8.6" fill="none" stroke="#fff" stroke-width="1.2"/></g>
<g transform="translate(469.7,445.3)"><rect x=".5" y=".5" width="9" height="9" fill="#f6ea1f" stroke="#000"/><path d="M1.6 6.2H3.4V2.9H5.2V7H6.8V3.8H8.6" fill="none" stroke="#000" stroke-width="1.2"/></g>
<g transform="translate(462.9,448.0)"><rect x=".5" y=".5" width="9" height="9" fill="#3e6be0" stroke="#dfe8ff"/><path d="M1.6 6.2H3.4V2.9H5.2V7H6.8V3.8H8.6" fill="none" stroke="#fff" stroke-width="1.2"/></g>
<g transform="translate(702.0,452.8)"><path d="M0-9 9 0 0 9-9 0Z" fill="#f4e512"/><path d="M0-7.500 7.500 0 0 7.500-7.500 0Z" fill="none" stroke="#000" stroke-opacity=".7" stroke-width=".7"/><g fill="#000"><path d="M-3.800 2.500-.8-.8C-.5-2.500 1-3.300 2.200-2.600L3.800-2.800 2.600-1.700C2.600 0 1.500 1.400 0 1.800L-1 3.500H-2L-1.600 2.200Z"/></g></g>
<g transform="translate(475.1,459.4)"><rect x=".5" y=".5" width="9" height="9" fill="#f6ea1f" stroke="#000"/><path d="M1.6 6.2H3.4V2.9H5.2V7H6.8V3.8H8.6" fill="none" stroke="#000" stroke-width="1.2"/></g>
<g transform="translate(455.6,469.9)"><rect x=".5" y=".5" width="9" height="9" fill="#f6ea1f" stroke="#000"/><path d="M1.6 6.2H3.4V2.9H5.2V7H6.8V3.8H8.6" fill="none" stroke="#000" stroke-width="1.2"/></g>
<g transform="translate(455.6,479.6)"><rect x=".5" y=".5" width="9" height="9" fill="#3e6be0" stroke="#dfe8ff"/><path d="M1.6 6.2H3.4V2.9H5.2V7H6.8V3.8H8.6" fill="none" stroke="#fff" stroke-width="1.2"/></g>
<g transform="translate(1159.9,488.7)"><path d="M0-8.700 8.700 0 0 8.700-8.700 0Z" fill="#e01b24" stroke="#2a0505" stroke-opacity=".8" stroke-width=".8" stroke-dasharray="1.2 .6"/><g fill="#1a0000" fill-opacity=".85"><circle cx="0" cy="-2" r="1.5"/><circle cx="-1.9" cy="1.1" r="1.5"/><circle cx="1.9" cy="1.1" r="1.5"/><circle cy="-.2" r="2.500" fill="none" stroke="#1a0000" stroke-width=".7"/><path d="M-2.600 3.600H2.600" stroke="#1a0000" stroke-width=".8"/></g></g>
<g transform="translate(1167.5,490.5)"><rect x=".5" y=".5" width="9" height="9" fill="#3e6be0" stroke="#dfe8ff"/><path d="M1.6 6.2H3.4V2.9H5.2V7H6.8V3.8H8.6" fill="none" stroke="#fff" stroke-width="1.2"/></g>
<g transform="translate(1162.5,494.5)"><rect x=".5" y=".5" width="9" height="9" fill="#fff" stroke="#000"/><path d="M1.6 6.2H3.4V2.9H5.2V7H6.8V3.8H8.6" fill="none" stroke="#000" stroke-width="1.2"/></g>
<g transform="translate(1156.5,498.5)"><rect x=".5" y=".5" width="9" height="9" fill="#fff" stroke="#000"/><path d="M1.6 6.2H3.4V2.9H5.2V7H6.8V3.8H8.6" fill="none" stroke="#000" stroke-width="1.2"/></g>
<g transform="translate(415.5,502.5)"><rect x=".5" y=".5" width="9" height="9" fill="#f6ea1f" stroke="#000"/><path d="M1.6 6.2H3.4V2.9H5.2V7H6.8V3.8H8.6" fill="none" stroke="#000" stroke-width="1.2"/></g>
<g transform="translate(403.0,502.9)"><rect x=".5" y=".5" width="9" height="9" fill="#f6ea1f" stroke="#000"/><path d="M1.6 6.2H3.4V2.9H5.2V7H6.8V3.8H8.6" fill="none" stroke="#000" stroke-width="1.2"/></g>
<g transform="translate(1160.5,506.5)"><rect x=".5" y=".5" width="9" height="9" fill="#3e6be0" stroke="#dfe8ff"/><path d="M1.6 6.2H3.4V2.9H5.2V7H6.8V3.8H8.6" fill="none" stroke="#fff" stroke-width="1.2"/></g>
<g transform="translate(1149.9,509.5)"><path d="M0-8.700 8.700 0 0 8.700-8.700 0Z" fill="#e01b24" stroke="#2a0505" stroke-opacity=".8" stroke-width=".8" stroke-dasharray="1.2 .6"/><g fill="#1a0000" fill-opacity=".85"><circle cx="0" cy="-2" r="1.5"/><circle cx="-1.9" cy="1.1" r="1.5"/><circle cx="1.9" cy="1.1" r="1.5"/><circle cy="-.2" r="2.500" fill="none" stroke="#1a0000" stroke-width=".7"/><path d="M-2.600 3.600H2.600" stroke="#1a0000" stroke-width=".8"/></g></g>
<g transform="translate(449.0,508.1)"><rect x=".5" y=".5" width="9" height="9" fill="#3e6be0" stroke="#dfe8ff"/><path d="M1.6 6.2H3.4V2.9H5.2V7H6.8V3.8H8.6" fill="none" stroke="#fff" stroke-width="1.2"/></g>
<g transform="translate(1150.5,510.5)"><rect x=".5" y=".5" width="9" height="9" fill="#fff" stroke="#000"/><path d="M1.6 6.2H3.4V2.9H5.2V7H6.8V3.8H8.6" fill="none" stroke="#000" stroke-width="1.2"/></g>
<g transform="translate(1140.5,513.5)"><rect x=".5" y=".5" width="9" height="9" fill="#3e6be0" stroke="#dfe8ff"/><path d="M1.6 6.2H3.4V2.9H5.2V7H6.8V3.8H8.6" fill="none" stroke="#fff" stroke-width="1.2"/></g>
<g transform="translate(1135.5,518.5)"><rect x=".5" y=".5" width="9" height="9" fill="#fff" stroke="#000"/><path d="M1.6 6.2H3.4V2.9H5.2V7H6.8V3.8H8.6" fill="none" stroke="#000" stroke-width="1.2"/></g>
<g transform="translate(1096.3,594.5)"><rect x=".5" y=".5" width="9" height="9" fill="#f6ea1f" stroke="#000"/><path d="M1.6 6.2H3.4V2.9H5.2V7H6.8V3.8H8.6" fill="none" stroke="#000" stroke-width="1.2"/></g>
<g transform="translate(997,425.3)"><circle r="6" fill="#f59b14"/><path d="M-1-6C3-9.500 7-8 7.500-6.500 5-7 3-6 2-4.500ZM1 6C-3 9.500-7 8-7.500 6.500-5 7-3 6-2 4.500Z" fill="#f59b14"/><text y="3" font-size="8" font-family="Liberation Sans,sans-serif" text-anchor="middle" fill="#b36b00">2</text></g>
</svg>
<div class="zoomc"><div>+</div><div>&#8722;</div></div>
<div class="fsc"><div><svg width="30" height="30" viewBox="0 0 30 30"><path d="M8 12.500V8H12.500M17.500 8H22V12.500M22 17.500V22H17.500M12.500 22H8V17.500" fill="none" stroke="#444" stroke-width="2"/></svg></div></div>
<div class="layers"><div><svg width="44" height="44" viewBox="0 0 44 44"><path d="M9 24.500 22 18 35 24.500 22 32.500Z" fill="#cfcfcf" stroke="#999" stroke-width=".8"/><path d="M9 20.500 22 14 35 20.500 22 28.500Z" fill="#dcdcdc" stroke="#999" stroke-width=".8"/><path d="M9 16.500 22 10 35 16.500 22 24.500Z" fill="#e9e9e9" stroke="#999" stroke-width=".8"/></svg></div></div>
<svg style="position:absolute;left:1286.9px;top:512.5px" width="80" height="80" viewBox="0 0 80 80"><defs><radialGradient id="gg" cx=".4" cy=".35" r=".75"><stop offset="0" stop-color="#ececec"/><stop offset="1" stop-color="#d8d8d8"/></radialGradient><clipPath id="gcl"><circle cx="40" cy="40" r="40"/></clipPath></defs><circle cx="40" cy="40" r="40" fill="url(#gg)"/><g clip-path="url(#gcl)"><path d="M38.5,0.1 38.1,0.1 37.5,0.2 36.7,0.4 36,0.4 34.9,0.5 33.8,0.7 32.9,0.9 31.9,1.1 31.4,1.3 30.9,1.6 30.6,1.7 30.1,1.8 29.8,2 29.2,2.2 28.2,2.6 27.5,2.8 27,3.1 26.8,3.4 26.2,3.6 26.5,3.7 26.1,4.1 26,4.4 26.5,4.4 26.2,4.7 26.2,4.9 26.2,4.9 26.6,4.8 26.7,4.9 26,5.1 25.3,5.4 24.7,5.7 25,5.8 25.7,5.6 26.2,5.5 26.2,5.7 26,5.9 25.3,6.2 24.6,6.4 24.1,6.5 23.9,6.3 24,6.1 23.2,6.3 22.7,6.4 22.2,6.3 21.6,6.3 20.8,6.5 20.1,6.8 20.6,6.6 19.8,7.1 19.2,7.5 18.5,8.3 17.8,9.1 17.4,9.7 17.1,10.1 16.2,10.7 15.2,11.5 15,11.8 15.4,11.9 16.3,11.2 17.2,10.6 17.6,10.5 18.4,10.2 19.2,9.5 19.7,9.1 20.8,8.5 21.5,8.3 21.7,8.3 21.7,8.6 21.6,9.2 20.9,10 20.1,10.8 20.5,10.8 21.2,10.8 20.6,11.3 19.7,12.6 18.8,13.8 18.5,14.9 17.8,15.8 16.9,15.7 15.9,15.8 15.3,15.6 14.5,15.9 14,16.6 13.5,16.7 13.2,17.5 14.3,17.5 14.6,17.9 13.7,18.1 12.7,18.3 12.3,18 12.5,17.4 12.1,17.3 11.5,17.5 11.1,17.6 10.7,17.6 10,17.9 9.2,18.5 8.5,18.9 7.7,20.1 7,20.3 6.3,20.9 5.6,21.5 4.8,22.6 3.9,24.5 5.5,22.5 4.4,24.7 3.6,25.9 3.2,26.4 3.6,25.3 4.3,23.7 5.1,22 5.4,21.2 5.6,20.4 5.7,19.7 6.2,18.7 6.3,18.4 5.6,19.6 4.6,21.5 3.5,23.7 2.8,25.3 2.7,25.4 3.2,24.4 3,25.1 2.7,25.8 2.5,26.2 2,27.5 1.8,28.2 1.5,29.2 1.3,30.4 0.9,32.2 0.6,33.6 0.6,34.7 0.6,35.9 0.8,36.7 0.5,37.2 0.3,37 0.3,35.8 0.4,34.5 0.6,33 1.1,30.7 1.5,29 1.9,27.7 2.4,26.3 3.3,24 4.1,22.3 5,20.7 6.4,18.3 8.1,15.9 9.7,13.9 9.8,13.8 8.8,15 7.5,16.6 6.2,18.6 5.4,20 5.8,19.2 7.3,17 9,14.8 10.7,12.8 12.2,11.2 14.1,9.5 15.6,8.3 17.4,7 19.1,5.9 19.9,5.4 20.9,4.9 20.5,5.1 21.7,4.5 22.6,4 23.7,3.5 25,2.9 26.1,2.5 27.5,2 28.5,1.7 29.4,1.4 30.7,1.1 31.6,0.9 32.6,0.7 33,0.6 33.5,0.5 33.9,0.5 35.3,0.3 37.2,0.1 39,0 37.6,0.1 36.3,0.2 35.4,0.3 34.9,0.3 35.6,0.2 36.3,0.2 37.2,0.1 38.2,0 37.9,0.1 38.2,0 37.3,0.1 38.1,0 38.7,0 38.7,0 38.1,0.1ZM17.5,16 17.2,17 16.5,18.4 15.8,18.7 15.6,18 15.2,17.9 15.5,17 16.4,16.6ZM3,25.6 3.2,25.9 3.1,27.1 3,28.8 2.8,28.6 2.8,27.2 2.8,26.3ZM3,29.8 3.4,30.2 3.6,31.7 3.1,32 2.8,31.2 2.7,30.3ZM31.1,1.8 32,1.9 31.7,2.1 31.1,2.3 30.5,2.5 30.4,2.3 30.2,2.2 30.3,2ZM30,2.3 30.4,2.5 29.9,2.7 29.4,2.9 28.9,3.1 28.4,3.2 27.6,3.6 26.8,3.9 26.6,3.8 27.1,3.4 27.3,3.1 28.1,2.7 28.9,2.5 29,2.6 29.6,2.4ZM29.7,3 29.7,3.2 29.1,3.3 28.4,3.4 28.8,3.2ZM28.9,3.5 29.4,3.5 29.3,3.8 28.5,4 28,4 27.8,3.9 28.4,3.6ZM29.2,3.9 29.2,4.2 28.9,4.3 28.4,4.2 27.8,4.3 26.8,4.7 26.6,4.5 27.1,4.3 28,4.1ZM32.8,2.1 32.9,2.2 32.8,2.4 32.5,2.4 32.3,2.3 32.5,2.1ZM32,2.3 32,2.5 31.5,2.7 31.9,2.8 31.4,2.9 31,3.1 30.6,3.1 30.8,2.8 30.8,2.7 31.1,2.5 31.3,2.6 31.5,2.4ZM31.3,3.1 31.3,3.2 31.1,3.5 30.6,3.6 30.2,3.6 30.2,3.5 30.7,3.3 31,3.1ZM30.5,3.9 30.2,4.2 30.2,4.5 30,4.9 29.6,5 29.4,4.9 29.4,4.5 29.5,4.2 30,4ZM32.8,3 32.8,3.2 32.4,3.3 32,3.4 32,3.3 32.5,3ZM32.4,3.4 32.4,3.5 31.8,3.6 31.6,3.7 31.6,3.6 32,3.4ZM32.6,3.6 32.5,4.6 32,4.7 31.6,4.7 31.2,4.7 30.7,4.8 30.5,4.7 30.6,4.3 30.7,4.1 31.1,4 31.2,4.1 31.6,4.1 31.9,3.9 32.2,3.7ZM33.1,2.6 33.1,2.8 32.8,2.8 32.9,2.7ZM32.8,2.6 32.7,2.7 32.4,2.8 32.4,2.7 32.7,2.6ZM0.7,35 0.9,34.7 1.4,34.6 1.6,35.8 2.1,36.5 2.7,37.7 3.7,39.4 4.4,41.3 5.1,43.1 5.8,45.4 7,47.9 8.4,49.8 9.9,51.9 11.6,53.9 12.7,55.7 13.1,57.3 12.5,58.7 12,60.3 12.1,61.9 11.9,63.3 11.3,63.8 10.4,64.1 10.1,64.7 10.2,65.4 10.4,66.1 10.8,66.9 10.7,66.8 10.1,66.4 11,67.5 11.1,67.6 10.8,67.3 11.1,67.6 11.7,68.3 11.9,68.4 12.4,68.9 13.6,70.1 14.4,70.7 14.9,71.2 15.7,71.8 16.6,72.4 17.3,72.9 17.2,72.8 16.7,72.5 15.9,71.9 14.9,71.2 13.8,70.2 12.7,69.2 11.5,68 10.3,66.8 9.1,65.4 8,64.1 7,62.6 6.6,61.9 5.7,60.6 4.8,59 3.9,57.2 3,55.3 2.1,52.6 1.3,50 0.7,47.4 0.3,44.8 0.1,42.5 0,40.6 0.1,38.5 0.3,36.8ZM31.4,12.5 31.9,12.3 32.5,12.6 33.3,12.5 33.8,12.9 33.8,13.4 33.1,13.8 32.2,13.9 31.6,13.7 31.2,13.3 31.1,12.8ZM27.4,4.8 28.5,4.5 28.8,4.6 28.9,4.7 28.2,4.9 28.8,4.8 28.8,5 28.8,5.3 28.5,5.6 28.1,5.7 27.7,6.2 27.1,6.8 26.5,7.4 25.7,8 25.4,8.5 25.1,8.8 24.6,9 24,9.1 23.6,9.1 22.9,9.5 22.7,9.4 22.3,9.9 21.9,10.1 21.9,9.8 22.1,9.3 22.4,8.8 22.9,8.4 23,8.1 22.8,7.8 22.9,7.6 23.2,7.5 23.6,7.6 23.8,7.6 24.3,7.6 24.9,7.4 25.5,7 26.2,6.6 26.5,6.2 26.4,6 26.3,5.8 26.5,5.5 26.8,5.2 27.1,4.9 27.3,4.8ZM23.5,6.3 23.7,6.3 23.5,6.6 22.8,7.1 22.5,7.4 22.2,7.5 22.4,7.2 22.1,7.1 22,7 22.7,6.6ZM21.8,7.3 21.8,7.5 21.5,7.7 21.5,7.5ZM25.1,6.7 25.2,6.9 24.8,7.1 24.6,7 24.7,6.9ZM30.8,31.7 33.4,31.8 35.8,31.5 38.2,31.3 40.6,30.9 41.5,31.6 41.8,33.5 43.1,34.4 45.2,34.8 46.8,35.7 48.3,35.3 50.1,34.1 52.1,34.1 54,34 55.3,33.2 55.2,33.7 55.3,30.9 55.3,29.6 54.5,29.9 53.3,30 52.1,30.5 50.9,30.4 50.3,29.2 50.4,28.3 50,28 48.8,28 47.9,28.3 47.5,29 47.9,29.8 47.7,30.8 46.9,30.6 46.3,29.4 45.5,28.5 44.5,27.7 43.5,26.6 42.6,26.1 42.1,26.7 42.7,27.5 44,28.6 45,29.6 44.2,29.5 44.8,30.3 44.5,31.1 44.2,30.6 43.2,29.9 41.9,29 40.9,27.8 40.3,27 39.4,27.4 38.5,27.7 37.3,28 36.2,28.3 35.4,29.2 34.6,30.4 33.2,31.2 31.8,31.4 30.8,30.6 30.5,30 31.1,28.2 31.3,26.6 32.7,26.5 34.4,26.8 36.1,27.3 35.4,26 35.4,24.7 34.8,23.6 34.4,23.2 35.5,22.6 36.7,22.2 37.7,21.7 38.4,21.1 39.4,20.5 40.4,20.1 40.1,19 40.7,18.7 40.4,18.1 39.9,18 39.3,17.5 39.1,16.1 39.6,15.2 40.6,14.4 41.3,13.6 41.8,12.9 42.4,12 43.1,11.4 43.8,10.9 44.5,10.8 45.2,10.8 45.6,11 46.3,11 47.2,11.2 48.1,11.4 48.3,11.9 48,12.3 47.3,12.4 46.7,12.1 47.3,12.7 48.1,13.2 48.6,12.8 48.7,12.2 49.1,11.9 48.9,11.2 49.3,10.9 50,11.2 50.4,10.9 50.5,10.4 50.9,9.9 51.1,9.6 50.9,9.3 51.1,9 51.6,8.9 51.5,8.4 50.6,7.7 50.5,7.4 51.4,7.7 52.7,8.3 53.7,9 54.1,9 53.2,8.4 52.2,7.7 51.5,7.1 51,6.7 50.8,6.3 50.2,5.9 50,5.4 49.6,4.8 49.3,4.3 49,3.8 49.2,3.6 50,3.8 50.8,4.1 51,3.9 50.8,3.6 50.3,3.1 49.9,2.8 50.1,2.7 50.9,2.7 50.3,2.4 49.5,2.1 48.9,1.9 48.3,1.6 47.8,1.3 47.2,1.1 46.3,0.8 45.6,0.6 44.6,0.4 44,0.4 43,0.2 41.9,0.1 41.1,0 40.2,0 39.7,0 40.2,0 41.2,0 41.9,0 42.5,0.1 42.9,0.1 42.8,0.1 44,0.2 45.6,0.4 46.1,0.5 47.3,0.7 47.9,0.8 48.7,0.9 49,1 49.9,1.2 50.2,1.3 51,1.6 52,1.8 52.3,1.9 53.3,2.3 53.2,2.3 52.8,2.1 52.1,1.9 51.2,1.6 50.6,1.4 49.8,1.2 48.7,1 48.1,0.8 47.4,0.7 47.8,0.8 48.9,1 49.8,1.2 51.1,1.6 52.1,1.9 53.1,2.2 54.5,2.7 55.7,3.2 57.1,3.8 58.4,4.5 58.2,4.4 57.5,4 57.5,4 57.9,4.2 58.6,4.6 59.6,5.1 61.4,6.2 62.9,7.2 64.1,8.1 64.3,8.2 65,8.8 65.6,9.3 67,10.5 67.1,10.6 67.6,11 68.3,11.7 68.9,12.3 69.3,12.7 68.7,12.1 68,11.4 68.2,11.7 67.5,11 67.5,10.9 68.2,11.7 68.6,12 67.8,11.3 67.9,11.3 68.6,12 69.1,12.6 69.5,13 69.7,13.2 69.2,12.6 69.1,12.6 69.9,13.5 70.6,14.2 70.8,14.4 71.4,15.2 71.5,15.4 72.1,16.1 72.8,17.1 73.7,18.4 74.4,19.7 75.1,20.9 75.6,21.8 75.8,22.1 76.2,22.9 76.7,24.2 76.4,23.5 76.5,23.5 76.7,24 77,24.8 77.5,26 77.8,26.8 78,27.4 78.3,28.3 78.6,29.5 79,31 79.3,32.6 79.2,32 79,31.3 79,31.2 78.9,31 79.3,33.1 79.5,34 79.6,34.7 79.8,35.6 79.9,36.9 79.9,37.3 79.9,37.6 79.9,37.2 79.8,35.9 79.6,34.9 79.3,33.2 78.9,31.5 78.6,30.7 78.3,29.8 78.4,30.8 78.4,31 77.8,29.5 77.2,28.7 76.8,27.9 76.6,28.1 76.6,29.1 76.5,29.6 76.7,30.1 76.7,31.4 76.9,33.8 76.7,35.2 77,36.4 77.2,37.5 77.2,38.7 77.2,39.9 77.1,40.6 76.5,39.7 75.8,38.2 75,36.6 74.2,34.8 73.5,33 73.5,33.7 73.1,34.2 72.3,33.5 71.8,32.9 71.3,32.8 70.9,32.4 70.2,32.8 69.1,33.4 68.5,33.1 67.3,33.1 66.5,33.2 65,32.7 63.6,32.2 62.5,32.3 63.2,32.9 64.3,34.2 65.3,34.6 66.5,34.4 67,33.5 68.4,34 69.4,35.3 69.1,37.3 68,39.7 66.6,41.4 65.2,43.3 63.5,44.7 62.8,44.5 61.8,42.8 60.3,40.3 58.7,37.6 56.8,34.7 55.7,33.3 54.9,33.7 55.8,36 57.5,38.7 59.2,41.4 60.7,43.8 62,45.4 62.5,46 63.6,45.9 64.9,45.1 66.7,44.2 66.1,46.9 65.4,48 64.1,50.2 62.7,52.3 61.5,54.8 60.9,57 61.1,58.5 61.1,60.4 60.5,62 58.9,64.1 57.7,65.6 56.9,67 56,68.6 54.8,69.9 53,71.1 51.3,72.3 49.7,73 48.2,73.5 46.7,73.7 46.1,73.1 45,71.4 43.9,69.3 42.9,67 42.3,64.8 42.7,61.5 42.4,58.4 41.2,55.2 40.6,51.8 40.6,53.7 38.2,53.1 34.6,52.7 31.1,52.7 27.7,52.6 26.9,51.1 25.6,48.9 24.6,47 24.2,45.8 24.1,42.8 24.8,40.4 26,38.1 27.7,36.1 29.4,34.4 31.1,32.9 32.5,31.8ZM34.6,17.6 35.4,17.3 36.1,17.7 35.5,18.5 36.2,19.4 36.7,20.4 37.4,20.9 37,21.5 35.6,21.7 34.1,21.8 35,21.2 34.4,20.5 35.1,19.6 34.6,19 34.3,18.2ZM33,19.1 34.1,18.9 34.4,19.7 33.8,20.6 32.7,20.8 32.6,20ZM48.1,8.5 48.5,8.3 49.2,8.7 49.6,9.3 49.4,9.3 48.8,8.9ZM47.1,5.9 46.9,5.5 46.1,5.3 45.6,5.3 45.8,5.5 46.4,5.7ZM40.4,7.4 40.9,7.4 41.2,7.7 41.1,8.1 40.7,8 40.5,7.7ZM47.5,2.1 47,2 46.7,1.7 47.1,1.7 47.7,1.9 47.8,2.1ZM46.7,1.6 46.2,1.4 46.4,1.4 46.8,1.6ZM42.1,0.3 41.6,0.3 41.2,0.2 41.6,0.2 42.1,0.2ZM47.7,4.2 47.6,3.8 48.1,3.9 48.1,4.2ZM48.5,4.2 48.5,3.9 49,4 49,4.3ZM65.5,59.8 66,60.5 65.3,62.7 64.1,65 62.7,66.9 61.7,67.3 61.5,66.2 62.3,64.1 63.3,62.5 64.5,61.1ZM79.8,37.2 79.9,37.3 79.9,37.8 80,38.4 80,39.4 80,39.8 80,41.5 80,41.9 80,41.4 80,40.6 80,38.8 79.9,38.3ZM77.6,40.1 77.5,38.8 77.9,39.3 78.1,40.2 78.1,40.8 77.9,41.2ZM2.2,29.5 2.2,30.1 2,30.1ZM3.3,32.4 3.6,32.9 3.4,33.1 3.2,32.7ZM31.2,26.5 31.5,26.5 31.2,26.8ZM32.6,4.8 32,4.9 31.5,5.1 31,5.4 30.8,5.7 30.9,6.1 30.8,6.3 30.4,6.7 29.8,7.2 29.2,7.6 28.2,8.2 27.3,8.8 26.3,9.6 25.3,10.6 24.6,11.5 24.1,12.5 24.2,13.2 24.7,13.3 25.3,12.9 26.3,12.2 27.3,11.7 28.5,11.3 29.6,11.1 30.7,11 31.9,10.8 33,10.6 33.5,10.3 33.8,9.8 33.7,9.4 34.4,9 35,8.7 35.5,8.4 35.9,7.9 36.1,7.4 36.4,7Z" fill="#bbb"/></g><path d="M40 38c-3.200-4.200-4.600-6-4.600-8.300a4.600 4.600 0 0 1 9.200 0c0 2.300-1.400 4.100-4.600 8.300z" fill="#5ed11c"/><circle cx="40" cy="29.7" r="1.700" fill="#d8f5c4"/></svg>
<div class="search"><svg width="25" height="25" viewBox="0 0 25 25"><circle cx="10.800" cy="10.800" r="5.600" fill="none" stroke="#333" stroke-width="2.200"/><path d="M15 15 20.500 20.500" stroke="#333" stroke-width="3" stroke-linecap="round"/></svg></div>
<div class="scale" style="top:583px;width:84px;height:16px">3000 km</div>
<div class="scale" style="top:599px;width:91px;height:16px;border-top:1px solid rgba(90,95,105,.6)">2000 mi</div>
<div class="attr"><a>Leaflet</a> | Powered by <a>Esri</a> | DigitalGlobe, GeoEye, i-cubed, USDA, USGS, AEX, Getmapping, Aerogrid, IGN, IGP, swisstopo, and the GIS User Community</div>
</div>
<div class="bell"><svg width="48" height="48" viewBox="0 0 48 48"><circle cx="24" cy="24" r="18" fill="none" stroke="#fff" stroke-width="1.300"/><path d="M24 11.500C19.500 11.500 17.300 15 17.300 19.500 17.300 25 15.500 27.500 13.500 29.500V31H34.500V29.500C32.500 27.500 30.700 25 30.700 19.500 30.700 15 28.500 11.500 24 11.500Z" fill="#fff"/><path d="M21 32.800H27C27 34.500 25.700 35.600 24 35.600S21 34.500 21 32.800Z" fill="#fff"/></svg></div>
</body></html>
